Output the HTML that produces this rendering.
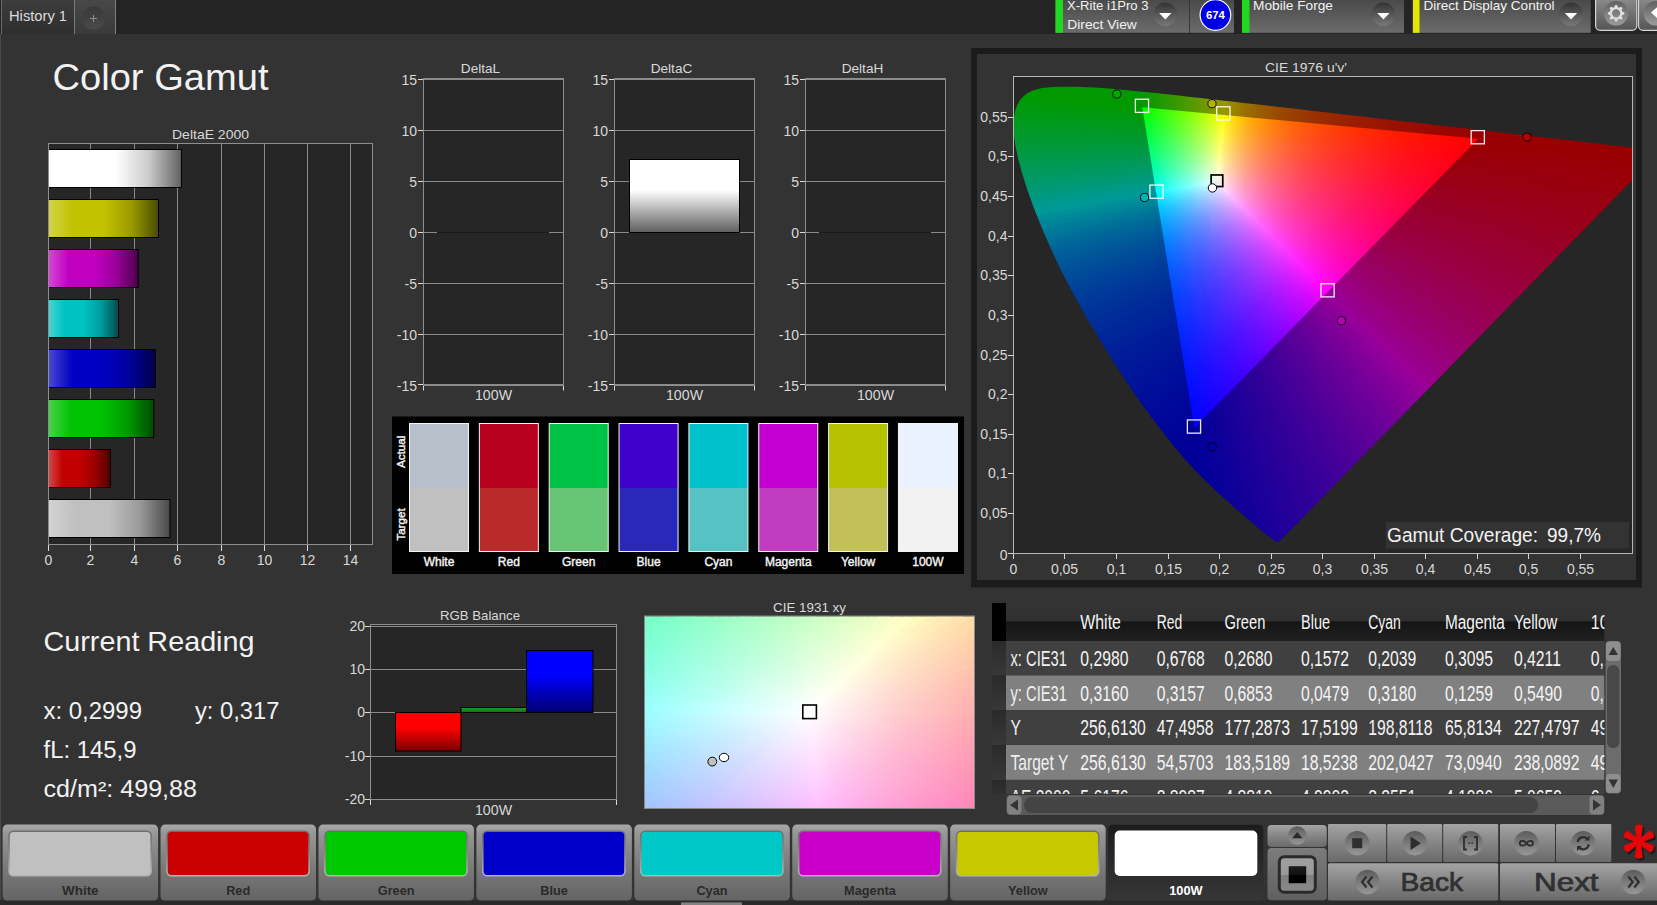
<!DOCTYPE html>
<html><head><meta charset="utf-8"><title>Color Gamut</title>
<style>html,body{margin:0;padding:0;background:#333;overflow:hidden}svg{display:block}text{font-family:"Liberation Sans",sans-serif}</style></head>
<body>
<svg width="1657" height="905" viewBox="0 0 1657 905">
<defs>
<linearGradient id="g1" x1="0" y1="0" x2="0" y2="1"><stop offset="0" stop-color="#3d3d3d"/><stop offset="1" stop-color="#2e2e2e"/></linearGradient>
<linearGradient id="g2" x1="0" y1="0" x2="0" y2="1"><stop offset="0" stop-color="#484848"/><stop offset="1" stop-color="#3a3a3a"/></linearGradient>
<linearGradient id="g3" x1="0" y1="0" x2="0" y2="1"><stop offset="0" stop-color="#383838"/><stop offset="1" stop-color="#4a4a4a"/></linearGradient>
<linearGradient id="g4" x1="0" y1="0" x2="1" y2="0"><stop offset="0" stop-color="#ffffff"/><stop offset="0.22" stop-color="#ffffff"/><stop offset="0.5" stop-color="#ffffff"/><stop offset="0.75" stop-color="#cccccc"/><stop offset="1" stop-color="#616161"/></linearGradient>
<linearGradient id="g5" x1="0" y1="0" x2="1" y2="0"><stop offset="0" stop-color="#d3d347"/><stop offset="0.22" stop-color="#c2c200"/><stop offset="0.5" stop-color="#c2c200"/><stop offset="0.75" stop-color="#9b9b00"/><stop offset="1" stop-color="#4a4a00"/></linearGradient>
<linearGradient id="g6" x1="0" y1="0" x2="1" y2="0"><stop offset="0" stop-color="#d347d3"/><stop offset="0.22" stop-color="#c200c2"/><stop offset="0.5" stop-color="#c200c2"/><stop offset="0.75" stop-color="#9b009b"/><stop offset="1" stop-color="#4a004a"/></linearGradient>
<linearGradient id="g7" x1="0" y1="0" x2="1" y2="0"><stop offset="0" stop-color="#47d3d3"/><stop offset="0.22" stop-color="#00c2c2"/><stop offset="0.5" stop-color="#00c2c2"/><stop offset="0.75" stop-color="#009b9b"/><stop offset="1" stop-color="#004a4a"/></linearGradient>
<linearGradient id="g8" x1="0" y1="0" x2="1" y2="0"><stop offset="0" stop-color="#4747d3"/><stop offset="0.22" stop-color="#0000c2"/><stop offset="0.5" stop-color="#0000c2"/><stop offset="0.75" stop-color="#00009b"/><stop offset="1" stop-color="#00004a"/></linearGradient>
<linearGradient id="g9" x1="0" y1="0" x2="1" y2="0"><stop offset="0" stop-color="#47d347"/><stop offset="0.22" stop-color="#00c200"/><stop offset="0.5" stop-color="#00c200"/><stop offset="0.75" stop-color="#009b00"/><stop offset="1" stop-color="#004a00"/></linearGradient>
<linearGradient id="g10" x1="0" y1="0" x2="1" y2="0"><stop offset="0" stop-color="#d34747"/><stop offset="0.22" stop-color="#c20000"/><stop offset="0.5" stop-color="#c20000"/><stop offset="0.75" stop-color="#9b0000"/><stop offset="1" stop-color="#4a0000"/></linearGradient>
<linearGradient id="g11" x1="0" y1="0" x2="1" y2="0"><stop offset="0" stop-color="#d2d2d2"/><stop offset="0.22" stop-color="#c0c0c0"/><stop offset="0.5" stop-color="#c0c0c0"/><stop offset="0.75" stop-color="#9a9a9a"/><stop offset="1" stop-color="#494949"/></linearGradient>
<linearGradient id="g12" x1="0" y1="0" x2="0" y2="1"><stop offset="0" stop-color="#ffffff"/><stop offset="0.42" stop-color="#ffffff"/><stop offset="1" stop-color="#5e5e5e"/></linearGradient>
<linearGradient id="w0" gradientUnits="userSpaceOnUse" x1="1217.36" y1="181.96" x2="1634.98" y2="187.43"><stop offset="0" stop-color="#ffffff"/><stop offset="0.032" stop-color="#ffc7d0"/><stop offset="0.065" stop-color="#ff9faf"/><stop offset="0.129" stop-color="#ff6a83"/><stop offset="0.194" stop-color="#ff4968"/><stop offset="0.258" stop-color="#ff3155"/><stop offset="0.387" stop-color="#ff133c"/><stop offset="0.516" stop-color="#ff002d"/><stop offset="0.758" stop-color="#ff001c"/><stop offset="1" stop-color="#ff0012"/></linearGradient>
<linearGradient id="w1" gradientUnits="userSpaceOnUse" x1="1217.36" y1="181.96" x2="1625.46" y2="198"><stop offset="0" stop-color="#ffffff"/><stop offset="0.032" stop-color="#ffc8d2"/><stop offset="0.064" stop-color="#ffa0b2"/><stop offset="0.129" stop-color="#ff6b88"/><stop offset="0.193" stop-color="#ff4a6d"/><stop offset="0.258" stop-color="#ff325b"/><stop offset="0.386" stop-color="#ff1443"/><stop offset="0.515" stop-color="#ff0034"/><stop offset="1" stop-color="#ff0019"/></linearGradient>
<linearGradient id="w2" gradientUnits="userSpaceOnUse" x1="1217.36" y1="181.96" x2="1615.26" y2="208.04"><stop offset="0" stop-color="#ffffff"/><stop offset="0.032" stop-color="#ffc8d4"/><stop offset="0.064" stop-color="#ffa1b6"/><stop offset="0.129" stop-color="#ff6d8d"/><stop offset="0.193" stop-color="#ff4b73"/><stop offset="0.258" stop-color="#ff3360"/><stop offset="0.387" stop-color="#ff1449"/><stop offset="0.515" stop-color="#ff003a"/><stop offset="1" stop-color="#ff001f"/></linearGradient>
<linearGradient id="w3" gradientUnits="userSpaceOnUse" x1="1217.36" y1="181.96" x2="1605.52" y2="217.63"><stop offset="0" stop-color="#ffffff"/><stop offset="0.032" stop-color="#ffc9d6"/><stop offset="0.064" stop-color="#ffa3b9"/><stop offset="0.129" stop-color="#ff6e91"/><stop offset="0.193" stop-color="#ff4c78"/><stop offset="0.258" stop-color="#ff3466"/><stop offset="0.387" stop-color="#ff154f"/><stop offset="0.516" stop-color="#ff0040"/><stop offset="1" stop-color="#ff0026"/></linearGradient>
<linearGradient id="w4" gradientUnits="userSpaceOnUse" x1="1217.36" y1="181.96" x2="1596.21" y2="226.8"><stop offset="0" stop-color="#ffffff"/><stop offset="0.032" stop-color="#ffcad8"/><stop offset="0.065" stop-color="#ffa4bc"/><stop offset="0.129" stop-color="#ff6f96"/><stop offset="0.194" stop-color="#ff4d7d"/><stop offset="0.258" stop-color="#ff356b"/><stop offset="0.387" stop-color="#ff1555"/><stop offset="0.516" stop-color="#ff0046"/><stop offset="1" stop-color="#ff002c"/></linearGradient>
<linearGradient id="w5" gradientUnits="userSpaceOnUse" x1="1217.36" y1="181.96" x2="1587.27" y2="235.6"><stop offset="0" stop-color="#ffffff"/><stop offset="0.032" stop-color="#ffcbda"/><stop offset="0.065" stop-color="#ffa5bf"/><stop offset="0.129" stop-color="#ff719a"/><stop offset="0.194" stop-color="#ff4e82"/><stop offset="0.258" stop-color="#ff3671"/><stop offset="0.387" stop-color="#ff155b"/><stop offset="0.517" stop-color="#ff004c"/><stop offset="1" stop-color="#ff0033"/></linearGradient>
<linearGradient id="w6" gradientUnits="userSpaceOnUse" x1="1217.36" y1="181.96" x2="1578.69" y2="244.05"><stop offset="0" stop-color="#ffffff"/><stop offset="0.032" stop-color="#ffccdc"/><stop offset="0.065" stop-color="#ffa6c2"/><stop offset="0.129" stop-color="#ff729f"/><stop offset="0.194" stop-color="#ff4f87"/><stop offset="0.258" stop-color="#ff3776"/><stop offset="0.388" stop-color="#ff1661"/><stop offset="0.517" stop-color="#ff0053"/><stop offset="1" stop-color="#ff003a"/></linearGradient>
<linearGradient id="w7" gradientUnits="userSpaceOnUse" x1="1217.36" y1="181.96" x2="1570.43" y2="252.19"><stop offset="0" stop-color="#ffffff"/><stop offset="0.032" stop-color="#ffcdde"/><stop offset="0.065" stop-color="#ffa7c5"/><stop offset="0.129" stop-color="#ff73a3"/><stop offset="0.194" stop-color="#ff508c"/><stop offset="0.259" stop-color="#ff387c"/><stop offset="0.388" stop-color="#ff1666"/><stop offset="0.517" stop-color="#ff0059"/><stop offset="1" stop-color="#ff0040"/></linearGradient>
<linearGradient id="w8" gradientUnits="userSpaceOnUse" x1="1217.36" y1="181.96" x2="1562.45" y2="260.05"><stop offset="0" stop-color="#ffffff"/><stop offset="0.032" stop-color="#ffcee0"/><stop offset="0.065" stop-color="#ffa8c8"/><stop offset="0.129" stop-color="#ff74a7"/><stop offset="0.194" stop-color="#ff5191"/><stop offset="0.259" stop-color="#ff3881"/><stop offset="0.388" stop-color="#ff166c"/><stop offset="0.518" stop-color="#ff005f"/><stop offset="1" stop-color="#ff0047"/></linearGradient>
<linearGradient id="w9" gradientUnits="userSpaceOnUse" x1="1217.36" y1="181.96" x2="1554.73" y2="267.64"><stop offset="0" stop-color="#ffffff"/><stop offset="0.032" stop-color="#ffcee1"/><stop offset="0.065" stop-color="#ffaacb"/><stop offset="0.129" stop-color="#ff76ab"/><stop offset="0.194" stop-color="#ff5396"/><stop offset="0.259" stop-color="#ff3987"/><stop offset="0.388" stop-color="#ff1772"/><stop offset="0.518" stop-color="#ff0065"/><stop offset="1" stop-color="#ff004e"/></linearGradient>
<linearGradient id="w10" gradientUnits="userSpaceOnUse" x1="1217.36" y1="181.96" x2="1547.26" y2="275"><stop offset="0" stop-color="#ffffff"/><stop offset="0.032" stop-color="#ffcfe3"/><stop offset="0.065" stop-color="#ffabce"/><stop offset="0.13" stop-color="#ff77af"/><stop offset="0.194" stop-color="#ff549b"/><stop offset="0.259" stop-color="#ff3a8c"/><stop offset="0.389" stop-color="#ff1778"/><stop offset="0.518" stop-color="#ff006c"/><stop offset="1" stop-color="#ff0054"/></linearGradient>
<linearGradient id="w11" gradientUnits="userSpaceOnUse" x1="1217.36" y1="181.96" x2="1540.01" y2="282.15"><stop offset="0" stop-color="#ffffff"/><stop offset="0.032" stop-color="#ffd0e5"/><stop offset="0.065" stop-color="#ffacd0"/><stop offset="0.13" stop-color="#ff78b3"/><stop offset="0.194" stop-color="#ff55a0"/><stop offset="0.259" stop-color="#ff3b92"/><stop offset="0.389" stop-color="#ff187e"/><stop offset="0.519" stop-color="#ff0072"/><stop offset="1" stop-color="#ff005b"/></linearGradient>
<linearGradient id="w12" gradientUnits="userSpaceOnUse" x1="1217.36" y1="181.96" x2="1532.95" y2="289.09"><stop offset="0" stop-color="#ffffff"/><stop offset="0.032" stop-color="#ffd1e6"/><stop offset="0.065" stop-color="#ffadd3"/><stop offset="0.13" stop-color="#ff79b7"/><stop offset="0.195" stop-color="#ff56a5"/><stop offset="0.259" stop-color="#ff3c97"/><stop offset="0.389" stop-color="#ff1884"/><stop offset="0.519" stop-color="#ff0078"/><stop offset="1" stop-color="#ff0062"/></linearGradient>
<linearGradient id="w13" gradientUnits="userSpaceOnUse" x1="1217.36" y1="181.96" x2="1526.08" y2="295.85"><stop offset="0" stop-color="#ffffff"/><stop offset="0.032" stop-color="#ffd1e8"/><stop offset="0.065" stop-color="#ffaed6"/><stop offset="0.13" stop-color="#ff7abb"/><stop offset="0.195" stop-color="#ff57a9"/><stop offset="0.26" stop-color="#ff3d9c"/><stop offset="0.389" stop-color="#ff188a"/><stop offset="0.519" stop-color="#ff007f"/><stop offset="1" stop-color="#ff0069"/></linearGradient>
<linearGradient id="w14" gradientUnits="userSpaceOnUse" x1="1217.36" y1="181.96" x2="1519.38" y2="302.45"><stop offset="0" stop-color="#ffffff"/><stop offset="0.032" stop-color="#ffd2e9"/><stop offset="0.065" stop-color="#ffafd8"/><stop offset="0.13" stop-color="#ff7cbf"/><stop offset="0.195" stop-color="#ff58ae"/><stop offset="0.26" stop-color="#ff3da2"/><stop offset="0.39" stop-color="#ff1991"/><stop offset="0.519" stop-color="#ff0085"/><stop offset="1" stop-color="#ff0071"/></linearGradient>
<linearGradient id="w15" gradientUnits="userSpaceOnUse" x1="1217.36" y1="181.96" x2="1512.82" y2="308.9"><stop offset="0" stop-color="#ffffff"/><stop offset="0.032" stop-color="#ffd3eb"/><stop offset="0.065" stop-color="#ffb0db"/><stop offset="0.13" stop-color="#ff7dc3"/><stop offset="0.195" stop-color="#ff59b3"/><stop offset="0.26" stop-color="#ff3ea7"/><stop offset="0.39" stop-color="#ff1997"/><stop offset="0.52" stop-color="#ff008c"/><stop offset="1" stop-color="#ff0078"/></linearGradient>
<linearGradient id="w16" gradientUnits="userSpaceOnUse" x1="1217.36" y1="181.96" x2="1506.41" y2="315.21"><stop offset="0" stop-color="#ffffff"/><stop offset="0.033" stop-color="#ffd3ec"/><stop offset="0.065" stop-color="#ffb1dd"/><stop offset="0.13" stop-color="#ff7ec7"/><stop offset="0.195" stop-color="#ff5ab8"/><stop offset="0.26" stop-color="#ff3fad"/><stop offset="0.39" stop-color="#ff1a9d"/><stop offset="0.52" stop-color="#ff0093"/><stop offset="1" stop-color="#ff0080"/></linearGradient>
<linearGradient id="w17" gradientUnits="userSpaceOnUse" x1="1217.36" y1="181.96" x2="1500.12" y2="321.4"><stop offset="0" stop-color="#ffffff"/><stop offset="0.033" stop-color="#ffd4ee"/><stop offset="0.065" stop-color="#ffb2e0"/><stop offset="0.13" stop-color="#ff7fcb"/><stop offset="0.195" stop-color="#ff5bbd"/><stop offset="0.26" stop-color="#ff40b2"/><stop offset="0.39" stop-color="#ff1aa4"/><stop offset="0.52" stop-color="#ff009a"/><stop offset="1" stop-color="#ff0087"/></linearGradient>
<linearGradient id="w18" gradientUnits="userSpaceOnUse" x1="1217.36" y1="181.96" x2="1493.94" y2="327.48"><stop offset="0" stop-color="#ffffff"/><stop offset="0.033" stop-color="#ffd5ef"/><stop offset="0.065" stop-color="#ffb3e2"/><stop offset="0.13" stop-color="#ff80cf"/><stop offset="0.195" stop-color="#ff5cc2"/><stop offset="0.26" stop-color="#ff41b8"/><stop offset="0.39" stop-color="#ff1baa"/><stop offset="0.521" stop-color="#ff00a1"/><stop offset="1" stop-color="#ff008f"/></linearGradient>
<linearGradient id="w19" gradientUnits="userSpaceOnUse" x1="1217.36" y1="181.96" x2="1487.87" y2="333.45"><stop offset="0" stop-color="#ffffff"/><stop offset="0.033" stop-color="#ffd5f1"/><stop offset="0.065" stop-color="#ffb4e5"/><stop offset="0.13" stop-color="#ff81d3"/><stop offset="0.195" stop-color="#ff5dc7"/><stop offset="0.26" stop-color="#ff42be"/><stop offset="0.391" stop-color="#ff1bb1"/><stop offset="0.521" stop-color="#ff00a8"/><stop offset="1" stop-color="#ff0097"/></linearGradient>
<linearGradient id="w20" gradientUnits="userSpaceOnUse" x1="1217.36" y1="181.96" x2="1481.88" y2="339.33"><stop offset="0" stop-color="#ffffff"/><stop offset="0.033" stop-color="#ffd6f2"/><stop offset="0.065" stop-color="#ffb5e7"/><stop offset="0.13" stop-color="#ff83d7"/><stop offset="0.195" stop-color="#ff5ecc"/><stop offset="0.261" stop-color="#ff43c3"/><stop offset="0.391" stop-color="#ff1bb7"/><stop offset="0.521" stop-color="#ff00af"/><stop offset="1" stop-color="#ff00a0"/></linearGradient>
<linearGradient id="w21" gradientUnits="userSpaceOnUse" x1="1217.36" y1="181.96" x2="1475.98" y2="345.14"><stop offset="0" stop-color="#ffffff"/><stop offset="0.033" stop-color="#ffd7f3"/><stop offset="0.065" stop-color="#ffb6ea"/><stop offset="0.13" stop-color="#ff84db"/><stop offset="0.196" stop-color="#ff5fd1"/><stop offset="0.261" stop-color="#ff44c9"/><stop offset="0.391" stop-color="#ff1cbe"/><stop offset="0.521" stop-color="#ff00b7"/><stop offset="1" stop-color="#ff00a8"/></linearGradient>
<linearGradient id="w22" gradientUnits="userSpaceOnUse" x1="1217.36" y1="181.96" x2="1470.14" y2="350.87"><stop offset="0" stop-color="#ffffff"/><stop offset="0.033" stop-color="#ffd7f5"/><stop offset="0.065" stop-color="#ffb7ec"/><stop offset="0.13" stop-color="#ff85e0"/><stop offset="0.196" stop-color="#ff61d6"/><stop offset="0.261" stop-color="#ff45cf"/><stop offset="0.391" stop-color="#ff1cc5"/><stop offset="0.522" stop-color="#ff00be"/><stop offset="1" stop-color="#ff00b1"/></linearGradient>
<linearGradient id="w23" gradientUnits="userSpaceOnUse" x1="1217.36" y1="181.96" x2="1464.37" y2="356.53"><stop offset="0" stop-color="#ffffff"/><stop offset="0.065" stop-color="#ffb8ef"/><stop offset="0.13" stop-color="#ff86e4"/><stop offset="0.196" stop-color="#ff62db"/><stop offset="0.261" stop-color="#ff46d5"/><stop offset="0.391" stop-color="#ff1dcc"/><stop offset="0.522" stop-color="#ff00c6"/><stop offset="1" stop-color="#ff00bb"/></linearGradient>
<linearGradient id="w24" gradientUnits="userSpaceOnUse" x1="1217.36" y1="181.96" x2="1458.66" y2="362.15"><stop offset="0" stop-color="#ffffff"/><stop offset="0.065" stop-color="#ffb9f1"/><stop offset="0.131" stop-color="#ff87e8"/><stop offset="0.196" stop-color="#ff63e1"/><stop offset="0.261" stop-color="#ff47db"/><stop offset="0.392" stop-color="#ff1dd4"/><stop offset="0.522" stop-color="#ff00ce"/><stop offset="1" stop-color="#ff00c4"/></linearGradient>
<linearGradient id="w25" gradientUnits="userSpaceOnUse" x1="1217.36" y1="181.96" x2="1452.99" y2="367.71"><stop offset="0" stop-color="#ffffff"/><stop offset="0.065" stop-color="#ffbaf4"/><stop offset="0.131" stop-color="#ff89ec"/><stop offset="0.196" stop-color="#ff64e6"/><stop offset="0.261" stop-color="#ff48e2"/><stop offset="0.392" stop-color="#ff1edb"/><stop offset="0.522" stop-color="#ff00d7"/><stop offset="1" stop-color="#ff00ce"/></linearGradient>
<linearGradient id="w26" gradientUnits="userSpaceOnUse" x1="1217.36" y1="181.96" x2="1447.35" y2="373.24"><stop offset="0" stop-color="#ffffff"/><stop offset="0.065" stop-color="#ffbbf6"/><stop offset="0.131" stop-color="#ff8af0"/><stop offset="0.196" stop-color="#ff65ec"/><stop offset="0.261" stop-color="#ff49e8"/><stop offset="0.392" stop-color="#ff1ee3"/><stop offset="0.523" stop-color="#ff00df"/><stop offset="1" stop-color="#ff00d8"/></linearGradient>
<linearGradient id="w27" gradientUnits="userSpaceOnUse" x1="1217.36" y1="181.96" x2="1441.75" y2="378.74"><stop offset="0" stop-color="#ffffff"/><stop offset="0.065" stop-color="#ffbcf9"/><stop offset="0.131" stop-color="#ff8bf5"/><stop offset="0.196" stop-color="#ff66f1"/><stop offset="0.261" stop-color="#ff4aef"/><stop offset="0.392" stop-color="#ff1feb"/><stop offset="0.523" stop-color="#ff00e8"/><stop offset="1" stop-color="#ff00e3"/></linearGradient>
<linearGradient id="w28" gradientUnits="userSpaceOnUse" x1="1217.36" y1="181.96" x2="1436.16" y2="384.22"><stop offset="0" stop-color="#ffffff"/><stop offset="0.065" stop-color="#ffbdfb"/><stop offset="0.131" stop-color="#ff8cf9"/><stop offset="0.196" stop-color="#ff68f7"/><stop offset="0.262" stop-color="#ff4bf5"/><stop offset="0.392" stop-color="#ff1ff3"/><stop offset="0.523" stop-color="#ff00f2"/><stop offset="1" stop-color="#ff00ee"/></linearGradient>
<linearGradient id="w29" gradientUnits="userSpaceOnUse" x1="1217.36" y1="181.96" x2="1430.59" y2="389.68"><stop offset="0" stop-color="#ffffff"/><stop offset="0.065" stop-color="#ffbefe"/><stop offset="0.131" stop-color="#ff8efd"/><stop offset="0.196" stop-color="#ff69fd"/><stop offset="0.262" stop-color="#ff4cfc"/><stop offset="0.393" stop-color="#ff20fc"/><stop offset="0.523" stop-color="#ff00fb"/><stop offset="1" stop-color="#ff00fa"/></linearGradient>
<linearGradient id="w30" gradientUnits="userSpaceOnUse" x1="1217.36" y1="181.96" x2="1425.25" y2="395.37"><stop offset="0" stop-color="#ffffff"/><stop offset="0.065" stop-color="#fdbeff"/><stop offset="0.131" stop-color="#fc8eff"/><stop offset="0.196" stop-color="#fb69ff"/><stop offset="0.262" stop-color="#fb4cff"/><stop offset="0.392" stop-color="#fa20ff"/><stop offset="0.523" stop-color="#f900ff"/><stop offset="1" stop-color="#f700ff"/></linearGradient>
<linearGradient id="w31" gradientUnits="userSpaceOnUse" x1="1217.36" y1="181.96" x2="1419.92" y2="401.08"><stop offset="0" stop-color="#ffffff"/><stop offset="0.065" stop-color="#fbbdff"/><stop offset="0.131" stop-color="#f88cff"/><stop offset="0.196" stop-color="#f568ff"/><stop offset="0.261" stop-color="#f44bff"/><stop offset="0.392" stop-color="#f11fff"/><stop offset="0.523" stop-color="#ef00ff"/><stop offset="1" stop-color="#ec00ff"/></linearGradient>
<linearGradient id="w32" gradientUnits="userSpaceOnUse" x1="1217.36" y1="181.96" x2="1414.55" y2="406.82"><stop offset="0" stop-color="#ffffff"/><stop offset="0.065" stop-color="#f8bcff"/><stop offset="0.131" stop-color="#f38bff"/><stop offset="0.196" stop-color="#f066ff"/><stop offset="0.261" stop-color="#ed4aff"/><stop offset="0.392" stop-color="#e91fff"/><stop offset="0.523" stop-color="#e600ff"/><stop offset="1" stop-color="#e000ff"/></linearGradient>
<linearGradient id="w33" gradientUnits="userSpaceOnUse" x1="1217.36" y1="181.96" x2="1409.17" y2="412.58"><stop offset="0" stop-color="#ffffff"/><stop offset="0.065" stop-color="#f6bbff"/><stop offset="0.131" stop-color="#ef8aff"/><stop offset="0.196" stop-color="#ea65ff"/><stop offset="0.261" stop-color="#e649ff"/><stop offset="0.392" stop-color="#e11eff"/><stop offset="0.522" stop-color="#dd00ff"/><stop offset="1" stop-color="#d500ff"/></linearGradient>
<linearGradient id="w34" gradientUnits="userSpaceOnUse" x1="1217.36" y1="181.96" x2="1403.74" y2="418.38"><stop offset="0" stop-color="#ffffff"/><stop offset="0.065" stop-color="#f3baff"/><stop offset="0.13" stop-color="#eb89ff"/><stop offset="0.196" stop-color="#e564ff"/><stop offset="0.261" stop-color="#e048ff"/><stop offset="0.391" stop-color="#d91eff"/><stop offset="0.522" stop-color="#d400ff"/><stop offset="1" stop-color="#cb00ff"/></linearGradient>
<linearGradient id="w35" gradientUnits="userSpaceOnUse" x1="1217.36" y1="181.96" x2="1398.27" y2="424.23"><stop offset="0" stop-color="#ffffff"/><stop offset="0.065" stop-color="#f1b9ff"/><stop offset="0.13" stop-color="#e688ff"/><stop offset="0.196" stop-color="#df63ff"/><stop offset="0.261" stop-color="#d947ff"/><stop offset="0.391" stop-color="#d11eff"/><stop offset="0.522" stop-color="#cc00ff"/><stop offset="1" stop-color="#c100ff"/></linearGradient>
<linearGradient id="w36" gradientUnits="userSpaceOnUse" x1="1217.36" y1="181.96" x2="1392.75" y2="430.13"><stop offset="0" stop-color="#ffffff"/><stop offset="0.065" stop-color="#eeb8ff"/><stop offset="0.13" stop-color="#e287ff"/><stop offset="0.195" stop-color="#da62ff"/><stop offset="0.261" stop-color="#d346ff"/><stop offset="0.391" stop-color="#ca1dff"/><stop offset="0.521" stop-color="#c300ff"/><stop offset="1" stop-color="#b700ff"/></linearGradient>
<linearGradient id="w37" gradientUnits="userSpaceOnUse" x1="1217.36" y1="181.96" x2="1387.16" y2="436.09"><stop offset="0" stop-color="#ffffff"/><stop offset="0.033" stop-color="#f4d8ff"/><stop offset="0.065" stop-color="#ebb7ff"/><stop offset="0.13" stop-color="#de86ff"/><stop offset="0.195" stop-color="#d461ff"/><stop offset="0.26" stop-color="#cd45ff"/><stop offset="0.391" stop-color="#c21dff"/><stop offset="0.521" stop-color="#bb00ff"/><stop offset="1" stop-color="#ad00ff"/></linearGradient>
<linearGradient id="w38" gradientUnits="userSpaceOnUse" x1="1217.36" y1="181.96" x2="1381.51" y2="442.12"><stop offset="0" stop-color="#ffffff"/><stop offset="0.033" stop-color="#f3d7ff"/><stop offset="0.065" stop-color="#e9b6ff"/><stop offset="0.13" stop-color="#da85ff"/><stop offset="0.195" stop-color="#cf60ff"/><stop offset="0.26" stop-color="#c744ff"/><stop offset="0.39" stop-color="#bb1cff"/><stop offset="0.521" stop-color="#b300ff"/><stop offset="1" stop-color="#a400ff"/></linearGradient>
<linearGradient id="w39" gradientUnits="userSpaceOnUse" x1="1217.36" y1="181.96" x2="1375.78" y2="448.24"><stop offset="0" stop-color="#ffffff"/><stop offset="0.033" stop-color="#f1d6ff"/><stop offset="0.065" stop-color="#e6b5ff"/><stop offset="0.13" stop-color="#d683ff"/><stop offset="0.195" stop-color="#ca5fff"/><stop offset="0.26" stop-color="#c143ff"/><stop offset="0.39" stop-color="#b41cff"/><stop offset="0.52" stop-color="#ac00ff"/><stop offset="1" stop-color="#9b00ff"/></linearGradient>
<linearGradient id="w40" gradientUnits="userSpaceOnUse" x1="1217.36" y1="181.96" x2="1369.96" y2="454.45"><stop offset="0" stop-color="#ffffff"/><stop offset="0.032" stop-color="#f0d6ff"/><stop offset="0.065" stop-color="#e4b5ff"/><stop offset="0.13" stop-color="#d282ff"/><stop offset="0.195" stop-color="#c55eff"/><stop offset="0.26" stop-color="#bb43ff"/><stop offset="0.39" stop-color="#ad1bff"/><stop offset="0.52" stop-color="#a400ff"/><stop offset="1" stop-color="#9200ff"/></linearGradient>
<linearGradient id="w41" gradientUnits="userSpaceOnUse" x1="1217.36" y1="181.96" x2="1364.05" y2="460.76"><stop offset="0" stop-color="#ffffff"/><stop offset="0.032" stop-color="#eed5ff"/><stop offset="0.065" stop-color="#e1b4ff"/><stop offset="0.13" stop-color="#ce81ff"/><stop offset="0.195" stop-color="#c05dff"/><stop offset="0.26" stop-color="#b542ff"/><stop offset="0.39" stop-color="#a61bff"/><stop offset="0.52" stop-color="#9d00ff"/><stop offset="1" stop-color="#8a00ff"/></linearGradient>
<linearGradient id="w42" gradientUnits="userSpaceOnUse" x1="1217.36" y1="181.96" x2="1358.02" y2="467.19"><stop offset="0" stop-color="#ffffff"/><stop offset="0.032" stop-color="#edd5ff"/><stop offset="0.065" stop-color="#dfb3ff"/><stop offset="0.13" stop-color="#c980ff"/><stop offset="0.195" stop-color="#ba5cff"/><stop offset="0.26" stop-color="#af41ff"/><stop offset="0.389" stop-color="#a01bff"/><stop offset="0.519" stop-color="#9500ff"/><stop offset="1" stop-color="#8100ff"/></linearGradient>
<linearGradient id="w43" gradientUnits="userSpaceOnUse" x1="1217.36" y1="181.96" x2="1351.88" y2="473.74"><stop offset="0" stop-color="#ffffff"/><stop offset="0.032" stop-color="#ebd4ff"/><stop offset="0.065" stop-color="#dcb2ff"/><stop offset="0.13" stop-color="#c57fff"/><stop offset="0.195" stop-color="#b55bff"/><stop offset="0.259" stop-color="#a940ff"/><stop offset="0.389" stop-color="#991aff"/><stop offset="0.519" stop-color="#8e00ff"/><stop offset="1" stop-color="#7900ff"/></linearGradient>
<linearGradient id="w44" gradientUnits="userSpaceOnUse" x1="1217.36" y1="181.96" x2="1345.6" y2="480.44"><stop offset="0" stop-color="#ffffff"/><stop offset="0.032" stop-color="#ead3ff"/><stop offset="0.065" stop-color="#d9b1ff"/><stop offset="0.13" stop-color="#c17eff"/><stop offset="0.194" stop-color="#b05aff"/><stop offset="0.259" stop-color="#a43fff"/><stop offset="0.389" stop-color="#921aff"/><stop offset="0.518" stop-color="#8700ff"/><stop offset="1" stop-color="#7100ff"/></linearGradient>
<linearGradient id="w45" gradientUnits="userSpaceOnUse" x1="1217.36" y1="181.96" x2="1339.17" y2="487.28"><stop offset="0" stop-color="#ffffff"/><stop offset="0.032" stop-color="#e8d3ff"/><stop offset="0.065" stop-color="#d7b0ff"/><stop offset="0.13" stop-color="#bd7dff"/><stop offset="0.194" stop-color="#ab59ff"/><stop offset="0.259" stop-color="#9e3fff"/><stop offset="0.389" stop-color="#8c19ff"/><stop offset="0.518" stop-color="#8000ff"/><stop offset="1" stop-color="#6900ff"/></linearGradient>
<linearGradient id="w46" gradientUnits="userSpaceOnUse" x1="1217.36" y1="181.96" x2="1332.59" y2="494.3"><stop offset="0" stop-color="#ffffff"/><stop offset="0.032" stop-color="#e7d2ff"/><stop offset="0.065" stop-color="#d4afff"/><stop offset="0.129" stop-color="#b97cff"/><stop offset="0.194" stop-color="#a658ff"/><stop offset="0.259" stop-color="#983eff"/><stop offset="0.388" stop-color="#8519ff"/><stop offset="0.518" stop-color="#7900ff"/><stop offset="1" stop-color="#6100ff"/></linearGradient>
<linearGradient id="w47" gradientUnits="userSpaceOnUse" x1="1217.36" y1="181.96" x2="1325.83" y2="501.5"><stop offset="0" stop-color="#ffffff"/><stop offset="0.032" stop-color="#e5d1ff"/><stop offset="0.065" stop-color="#d1aeff"/><stop offset="0.129" stop-color="#b57bff"/><stop offset="0.194" stop-color="#a157ff"/><stop offset="0.259" stop-color="#923dff"/><stop offset="0.388" stop-color="#7f19ff"/><stop offset="0.517" stop-color="#7200ff"/><stop offset="1" stop-color="#5a00ff"/></linearGradient>
<linearGradient id="w48" gradientUnits="userSpaceOnUse" x1="1217.36" y1="181.96" x2="1318.88" y2="508.91"><stop offset="0" stop-color="#ffffff"/><stop offset="0.032" stop-color="#e4d1ff"/><stop offset="0.065" stop-color="#cfadff"/><stop offset="0.129" stop-color="#b07aff"/><stop offset="0.194" stop-color="#9c56ff"/><stop offset="0.258" stop-color="#8d3cff"/><stop offset="0.388" stop-color="#7818ff"/><stop offset="0.517" stop-color="#6b00ff"/><stop offset="1" stop-color="#5200ff"/></linearGradient>
<linearGradient id="w49" gradientUnits="userSpaceOnUse" x1="1217.36" y1="181.96" x2="1311.72" y2="516.54"><stop offset="0" stop-color="#ffffff"/><stop offset="0.032" stop-color="#e2d0ff"/><stop offset="0.065" stop-color="#ccacff"/><stop offset="0.129" stop-color="#ac79ff"/><stop offset="0.194" stop-color="#9655ff"/><stop offset="0.258" stop-color="#873bff"/><stop offset="0.387" stop-color="#7218ff"/><stop offset="0.517" stop-color="#6400ff"/><stop offset="1" stop-color="#4a00ff"/></linearGradient>
<linearGradient id="w50" gradientUnits="userSpaceOnUse" x1="1217.36" y1="181.96" x2="1304.33" y2="524.41"><stop offset="0" stop-color="#ffffff"/><stop offset="0.032" stop-color="#e0cfff"/><stop offset="0.065" stop-color="#c9abff"/><stop offset="0.129" stop-color="#a877ff"/><stop offset="0.194" stop-color="#9154ff"/><stop offset="0.258" stop-color="#813bff"/><stop offset="0.387" stop-color="#6b17ff"/><stop offset="0.516" stop-color="#5d00ff"/><stop offset="1" stop-color="#4300ff"/></linearGradient>
<linearGradient id="w51" gradientUnits="userSpaceOnUse" x1="1217.36" y1="181.96" x2="1296.69" y2="532.55"><stop offset="0" stop-color="#ffffff"/><stop offset="0.032" stop-color="#decfff"/><stop offset="0.064" stop-color="#c6aaff"/><stop offset="0.129" stop-color="#a376ff"/><stop offset="0.193" stop-color="#8c53ff"/><stop offset="0.258" stop-color="#7b3aff"/><stop offset="0.387" stop-color="#6517ff"/><stop offset="0.516" stop-color="#5600ff"/><stop offset="1" stop-color="#3b00ff"/></linearGradient>
<linearGradient id="w52" gradientUnits="userSpaceOnUse" x1="1217.36" y1="181.96" x2="1288.77" y2="540.97"><stop offset="0" stop-color="#ffffff"/><stop offset="0.032" stop-color="#ddceff"/><stop offset="0.064" stop-color="#c3a9ff"/><stop offset="0.129" stop-color="#9f75ff"/><stop offset="0.193" stop-color="#8752ff"/><stop offset="0.258" stop-color="#7539ff"/><stop offset="0.387" stop-color="#5e17ff"/><stop offset="0.515" stop-color="#4f00ff"/><stop offset="1" stop-color="#3400ff"/></linearGradient>
<linearGradient id="w53" gradientUnits="userSpaceOnUse" x1="1217.36" y1="181.96" x2="1279.47" y2="543.41"><stop offset="0" stop-color="#ffffff"/><stop offset="0.033" stop-color="#dbcdff"/><stop offset="0.065" stop-color="#c0a8ff"/><stop offset="0.131" stop-color="#9a74ff"/><stop offset="0.196" stop-color="#8151ff"/><stop offset="0.262" stop-color="#7038ff"/><stop offset="0.393" stop-color="#5816ff"/><stop offset="0.524" stop-color="#4900ff"/><stop offset="1" stop-color="#2d00ff"/></linearGradient>
<linearGradient id="w54" gradientUnits="userSpaceOnUse" x1="1217.36" y1="181.96" x2="1270.01" y2="545.06"><stop offset="0" stop-color="#ffffff"/><stop offset="0.033" stop-color="#d9ccff"/><stop offset="0.067" stop-color="#bda7ff"/><stop offset="0.133" stop-color="#9673ff"/><stop offset="0.2" stop-color="#7c50ff"/><stop offset="0.267" stop-color="#6a37ff"/><stop offset="0.4" stop-color="#5116ff"/><stop offset="0.534" stop-color="#4200ff"/><stop offset="1" stop-color="#2700ff"/></linearGradient>
<linearGradient id="w55" gradientUnits="userSpaceOnUse" x1="1217.36" y1="181.96" x2="1259.54" y2="538.32"><stop offset="0" stop-color="#ffffff"/><stop offset="0.035" stop-color="#d7ccff"/><stop offset="0.07" stop-color="#baa6ff"/><stop offset="0.139" stop-color="#9172ff"/><stop offset="0.209" stop-color="#764fff"/><stop offset="0.279" stop-color="#6436ff"/><stop offset="0.418" stop-color="#4b16ff"/><stop offset="0.557" stop-color="#3b00ff"/><stop offset="1" stop-color="#2100ff"/></linearGradient>
<linearGradient id="w56" gradientUnits="userSpaceOnUse" x1="1217.36" y1="181.96" x2="1249.3" y2="529.5"><stop offset="0" stop-color="#ffffff"/><stop offset="0.037" stop-color="#d5cbff"/><stop offset="0.073" stop-color="#b6a5ff"/><stop offset="0.146" stop-color="#8c70ff"/><stop offset="0.22" stop-color="#714eff"/><stop offset="0.293" stop-color="#5d36ff"/><stop offset="0.439" stop-color="#4415ff"/><stop offset="0.585" stop-color="#3400ff"/><stop offset="1" stop-color="#1b00ff"/></linearGradient>
<linearGradient id="w57" gradientUnits="userSpaceOnUse" x1="1217.36" y1="181.96" x2="1239.57" y2="520.71"><stop offset="0" stop-color="#ffffff"/><stop offset="0.038" stop-color="#d3caff"/><stop offset="0.077" stop-color="#b3a3ff"/><stop offset="0.154" stop-color="#876fff"/><stop offset="0.231" stop-color="#6b4dff"/><stop offset="0.308" stop-color="#5735ff"/><stop offset="0.462" stop-color="#3d15ff"/><stop offset="0.616" stop-color="#2d00ff"/><stop offset="1" stop-color="#1600ff"/></linearGradient>
<linearGradient id="w58" gradientUnits="userSpaceOnUse" x1="1217.36" y1="181.96" x2="1230.35" y2="512.5"><stop offset="0" stop-color="#ffffff"/><stop offset="0.04" stop-color="#d1c9ff"/><stop offset="0.081" stop-color="#afa2ff"/><stop offset="0.162" stop-color="#826eff"/><stop offset="0.243" stop-color="#654cff"/><stop offset="0.324" stop-color="#5134ff"/><stop offset="0.485" stop-color="#3714ff"/><stop offset="0.647" stop-color="#2600ff"/><stop offset="1" stop-color="#1100ff"/></linearGradient>
<linearGradient id="w59" gradientUnits="userSpaceOnUse" x1="1217.36" y1="181.96" x2="1221.59" y2="504.51"><stop offset="0" stop-color="#ffffff"/><stop offset="0.043" stop-color="#cec8ff"/><stop offset="0.085" stop-color="#aca1ff"/><stop offset="0.17" stop-color="#7d6cff"/><stop offset="0.255" stop-color="#5f4bff"/><stop offset="0.34" stop-color="#4b33ff"/><stop offset="0.511" stop-color="#3014ff"/><stop offset="0.681" stop-color="#1f00ff"/><stop offset="1" stop-color="#0b00ff"/></linearGradient>
<linearGradient id="w60" gradientUnits="userSpaceOnUse" x1="1217.36" y1="181.96" x2="1213.24" y2="496.71"><stop offset="0" stop-color="#ffffff"/><stop offset="0.045" stop-color="#ccc7ff"/><stop offset="0.09" stop-color="#a8a0ff"/><stop offset="0.179" stop-color="#786bff"/><stop offset="0.269" stop-color="#5949ff"/><stop offset="0.358" stop-color="#4432ff"/><stop offset="0.537" stop-color="#2914ff"/><stop offset="0.717" stop-color="#1800ff"/><stop offset="1" stop-color="#0600ff"/></linearGradient>
<linearGradient id="w61" gradientUnits="userSpaceOnUse" x1="1217.36" y1="181.96" x2="1205.3" y2="488.97"><stop offset="0" stop-color="#ffffff"/><stop offset="0.047" stop-color="#c9c6ff"/><stop offset="0.094" stop-color="#a49eff"/><stop offset="0.189" stop-color="#726aff"/><stop offset="0.283" stop-color="#5348ff"/><stop offset="0.378" stop-color="#3e31ff"/><stop offset="0.566" stop-color="#2213ff"/><stop offset="0.755" stop-color="#1000ff"/><stop offset="1" stop-color="#0100ff"/></linearGradient>
<linearGradient id="w62" gradientUnits="userSpaceOnUse" x1="1217.36" y1="181.96" x2="1197.74" y2="481.38"><stop offset="0" stop-color="#ffffff"/><stop offset="0.05" stop-color="#c7c5ff"/><stop offset="0.1" stop-color="#a09dff"/><stop offset="0.199" stop-color="#6d68ff"/><stop offset="0.299" stop-color="#4d47ff"/><stop offset="0.398" stop-color="#3730ff"/><stop offset="0.597" stop-color="#1a13ff"/><stop offset="0.796" stop-color="#0900ff"/><stop offset="1" stop-color="#0000ff"/></linearGradient>
<linearGradient id="w63" gradientUnits="userSpaceOnUse" x1="1217.36" y1="181.96" x2="1190.54" y2="473.91"><stop offset="0" stop-color="#ffffff"/><stop offset="0.053" stop-color="#c4c4ff"/><stop offset="0.105" stop-color="#9c9bff"/><stop offset="0.21" stop-color="#6767ff"/><stop offset="0.315" stop-color="#4646ff"/><stop offset="0.421" stop-color="#302fff"/><stop offset="0.631" stop-color="#1312ff"/><stop offset="0.841" stop-color="#0100ff"/><stop offset="1" stop-color="#0000ff"/></linearGradient>
<linearGradient id="w64" gradientUnits="userSpaceOnUse" x1="1217.36" y1="181.96" x2="1183.7" y2="466.38"><stop offset="0" stop-color="#ffffff"/><stop offset="0.049" stop-color="#c7c8ff"/><stop offset="0.099" stop-color="#9fa2ff"/><stop offset="0.197" stop-color="#6b6fff"/><stop offset="0.296" stop-color="#494eff"/><stop offset="0.395" stop-color="#3237ff"/><stop offset="0.592" stop-color="#141aff"/><stop offset="0.789" stop-color="#0007ff"/><stop offset="0.895" stop-color="#0000ff"/><stop offset="1" stop-color="#0000ff"/></linearGradient>
<linearGradient id="w65" gradientUnits="userSpaceOnUse" x1="1217.36" y1="181.96" x2="1177.22" y2="458.86"><stop offset="0" stop-color="#ffffff"/><stop offset="0.046" stop-color="#cacdff"/><stop offset="0.093" stop-color="#a3a8ff"/><stop offset="0.185" stop-color="#6f77ff"/><stop offset="0.278" stop-color="#4d56ff"/><stop offset="0.37" stop-color="#3540ff"/><stop offset="0.555" stop-color="#1522ff"/><stop offset="0.741" stop-color="#000fff"/><stop offset="1" stop-color="#0000ff"/></linearGradient>
<linearGradient id="w66" gradientUnits="userSpaceOnUse" x1="1217.36" y1="181.96" x2="1171.08" y2="451.3"><stop offset="0" stop-color="#ffffff"/><stop offset="0.044" stop-color="#ccd0ff"/><stop offset="0.088" stop-color="#a7aeff"/><stop offset="0.175" stop-color="#737eff"/><stop offset="0.263" stop-color="#505eff"/><stop offset="0.35" stop-color="#3747ff"/><stop offset="0.525" stop-color="#1629ff"/><stop offset="0.7" stop-color="#0016ff"/><stop offset="1" stop-color="#0000ff"/></linearGradient>
<linearGradient id="w67" gradientUnits="userSpaceOnUse" x1="1217.36" y1="181.96" x2="1165.26" y2="443.91"><stop offset="0" stop-color="#ffffff"/><stop offset="0.042" stop-color="#cfd4ff"/><stop offset="0.083" stop-color="#aab3ff"/><stop offset="0.166" stop-color="#7684ff"/><stop offset="0.25" stop-color="#5365ff"/><stop offset="0.333" stop-color="#3a4eff"/><stop offset="0.499" stop-color="#1730ff"/><stop offset="0.666" stop-color="#001cff"/><stop offset="1" stop-color="#0004ff"/></linearGradient>
<linearGradient id="w68" gradientUnits="userSpaceOnUse" x1="1217.36" y1="181.96" x2="1159.73" y2="436.68"><stop offset="0" stop-color="#ffffff"/><stop offset="0.04" stop-color="#d1d6ff"/><stop offset="0.08" stop-color="#adb7ff"/><stop offset="0.159" stop-color="#798aff"/><stop offset="0.239" stop-color="#566cff"/><stop offset="0.318" stop-color="#3c55ff"/><stop offset="0.477" stop-color="#1837ff"/><stop offset="0.637" stop-color="#0022ff"/><stop offset="1" stop-color="#0007ff"/></linearGradient>
<linearGradient id="w69" gradientUnits="userSpaceOnUse" x1="1217.36" y1="181.96" x2="1154.46" y2="429.66"><stop offset="0" stop-color="#ffffff"/><stop offset="0.038" stop-color="#d2d9ff"/><stop offset="0.076" stop-color="#afbbff"/><stop offset="0.153" stop-color="#7c90ff"/><stop offset="0.229" stop-color="#5872ff"/><stop offset="0.306" stop-color="#3e5cff"/><stop offset="0.458" stop-color="#193dff"/><stop offset="0.611" stop-color="#0029ff"/><stop offset="1" stop-color="#000aff"/></linearGradient>
<linearGradient id="w70" gradientUnits="userSpaceOnUse" x1="1217.36" y1="181.96" x2="1149.42" y2="422.86"><stop offset="0" stop-color="#ffffff"/><stop offset="0.037" stop-color="#d4dbff"/><stop offset="0.074" stop-color="#b2bfff"/><stop offset="0.147" stop-color="#7f95ff"/><stop offset="0.221" stop-color="#5b78ff"/><stop offset="0.294" stop-color="#4062ff"/><stop offset="0.441" stop-color="#1a43ff"/><stop offset="0.589" stop-color="#002eff"/><stop offset="1" stop-color="#000eff"/></linearGradient>
<linearGradient id="w71" gradientUnits="userSpaceOnUse" x1="1217.36" y1="181.96" x2="1144.61" y2="416.27"><stop offset="0" stop-color="#ffffff"/><stop offset="0.036" stop-color="#d5ddff"/><stop offset="0.071" stop-color="#b4c3ff"/><stop offset="0.142" stop-color="#819aff"/><stop offset="0.213" stop-color="#5d7dff"/><stop offset="0.284" stop-color="#4267ff"/><stop offset="0.427" stop-color="#1b49ff"/><stop offset="0.569" stop-color="#0034ff"/><stop offset="1" stop-color="#0011ff"/></linearGradient>
<linearGradient id="w72" gradientUnits="userSpaceOnUse" x1="1217.36" y1="181.96" x2="1140.05" y2="409.73"><stop offset="0" stop-color="#ffffff"/><stop offset="0.034" stop-color="#d7dfff"/><stop offset="0.069" stop-color="#b6c6ff"/><stop offset="0.138" stop-color="#849fff"/><stop offset="0.207" stop-color="#5f82ff"/><stop offset="0.276" stop-color="#446dff"/><stop offset="0.413" stop-color="#1c4eff"/><stop offset="0.551" stop-color="#003aff"/><stop offset="0.776" stop-color="#0023ff"/><stop offset="1" stop-color="#0014ff"/></linearGradient>
<linearGradient id="w73" gradientUnits="userSpaceOnUse" x1="1217.36" y1="181.96" x2="1135.66" y2="403.43"><stop offset="0" stop-color="#ffffff"/><stop offset="0.033" stop-color="#d8e1ff"/><stop offset="0.067" stop-color="#b8c9ff"/><stop offset="0.134" stop-color="#86a3ff"/><stop offset="0.201" stop-color="#6287ff"/><stop offset="0.268" stop-color="#4572ff"/><stop offset="0.402" stop-color="#1d54ff"/><stop offset="0.536" stop-color="#003fff"/><stop offset="0.768" stop-color="#0027ff"/><stop offset="1" stop-color="#0018ff"/></linearGradient>
<linearGradient id="w74" gradientUnits="userSpaceOnUse" x1="1217.36" y1="181.96" x2="1131.47" y2="397.26"><stop offset="0" stop-color="#ffffff"/><stop offset="0.065" stop-color="#b9cbff"/><stop offset="0.13" stop-color="#88a7ff"/><stop offset="0.196" stop-color="#648cff"/><stop offset="0.261" stop-color="#4777ff"/><stop offset="0.391" stop-color="#1e59ff"/><stop offset="0.521" stop-color="#0044ff"/><stop offset="0.761" stop-color="#002bff"/><stop offset="1" stop-color="#001bff"/></linearGradient>
<linearGradient id="w75" gradientUnits="userSpaceOnUse" x1="1217.36" y1="181.96" x2="1127.48" y2="391.17"><stop offset="0" stop-color="#ffffff"/><stop offset="0.064" stop-color="#bbceff"/><stop offset="0.127" stop-color="#8aabff"/><stop offset="0.191" stop-color="#6590ff"/><stop offset="0.254" stop-color="#497cff"/><stop offset="0.382" stop-color="#1e5eff"/><stop offset="0.509" stop-color="#0049ff"/><stop offset="0.754" stop-color="#002fff"/><stop offset="1" stop-color="#001eff"/></linearGradient>
<linearGradient id="w76" gradientUnits="userSpaceOnUse" x1="1217.36" y1="181.96" x2="1123.62" y2="385.3"><stop offset="0" stop-color="#ffffff"/><stop offset="0.062" stop-color="#bcd0ff"/><stop offset="0.124" stop-color="#8caeff"/><stop offset="0.186" stop-color="#6795ff"/><stop offset="0.249" stop-color="#4a81ff"/><stop offset="0.373" stop-color="#1f63ff"/><stop offset="0.497" stop-color="#004eff"/><stop offset="0.749" stop-color="#0033ff"/><stop offset="1" stop-color="#0022ff"/></linearGradient>
<linearGradient id="w77" gradientUnits="userSpaceOnUse" x1="1217.36" y1="181.96" x2="1119.91" y2="379.58"><stop offset="0" stop-color="#ffffff"/><stop offset="0.061" stop-color="#bed2ff"/><stop offset="0.122" stop-color="#8eb2ff"/><stop offset="0.182" stop-color="#6999ff"/><stop offset="0.243" stop-color="#4c85ff"/><stop offset="0.365" stop-color="#2068ff"/><stop offset="0.486" stop-color="#0053ff"/><stop offset="0.743" stop-color="#0037ff"/><stop offset="1" stop-color="#0025ff"/></linearGradient>
<linearGradient id="w78" gradientUnits="userSpaceOnUse" x1="1217.36" y1="181.96" x2="1116.38" y2="373.89"><stop offset="0" stop-color="#ffffff"/><stop offset="0.06" stop-color="#bfd5ff"/><stop offset="0.119" stop-color="#90b5ff"/><stop offset="0.179" stop-color="#6b9dff"/><stop offset="0.238" stop-color="#4d89ff"/><stop offset="0.358" stop-color="#216dff"/><stop offset="0.477" stop-color="#0058ff"/><stop offset="0.738" stop-color="#003bff"/><stop offset="1" stop-color="#0029ff"/></linearGradient>
<linearGradient id="w79" gradientUnits="userSpaceOnUse" x1="1217.36" y1="181.96" x2="1112.97" y2="368.37"><stop offset="0" stop-color="#ffffff"/><stop offset="0.058" stop-color="#c0d6ff"/><stop offset="0.117" stop-color="#91b8ff"/><stop offset="0.175" stop-color="#6ca1ff"/><stop offset="0.234" stop-color="#4f8eff"/><stop offset="0.351" stop-color="#2271ff"/><stop offset="0.468" stop-color="#005dff"/><stop offset="0.734" stop-color="#003fff"/><stop offset="1" stop-color="#002cff"/></linearGradient>
<linearGradient id="w80" gradientUnits="userSpaceOnUse" x1="1217.36" y1="181.96" x2="1109.65" y2="363.01"><stop offset="0" stop-color="#ffffff"/><stop offset="0.057" stop-color="#c1d8ff"/><stop offset="0.115" stop-color="#93bbff"/><stop offset="0.23" stop-color="#5092ff"/><stop offset="0.345" stop-color="#2276ff"/><stop offset="0.46" stop-color="#0061ff"/><stop offset="0.73" stop-color="#0042ff"/><stop offset="1" stop-color="#0030ff"/></linearGradient>
<linearGradient id="w81" gradientUnits="userSpaceOnUse" x1="1217.36" y1="181.96" x2="1106.45" y2="357.75"><stop offset="0" stop-color="#ffffff"/><stop offset="0.056" stop-color="#c3daff"/><stop offset="0.113" stop-color="#94beff"/><stop offset="0.226" stop-color="#5196ff"/><stop offset="0.339" stop-color="#237aff"/><stop offset="0.452" stop-color="#0066ff"/><stop offset="0.726" stop-color="#0046ff"/><stop offset="1" stop-color="#0033ff"/></linearGradient>
<linearGradient id="w82" gradientUnits="userSpaceOnUse" x1="1217.36" y1="181.96" x2="1103.38" y2="352.56"><stop offset="0" stop-color="#ffffff"/><stop offset="0.056" stop-color="#c4dcff"/><stop offset="0.111" stop-color="#96c1ff"/><stop offset="0.222" stop-color="#5399ff"/><stop offset="0.333" stop-color="#247eff"/><stop offset="0.445" stop-color="#006aff"/><stop offset="0.722" stop-color="#004aff"/><stop offset="1" stop-color="#0037ff"/></linearGradient>
<linearGradient id="w83" gradientUnits="userSpaceOnUse" x1="1217.36" y1="181.96" x2="1100.38" y2="347.49"><stop offset="0" stop-color="#ffffff"/><stop offset="0.055" stop-color="#c5ddff"/><stop offset="0.109" stop-color="#97c3ff"/><stop offset="0.219" stop-color="#549dff"/><stop offset="0.328" stop-color="#2483ff"/><stop offset="0.438" stop-color="#006fff"/><stop offset="0.719" stop-color="#004eff"/><stop offset="1" stop-color="#003aff"/></linearGradient>
<linearGradient id="w84" gradientUnits="userSpaceOnUse" x1="1217.36" y1="181.96" x2="1097.46" y2="342.54"><stop offset="0" stop-color="#ffffff"/><stop offset="0.054" stop-color="#c6dfff"/><stop offset="0.108" stop-color="#98c6ff"/><stop offset="0.216" stop-color="#55a1ff"/><stop offset="0.324" stop-color="#2587ff"/><stop offset="0.432" stop-color="#0073ff"/><stop offset="0.716" stop-color="#0052ff"/><stop offset="1" stop-color="#003eff"/></linearGradient>
<linearGradient id="w85" gradientUnits="userSpaceOnUse" x1="1217.36" y1="181.96" x2="1094.6" y2="337.69"><stop offset="0" stop-color="#ffffff"/><stop offset="0.053" stop-color="#c7e1ff"/><stop offset="0.106" stop-color="#9ac8ff"/><stop offset="0.213" stop-color="#56a4ff"/><stop offset="0.319" stop-color="#268bff"/><stop offset="0.426" stop-color="#0078ff"/><stop offset="0.713" stop-color="#0056ff"/><stop offset="1" stop-color="#0042ff"/></linearGradient>
<linearGradient id="w86" gradientUnits="userSpaceOnUse" x1="1217.36" y1="181.96" x2="1091.85" y2="332.87"><stop offset="0" stop-color="#ffffff"/><stop offset="0.052" stop-color="#c8e2ff"/><stop offset="0.105" stop-color="#9bcbff"/><stop offset="0.21" stop-color="#57a8ff"/><stop offset="0.315" stop-color="#268fff"/><stop offset="0.42" stop-color="#007cff"/><stop offset="0.71" stop-color="#005aff"/><stop offset="1" stop-color="#0046ff"/></linearGradient>
<linearGradient id="w87" gradientUnits="userSpaceOnUse" x1="1217.36" y1="181.96" x2="1089.16" y2="328.15"><stop offset="0" stop-color="#ffffff"/><stop offset="0.052" stop-color="#c8e3ff"/><stop offset="0.104" stop-color="#9ccdff"/><stop offset="0.207" stop-color="#59abff"/><stop offset="0.311" stop-color="#2793ff"/><stop offset="0.415" stop-color="#0080ff"/><stop offset="0.707" stop-color="#005eff"/><stop offset="1" stop-color="#004aff"/></linearGradient>
<linearGradient id="w88" gradientUnits="userSpaceOnUse" x1="1217.36" y1="181.96" x2="1086.53" y2="323.5"><stop offset="0" stop-color="#ffffff"/><stop offset="0.051" stop-color="#c9e5ff"/><stop offset="0.102" stop-color="#9dcfff"/><stop offset="0.205" stop-color="#5aafff"/><stop offset="0.307" stop-color="#2897ff"/><stop offset="0.41" stop-color="#0085ff"/><stop offset="0.705" stop-color="#0062ff"/><stop offset="1" stop-color="#004eff"/></linearGradient>
<linearGradient id="w89" gradientUnits="userSpaceOnUse" x1="1217.36" y1="181.96" x2="1083.93" y2="318.93"><stop offset="0" stop-color="#ffffff"/><stop offset="0.051" stop-color="#cae6ff"/><stop offset="0.101" stop-color="#9ed2ff"/><stop offset="0.202" stop-color="#5bb2ff"/><stop offset="0.304" stop-color="#289bff"/><stop offset="0.405" stop-color="#0089ff"/><stop offset="0.702" stop-color="#0066ff"/><stop offset="1" stop-color="#0052ff"/></linearGradient>
<linearGradient id="w90" gradientUnits="userSpaceOnUse" x1="1217.36" y1="181.96" x2="1081.38" y2="314.43"><stop offset="0" stop-color="#ffffff"/><stop offset="0.05" stop-color="#cbe7ff"/><stop offset="0.1" stop-color="#a0d4ff"/><stop offset="0.2" stop-color="#5cb5ff"/><stop offset="0.3" stop-color="#299fff"/><stop offset="0.4" stop-color="#008dff"/><stop offset="0.7" stop-color="#006bff"/><stop offset="1" stop-color="#0056ff"/></linearGradient>
<linearGradient id="w91" gradientUnits="userSpaceOnUse" x1="1217.36" y1="181.96" x2="1078.95" y2="309.91"><stop offset="0" stop-color="#ffffff"/><stop offset="0.049" stop-color="#cce8ff"/><stop offset="0.099" stop-color="#a1d6ff"/><stop offset="0.198" stop-color="#5db8ff"/><stop offset="0.297" stop-color="#2aa2ff"/><stop offset="0.396" stop-color="#0091ff"/><stop offset="0.698" stop-color="#006fff"/><stop offset="1" stop-color="#005aff"/></linearGradient>
<linearGradient id="w92" gradientUnits="userSpaceOnUse" x1="1217.36" y1="181.96" x2="1076.56" y2="305.45"><stop offset="0" stop-color="#ffffff"/><stop offset="0.049" stop-color="#cceaff"/><stop offset="0.098" stop-color="#a2d8ff"/><stop offset="0.196" stop-color="#5ebcff"/><stop offset="0.294" stop-color="#2aa6ff"/><stop offset="0.392" stop-color="#0096ff"/><stop offset="0.696" stop-color="#0073ff"/><stop offset="1" stop-color="#005fff"/></linearGradient>
<linearGradient id="w93" gradientUnits="userSpaceOnUse" x1="1217.36" y1="181.96" x2="1074.19" y2="301.04"><stop offset="0" stop-color="#ffffff"/><stop offset="0.048" stop-color="#cdebff"/><stop offset="0.097" stop-color="#a3daff"/><stop offset="0.194" stop-color="#5fbfff"/><stop offset="0.291" stop-color="#2baaff"/><stop offset="0.388" stop-color="#009aff"/><stop offset="0.694" stop-color="#0078ff"/><stop offset="1" stop-color="#0063ff"/></linearGradient>
<linearGradient id="w94" gradientUnits="userSpaceOnUse" x1="1217.36" y1="181.96" x2="1071.86" y2="296.67"><stop offset="0" stop-color="#ffffff"/><stop offset="0.048" stop-color="#ceecff"/><stop offset="0.096" stop-color="#a4dcff"/><stop offset="0.192" stop-color="#60c2ff"/><stop offset="0.288" stop-color="#2baeff"/><stop offset="0.384" stop-color="#009eff"/><stop offset="0.692" stop-color="#007cff"/><stop offset="1" stop-color="#0068ff"/></linearGradient>
<linearGradient id="w95" gradientUnits="userSpaceOnUse" x1="1217.36" y1="181.96" x2="1069.54" y2="292.35"><stop offset="0" stop-color="#ffffff"/><stop offset="0.095" stop-color="#a5deff"/><stop offset="0.19" stop-color="#61c5ff"/><stop offset="0.285" stop-color="#2cb2ff"/><stop offset="0.38" stop-color="#00a3ff"/><stop offset="0.69" stop-color="#0081ff"/><stop offset="1" stop-color="#006dff"/></linearGradient>
<linearGradient id="w96" gradientUnits="userSpaceOnUse" x1="1217.36" y1="181.96" x2="1067.34" y2="287.99"><stop offset="0" stop-color="#ffffff"/><stop offset="0.094" stop-color="#a6e0ff"/><stop offset="0.188" stop-color="#62c8ff"/><stop offset="0.282" stop-color="#2db6ff"/><stop offset="0.377" stop-color="#00a7ff"/><stop offset="0.688" stop-color="#0086ff"/><stop offset="1" stop-color="#0072ff"/></linearGradient>
<linearGradient id="w97" gradientUnits="userSpaceOnUse" x1="1217.36" y1="181.96" x2="1065.2" y2="283.64"><stop offset="0" stop-color="#ffffff"/><stop offset="0.093" stop-color="#a7e2ff"/><stop offset="0.187" stop-color="#63cbff"/><stop offset="0.28" stop-color="#2dbaff"/><stop offset="0.373" stop-color="#00abff"/><stop offset="0.687" stop-color="#008bff"/><stop offset="1" stop-color="#0077ff"/></linearGradient>
<linearGradient id="w98" gradientUnits="userSpaceOnUse" x1="1217.36" y1="181.96" x2="1063.07" y2="279.31"><stop offset="0" stop-color="#ffffff"/><stop offset="0.093" stop-color="#a8e3ff"/><stop offset="0.185" stop-color="#64ceff"/><stop offset="0.278" stop-color="#2ebdff"/><stop offset="0.37" stop-color="#00b0ff"/><stop offset="0.685" stop-color="#0090ff"/><stop offset="1" stop-color="#007dff"/></linearGradient>
<linearGradient id="w99" gradientUnits="userSpaceOnUse" x1="1217.36" y1="181.96" x2="1060.95" y2="275.02"><stop offset="0" stop-color="#ffffff"/><stop offset="0.092" stop-color="#a9e5ff"/><stop offset="0.184" stop-color="#65d1ff"/><stop offset="0.275" stop-color="#2fc1ff"/><stop offset="0.367" stop-color="#00b4ff"/><stop offset="0.684" stop-color="#0095ff"/><stop offset="1" stop-color="#0082ff"/></linearGradient>
<linearGradient id="w100" gradientUnits="userSpaceOnUse" x1="1217.36" y1="181.96" x2="1058.85" y2="270.73"><stop offset="0" stop-color="#ffffff"/><stop offset="0.091" stop-color="#aae7ff"/><stop offset="0.182" stop-color="#66d4ff"/><stop offset="0.273" stop-color="#2fc5ff"/><stop offset="0.364" stop-color="#00b9ff"/><stop offset="0.682" stop-color="#009bff"/><stop offset="1" stop-color="#0088ff"/></linearGradient>
<linearGradient id="w101" gradientUnits="userSpaceOnUse" x1="1217.36" y1="181.96" x2="1056.8" y2="266.44"><stop offset="0" stop-color="#ffffff"/><stop offset="0.09" stop-color="#abe9ff"/><stop offset="0.181" stop-color="#67d7ff"/><stop offset="0.271" stop-color="#30c9ff"/><stop offset="0.361" stop-color="#00beff"/><stop offset="0.681" stop-color="#00a0ff"/><stop offset="1" stop-color="#008eff"/></linearGradient>
<linearGradient id="w102" gradientUnits="userSpaceOnUse" x1="1217.36" y1="181.96" x2="1054.86" y2="262.1"><stop offset="0" stop-color="#ffffff"/><stop offset="0.09" stop-color="#acebff"/><stop offset="0.179" stop-color="#68dbff"/><stop offset="0.269" stop-color="#31cdff"/><stop offset="0.359" stop-color="#00c2ff"/><stop offset="0.679" stop-color="#00a6ff"/><stop offset="1" stop-color="#0095ff"/></linearGradient>
<linearGradient id="w103" gradientUnits="userSpaceOnUse" x1="1217.36" y1="181.96" x2="1052.86" y2="257.8"><stop offset="0" stop-color="#ffffff"/><stop offset="0.089" stop-color="#adedff"/><stop offset="0.178" stop-color="#6adeff"/><stop offset="0.267" stop-color="#31d1ff"/><stop offset="0.356" stop-color="#00c7ff"/><stop offset="0.678" stop-color="#00acff"/><stop offset="1" stop-color="#009cff"/></linearGradient>
<linearGradient id="w104" gradientUnits="userSpaceOnUse" x1="1217.36" y1="181.96" x2="1050.74" y2="253.55"><stop offset="0" stop-color="#ffffff"/><stop offset="0.088" stop-color="#aeeeff"/><stop offset="0.177" stop-color="#6be1ff"/><stop offset="0.353" stop-color="#00ccff"/><stop offset="0.677" stop-color="#00b3ff"/><stop offset="1" stop-color="#00a3ff"/></linearGradient>
<linearGradient id="w105" gradientUnits="userSpaceOnUse" x1="1217.36" y1="181.96" x2="1048.72" y2="249.24"><stop offset="0" stop-color="#ffffff"/><stop offset="0.088" stop-color="#aff0ff"/><stop offset="0.175" stop-color="#6ce4ff"/><stop offset="0.351" stop-color="#00d1ff"/><stop offset="0.675" stop-color="#00b9ff"/><stop offset="1" stop-color="#00aaff"/></linearGradient>
<linearGradient id="w106" gradientUnits="userSpaceOnUse" x1="1217.36" y1="181.96" x2="1046.72" y2="244.92"><stop offset="0" stop-color="#ffffff"/><stop offset="0.087" stop-color="#b0f2ff"/><stop offset="0.174" stop-color="#6de7ff"/><stop offset="0.348" stop-color="#00d6ff"/><stop offset="0.674" stop-color="#00c0ff"/><stop offset="1" stop-color="#00b2ff"/></linearGradient>
<linearGradient id="w107" gradientUnits="userSpaceOnUse" x1="1217.36" y1="181.96" x2="1044.72" y2="240.57"><stop offset="0" stop-color="#ffffff"/><stop offset="0.086" stop-color="#b0f4ff"/><stop offset="0.173" stop-color="#6eeaff"/><stop offset="0.346" stop-color="#00dbff"/><stop offset="1" stop-color="#00bbff"/></linearGradient>
<linearGradient id="w108" gradientUnits="userSpaceOnUse" x1="1217.36" y1="181.96" x2="1042.7" y2="236.2"><stop offset="0" stop-color="#ffffff"/><stop offset="0.086" stop-color="#b1f5ff"/><stop offset="0.172" stop-color="#6fedff"/><stop offset="0.343" stop-color="#00e0ff"/><stop offset="1" stop-color="#00c4ff"/></linearGradient>
<linearGradient id="w109" gradientUnits="userSpaceOnUse" x1="1217.36" y1="181.96" x2="1040.67" y2="231.79"><stop offset="0" stop-color="#ffffff"/><stop offset="0.085" stop-color="#b2f7ff"/><stop offset="0.17" stop-color="#70f1ff"/><stop offset="0.341" stop-color="#00e6ff"/><stop offset="1" stop-color="#00cdff"/></linearGradient>
<linearGradient id="w110" gradientUnits="userSpaceOnUse" x1="1217.36" y1="181.96" x2="1038.79" y2="227.31"><stop offset="0" stop-color="#ffffff"/><stop offset="0.085" stop-color="#b3f9ff"/><stop offset="0.169" stop-color="#71f4ff"/><stop offset="0.339" stop-color="#00ecff"/><stop offset="1" stop-color="#00d8ff"/></linearGradient>
<linearGradient id="w111" gradientUnits="userSpaceOnUse" x1="1217.36" y1="181.96" x2="1036.9" y2="222.8"><stop offset="0" stop-color="#ffffff"/><stop offset="0.084" stop-color="#b4fbff"/><stop offset="0.168" stop-color="#72f7ff"/><stop offset="0.337" stop-color="#00f1ff"/><stop offset="1" stop-color="#00e3ff"/></linearGradient>
<linearGradient id="w112" gradientUnits="userSpaceOnUse" x1="1217.36" y1="181.96" x2="1034.99" y2="218.24"><stop offset="0" stop-color="#ffffff"/><stop offset="0.084" stop-color="#b5fdff"/><stop offset="0.167" stop-color="#73fbff"/><stop offset="0.335" stop-color="#00f7ff"/><stop offset="1" stop-color="#00efff"/></linearGradient>
<linearGradient id="w113" gradientUnits="userSpaceOnUse" x1="1217.36" y1="181.96" x2="1033.07" y2="213.63"><stop offset="0" stop-color="#ffffff"/><stop offset="0.083" stop-color="#b6ffff"/><stop offset="0.166" stop-color="#74feff"/><stop offset="0.332" stop-color="#00feff"/><stop offset="1" stop-color="#00fcff"/></linearGradient>
<linearGradient id="w114" gradientUnits="userSpaceOnUse" x1="1217.36" y1="181.96" x2="1031.22" y2="208.95"><stop offset="0" stop-color="#ffffff"/><stop offset="0.083" stop-color="#b6fffe"/><stop offset="0.165" stop-color="#74fffc"/><stop offset="0.331" stop-color="#00fffa"/><stop offset="1" stop-color="#00fff4"/></linearGradient>
<linearGradient id="w115" gradientUnits="userSpaceOnUse" x1="1217.36" y1="181.96" x2="1029.41" y2="204.21"><stop offset="0" stop-color="#ffffff"/><stop offset="0.082" stop-color="#b6fffc"/><stop offset="0.164" stop-color="#74fff9"/><stop offset="0.329" stop-color="#00fff4"/><stop offset="1" stop-color="#00ffe7"/></linearGradient>
<linearGradient id="w116" gradientUnits="userSpaceOnUse" x1="1217.36" y1="181.96" x2="1027.58" y2="199.4"><stop offset="0" stop-color="#ffffff"/><stop offset="0.082" stop-color="#b5fffa"/><stop offset="0.163" stop-color="#74fff5"/><stop offset="0.327" stop-color="#00ffee"/><stop offset="1" stop-color="#00ffda"/></linearGradient>
<linearGradient id="w117" gradientUnits="userSpaceOnUse" x1="1217.36" y1="181.96" x2="1025.72" y2="194.52"><stop offset="0" stop-color="#ffffff"/><stop offset="0.081" stop-color="#b5fff8"/><stop offset="0.163" stop-color="#73fff2"/><stop offset="0.325" stop-color="#00ffe7"/><stop offset="1" stop-color="#00ffcc"/></linearGradient>
<linearGradient id="w118" gradientUnits="userSpaceOnUse" x1="1217.36" y1="181.96" x2="1024.01" y2="189.56"><stop offset="0" stop-color="#ffffff"/><stop offset="0.081" stop-color="#b5fff6"/><stop offset="0.162" stop-color="#73ffee"/><stop offset="0.324" stop-color="#00ffe1"/><stop offset="1" stop-color="#00ffc0"/></linearGradient>
<linearGradient id="w119" gradientUnits="userSpaceOnUse" x1="1217.36" y1="181.96" x2="1022.3" y2="184.52"><stop offset="0" stop-color="#ffffff"/><stop offset="0.081" stop-color="#b4fff4"/><stop offset="0.161" stop-color="#72ffeb"/><stop offset="0.322" stop-color="#00ffdb"/><stop offset="0.661" stop-color="#00ffc3"/><stop offset="1" stop-color="#00ffb3"/></linearGradient>
<linearGradient id="w120" gradientUnits="userSpaceOnUse" x1="1217.36" y1="181.96" x2="1020.56" y2="179.39"><stop offset="0" stop-color="#ffffff"/><stop offset="0.08" stop-color="#b4fff2"/><stop offset="0.16" stop-color="#72ffe7"/><stop offset="0.321" stop-color="#00ffd5"/><stop offset="0.66" stop-color="#00ffb9"/><stop offset="1" stop-color="#00ffa7"/></linearGradient>
<linearGradient id="w121" gradientUnits="userSpaceOnUse" x1="1217.36" y1="181.96" x2="1018.95" y2="174.17"><stop offset="0" stop-color="#ffffff"/><stop offset="0.08" stop-color="#b4fff1"/><stop offset="0.16" stop-color="#71ffe4"/><stop offset="0.319" stop-color="#00ffcf"/><stop offset="0.66" stop-color="#00ffb0"/><stop offset="1" stop-color="#00ff9a"/></linearGradient>
<linearGradient id="w122" gradientUnits="userSpaceOnUse" x1="1217.36" y1="181.96" x2="1017.41" y2="168.86"><stop offset="0" stop-color="#ffffff"/><stop offset="0.08" stop-color="#b3ffef"/><stop offset="0.159" stop-color="#71ffe1"/><stop offset="0.318" stop-color="#00ffc9"/><stop offset="0.659" stop-color="#00ffa6"/><stop offset="1" stop-color="#00ff8e"/></linearGradient>
<linearGradient id="w123" gradientUnits="userSpaceOnUse" x1="1217.36" y1="181.96" x2="1015.83" y2="163.44"><stop offset="0" stop-color="#ffffff"/><stop offset="0.079" stop-color="#b3ffed"/><stop offset="0.159" stop-color="#71ffdd"/><stop offset="0.317" stop-color="#00ffc3"/><stop offset="0.659" stop-color="#00ff9c"/><stop offset="1" stop-color="#00ff82"/></linearGradient>
<linearGradient id="w124" gradientUnits="userSpaceOnUse" x1="1217.36" y1="181.96" x2="1014.54" y2="157.96"><stop offset="0" stop-color="#ffffff"/><stop offset="0.079" stop-color="#b3ffeb"/><stop offset="0.158" stop-color="#70ffda"/><stop offset="0.317" stop-color="#00ffbd"/><stop offset="0.658" stop-color="#00ff93"/><stop offset="1" stop-color="#00ff77"/></linearGradient>
<linearGradient id="w125" gradientUnits="userSpaceOnUse" x1="1217.36" y1="181.96" x2="1013.21" y2="152.36"><stop offset="0" stop-color="#ffffff"/><stop offset="0.079" stop-color="#b2ffe9"/><stop offset="0.158" stop-color="#70ffd6"/><stop offset="0.316" stop-color="#00ffb7"/><stop offset="0.658" stop-color="#00ff89"/><stop offset="1" stop-color="#00ff6b"/></linearGradient>
<linearGradient id="w126" gradientUnits="userSpaceOnUse" x1="1217.36" y1="181.96" x2="1012.17" y2="146.7"><stop offset="0" stop-color="#ffffff"/><stop offset="0.079" stop-color="#b2ffe7"/><stop offset="0.158" stop-color="#6fffd2"/><stop offset="0.316" stop-color="#00ffb1"/><stop offset="0.658" stop-color="#00ff80"/><stop offset="1" stop-color="#00ff5f"/></linearGradient>
<linearGradient id="w127" gradientUnits="userSpaceOnUse" x1="1217.36" y1="181.96" x2="1011.22" y2="140.96"><stop offset="0" stop-color="#ffffff"/><stop offset="0.079" stop-color="#b1ffe5"/><stop offset="0.158" stop-color="#6fffcf"/><stop offset="0.316" stop-color="#00ffab"/><stop offset="0.658" stop-color="#00ff76"/><stop offset="1" stop-color="#00ff54"/></linearGradient>
<linearGradient id="w128" gradientUnits="userSpaceOnUse" x1="1217.36" y1="181.96" x2="1010.66" y2="135.19"><stop offset="0" stop-color="#ffffff"/><stop offset="0.079" stop-color="#b1ffe3"/><stop offset="0.158" stop-color="#6effcb"/><stop offset="0.316" stop-color="#00ffa5"/><stop offset="0.658" stop-color="#00ff6d"/><stop offset="1" stop-color="#00ff49"/></linearGradient>
<linearGradient id="w129" gradientUnits="userSpaceOnUse" x1="1217.36" y1="181.96" x2="1010.32" y2="129.38"><stop offset="0" stop-color="#ffffff"/><stop offset="0.079" stop-color="#b1ffe1"/><stop offset="0.159" stop-color="#6effc7"/><stop offset="0.317" stop-color="#00ff9f"/><stop offset="0.488" stop-color="#00ff7e"/><stop offset="0.659" stop-color="#00ff64"/><stop offset="1" stop-color="#00ff3e"/></linearGradient>
<linearGradient id="w130" gradientUnits="userSpaceOnUse" x1="1217.36" y1="181.96" x2="1010.43" y2="123.6"><stop offset="0" stop-color="#ffffff"/><stop offset="0.08" stop-color="#b0ffdf"/><stop offset="0.159" stop-color="#6effc4"/><stop offset="0.319" stop-color="#00ff99"/><stop offset="0.489" stop-color="#00ff76"/><stop offset="0.659" stop-color="#00ff5b"/><stop offset="1" stop-color="#00ff33"/></linearGradient>
<linearGradient id="w131" gradientUnits="userSpaceOnUse" x1="1217.36" y1="181.96" x2="1011.14" y2="117.93"><stop offset="0" stop-color="#ffffff"/><stop offset="0.08" stop-color="#b0ffdd"/><stop offset="0.161" stop-color="#6dffc0"/><stop offset="0.322" stop-color="#00ff92"/><stop offset="0.491" stop-color="#00ff6e"/><stop offset="0.661" stop-color="#00ff52"/><stop offset="1" stop-color="#00ff29"/></linearGradient>
<linearGradient id="w132" gradientUnits="userSpaceOnUse" x1="1217.36" y1="181.96" x2="1012.46" y2="112.41"><stop offset="0" stop-color="#ffffff"/><stop offset="0.081" stop-color="#b0ffda"/><stop offset="0.163" stop-color="#6dffbc"/><stop offset="0.325" stop-color="#00ff8c"/><stop offset="0.494" stop-color="#00ff66"/><stop offset="0.663" stop-color="#00ff49"/><stop offset="1" stop-color="#00ff1f"/></linearGradient>
<linearGradient id="w133" gradientUnits="userSpaceOnUse" x1="1217.36" y1="181.96" x2="1014.33" y2="107.06"><stop offset="0" stop-color="#ffffff"/><stop offset="0.082" stop-color="#afffd8"/><stop offset="0.165" stop-color="#6cffb8"/><stop offset="0.33" stop-color="#00ff85"/><stop offset="0.497" stop-color="#00ff5f"/><stop offset="0.665" stop-color="#00ff41"/><stop offset="1" stop-color="#00ff15"/></linearGradient>
<linearGradient id="w134" gradientUnits="userSpaceOnUse" x1="1217.36" y1="181.96" x2="1016.33" y2="101.76"><stop offset="0" stop-color="#ffffff"/><stop offset="0.084" stop-color="#afffd6"/><stop offset="0.167" stop-color="#6cffb4"/><stop offset="0.335" stop-color="#00ff7f"/><stop offset="0.501" stop-color="#00ff57"/><stop offset="0.667" stop-color="#00ff39"/><stop offset="1" stop-color="#00ff0b"/></linearGradient>
<linearGradient id="w135" gradientUnits="userSpaceOnUse" x1="1217.36" y1="181.96" x2="1018.97" y2="96.73"><stop offset="0" stop-color="#ffffff"/><stop offset="0.085" stop-color="#aeffd4"/><stop offset="0.171" stop-color="#6bffb0"/><stop offset="0.341" stop-color="#00ff78"/><stop offset="0.506" stop-color="#00ff50"/><stop offset="0.671" stop-color="#00ff31"/><stop offset="1" stop-color="#00ff02"/></linearGradient>
<linearGradient id="w136" gradientUnits="userSpaceOnUse" x1="1217.36" y1="181.96" x2="1022.58" y2="92.17"><stop offset="0" stop-color="#ffffff"/><stop offset="0.087" stop-color="#aeffd1"/><stop offset="0.175" stop-color="#6bffac"/><stop offset="0.349" stop-color="#00ff71"/><stop offset="0.512" stop-color="#00ff49"/><stop offset="0.675" stop-color="#00ff29"/><stop offset="0.837" stop-color="#00ff0f"/><stop offset="0.919" stop-color="#00ff04"/><stop offset="1" stop-color="#00ff00"/></linearGradient>
<linearGradient id="w137" gradientUnits="userSpaceOnUse" x1="1217.36" y1="181.96" x2="1027.38" y2="88.27"><stop offset="0" stop-color="#ffffff"/><stop offset="0.09" stop-color="#adffcf"/><stop offset="0.18" stop-color="#6affa7"/><stop offset="0.36" stop-color="#00ff6a"/><stop offset="0.52" stop-color="#00ff42"/><stop offset="0.68" stop-color="#00ff22"/><stop offset="0.84" stop-color="#00ff08"/><stop offset="0.92" stop-color="#00ff00"/><stop offset="1" stop-color="#00ff00"/></linearGradient>
<linearGradient id="w138" gradientUnits="userSpaceOnUse" x1="1217.36" y1="181.96" x2="1033.73" y2="85.35"><stop offset="0" stop-color="#ffffff"/><stop offset="0.094" stop-color="#adffcc"/><stop offset="0.187" stop-color="#6affa3"/><stop offset="0.281" stop-color="#31ff80"/><stop offset="0.375" stop-color="#00ff63"/><stop offset="0.531" stop-color="#00ff3c"/><stop offset="0.687" stop-color="#00ff1c"/><stop offset="0.844" stop-color="#00ff01"/><stop offset="1" stop-color="#00ff00"/></linearGradient>
<linearGradient id="w139" gradientUnits="userSpaceOnUse" x1="1217.36" y1="181.96" x2="1041.41" y2="83.43"><stop offset="0" stop-color="#ffffff"/><stop offset="0.098" stop-color="#acffc9"/><stop offset="0.197" stop-color="#69ff9e"/><stop offset="0.295" stop-color="#31ff7a"/><stop offset="0.394" stop-color="#00ff5c"/><stop offset="0.545" stop-color="#00ff36"/><stop offset="0.697" stop-color="#00ff17"/><stop offset="0.848" stop-color="#00ff00"/><stop offset="1" stop-color="#00ff00"/></linearGradient>
<linearGradient id="w140" gradientUnits="userSpaceOnUse" x1="1217.36" y1="181.96" x2="1050.21" y2="82.52"><stop offset="0" stop-color="#ffffff"/><stop offset="0.104" stop-color="#acffc7"/><stop offset="0.209" stop-color="#69ff99"/><stop offset="0.313" stop-color="#31ff74"/><stop offset="0.417" stop-color="#00ff55"/><stop offset="0.709" stop-color="#00ff12"/><stop offset="0.781" stop-color="#00ff05"/><stop offset="0.854" stop-color="#00ff00"/><stop offset="1" stop-color="#00ff00"/></linearGradient>
<linearGradient id="w141" gradientUnits="userSpaceOnUse" x1="1217.36" y1="181.96" x2="1059.26" y2="82.21"><stop offset="0" stop-color="#ffffff"/><stop offset="0.111" stop-color="#abffc4"/><stop offset="0.222" stop-color="#68ff94"/><stop offset="0.333" stop-color="#30ff6d"/><stop offset="0.444" stop-color="#00ff4d"/><stop offset="0.722" stop-color="#00ff0e"/><stop offset="0.791" stop-color="#00ff01"/><stop offset="0.861" stop-color="#00ff00"/><stop offset="1" stop-color="#00ff00"/></linearGradient>
<linearGradient id="w142" gradientUnits="userSpaceOnUse" x1="1217.36" y1="181.96" x2="1068.16" y2="82.27"><stop offset="0" stop-color="#ffffff"/><stop offset="0.118" stop-color="#abffc1"/><stop offset="0.237" stop-color="#67ff8f"/><stop offset="0.355" stop-color="#30ff67"/><stop offset="0.473" stop-color="#00ff45"/><stop offset="0.737" stop-color="#00ff0a"/><stop offset="0.803" stop-color="#00ff00"/><stop offset="0.868" stop-color="#00ff00"/><stop offset="1" stop-color="#00ff00"/></linearGradient>
<linearGradient id="w143" gradientUnits="userSpaceOnUse" x1="1217.36" y1="181.96" x2="1076.62" y2="82.5"><stop offset="0" stop-color="#ffffff"/><stop offset="0.126" stop-color="#aaffbe"/><stop offset="0.253" stop-color="#67ff8a"/><stop offset="0.379" stop-color="#2fff60"/><stop offset="0.505" stop-color="#00ff3d"/><stop offset="0.753" stop-color="#00ff06"/><stop offset="0.815" stop-color="#00ff00"/><stop offset="0.876" stop-color="#00ff00"/><stop offset="1" stop-color="#00ff00"/></linearGradient>
<linearGradient id="w144" gradientUnits="userSpaceOnUse" x1="1217.36" y1="181.96" x2="1084.68" y2="82.89"><stop offset="0" stop-color="#ffffff"/><stop offset="0.135" stop-color="#a9ffba"/><stop offset="0.27" stop-color="#66ff84"/><stop offset="0.405" stop-color="#2fff59"/><stop offset="0.54" stop-color="#00ff34"/><stop offset="0.77" stop-color="#00ff02"/><stop offset="1" stop-color="#00ff00"/></linearGradient>
<linearGradient id="w145" gradientUnits="userSpaceOnUse" x1="1217.36" y1="181.96" x2="1092.31" y2="83.38"><stop offset="0" stop-color="#ffffff"/><stop offset="0.144" stop-color="#a9ffb7"/><stop offset="0.289" stop-color="#65ff7f"/><stop offset="0.433" stop-color="#2fff51"/><stop offset="0.577" stop-color="#00ff2c"/><stop offset="0.789" stop-color="#00ff00"/><stop offset="1" stop-color="#00ff00"/></linearGradient>
<linearGradient id="w146" gradientUnits="userSpaceOnUse" x1="1217.36" y1="181.96" x2="1099.5" y2="83.93"><stop offset="0" stop-color="#ffffff"/><stop offset="0.154" stop-color="#a8ffb3"/><stop offset="0.309" stop-color="#65ff79"/><stop offset="0.463" stop-color="#2eff4a"/><stop offset="0.618" stop-color="#00ff23"/><stop offset="0.713" stop-color="#00ff0e"/><stop offset="0.809" stop-color="#00ff00"/><stop offset="1" stop-color="#00ff00"/></linearGradient>
<linearGradient id="w147" gradientUnits="userSpaceOnUse" x1="1217.36" y1="181.96" x2="1106.25" y2="84.52"><stop offset="0" stop-color="#ffffff"/><stop offset="0.165" stop-color="#a7ffb0"/><stop offset="0.33" stop-color="#64ff72"/><stop offset="0.496" stop-color="#2eff41"/><stop offset="0.661" stop-color="#00ff19"/><stop offset="0.746" stop-color="#00ff07"/><stop offset="0.83" stop-color="#00ff00"/><stop offset="1" stop-color="#00ff00"/></linearGradient>
<linearGradient id="w148" gradientUnits="userSpaceOnUse" x1="1217.36" y1="181.96" x2="1112.6" y2="85.12"><stop offset="0" stop-color="#ffffff"/><stop offset="0.177" stop-color="#a7ffac"/><stop offset="0.354" stop-color="#63ff6c"/><stop offset="0.53" stop-color="#2dff39"/><stop offset="0.707" stop-color="#00ff0f"/><stop offset="0.78" stop-color="#00ff00"/><stop offset="0.854" stop-color="#00ff00"/><stop offset="1" stop-color="#00ff00"/></linearGradient>
<linearGradient id="w149" gradientUnits="userSpaceOnUse" x1="1217.36" y1="181.96" x2="1118.57" y2="85.73"><stop offset="0" stop-color="#ffffff"/><stop offset="0.189" stop-color="#a6ffa7"/><stop offset="0.379" stop-color="#62ff65"/><stop offset="0.568" stop-color="#2dff30"/><stop offset="0.757" stop-color="#00ff04"/><stop offset="1" stop-color="#00ff00"/></linearGradient>
<linearGradient id="w150" gradientUnits="userSpaceOnUse" x1="1217.36" y1="181.96" x2="1124.19" y2="86.32"><stop offset="0" stop-color="#ffffff"/><stop offset="0.194" stop-color="#a8ffa6"/><stop offset="0.389" stop-color="#66ff62"/><stop offset="0.583" stop-color="#32ff2d"/><stop offset="0.778" stop-color="#07ff00"/><stop offset="0.833" stop-color="#00ff00"/><stop offset="0.889" stop-color="#00ff00"/><stop offset="1" stop-color="#00ff00"/></linearGradient>
<linearGradient id="w151" gradientUnits="userSpaceOnUse" x1="1217.36" y1="181.96" x2="1129.48" y2="86.89"><stop offset="0" stop-color="#ffffff"/><stop offset="0.195" stop-color="#acffa7"/><stop offset="0.389" stop-color="#6dff63"/><stop offset="0.584" stop-color="#3bff2d"/><stop offset="0.779" stop-color="#11ff00"/><stop offset="0.889" stop-color="#00ff00"/><stop offset="1" stop-color="#00ff00"/></linearGradient>
<linearGradient id="w152" gradientUnits="userSpaceOnUse" x1="1217.36" y1="181.96" x2="1134.48" y2="87.45"><stop offset="0" stop-color="#ffffff"/><stop offset="0.195" stop-color="#b0ffa7"/><stop offset="0.39" stop-color="#74ff64"/><stop offset="0.585" stop-color="#43ff2e"/><stop offset="0.78" stop-color="#1bff00"/><stop offset="0.89" stop-color="#08ff00"/><stop offset="0.945" stop-color="#00ff00"/><stop offset="1" stop-color="#00ff00"/></linearGradient>
<linearGradient id="w153" gradientUnits="userSpaceOnUse" x1="1217.36" y1="181.96" x2="1139.21" y2="87.99"><stop offset="0" stop-color="#ffffff"/><stop offset="0.195" stop-color="#b4ffa8"/><stop offset="0.39" stop-color="#7aff65"/><stop offset="0.585" stop-color="#4bff2e"/><stop offset="0.78" stop-color="#25ff00"/><stop offset="1" stop-color="#00ff00"/></linearGradient>
<linearGradient id="w154" gradientUnits="userSpaceOnUse" x1="1217.36" y1="181.96" x2="1143.69" y2="88.51"><stop offset="0" stop-color="#ffffff"/><stop offset="0.195" stop-color="#b8ffa9"/><stop offset="0.391" stop-color="#80ff65"/><stop offset="0.586" stop-color="#53ff2e"/><stop offset="0.781" stop-color="#2eff00"/><stop offset="1" stop-color="#0bff00"/></linearGradient>
<linearGradient id="w155" gradientUnits="userSpaceOnUse" x1="1217.36" y1="181.96" x2="1147.95" y2="89.01"><stop offset="0" stop-color="#ffffff"/><stop offset="0.196" stop-color="#bbffa9"/><stop offset="0.391" stop-color="#86ff66"/><stop offset="0.587" stop-color="#5bff2f"/><stop offset="0.782" stop-color="#37ff00"/><stop offset="1" stop-color="#16ff00"/></linearGradient>
<linearGradient id="w156" gradientUnits="userSpaceOnUse" x1="1217.36" y1="181.96" x2="1152.01" y2="89.49"><stop offset="0" stop-color="#ffffff"/><stop offset="0.196" stop-color="#beffaa"/><stop offset="0.392" stop-color="#8bff66"/><stop offset="0.587" stop-color="#62ff2f"/><stop offset="0.783" stop-color="#40ff00"/><stop offset="1" stop-color="#20ff00"/></linearGradient>
<linearGradient id="w157" gradientUnits="userSpaceOnUse" x1="1217.36" y1="181.96" x2="1155.88" y2="89.95"><stop offset="0" stop-color="#ffffff"/><stop offset="0.196" stop-color="#c1ffaa"/><stop offset="0.392" stop-color="#91ff67"/><stop offset="0.588" stop-color="#69ff30"/><stop offset="0.784" stop-color="#48ff00"/><stop offset="1" stop-color="#29ff00"/></linearGradient>
<linearGradient id="w158" gradientUnits="userSpaceOnUse" x1="1217.36" y1="181.96" x2="1159.59" y2="90.4"><stop offset="0" stop-color="#ffffff"/><stop offset="0.196" stop-color="#c5ffab"/><stop offset="0.392" stop-color="#96ff68"/><stop offset="0.589" stop-color="#70ff30"/><stop offset="0.785" stop-color="#50ff00"/><stop offset="1" stop-color="#33ff00"/></linearGradient>
<linearGradient id="w159" gradientUnits="userSpaceOnUse" x1="1217.36" y1="181.96" x2="1163.14" y2="90.82"><stop offset="0" stop-color="#ffffff"/><stop offset="0.196" stop-color="#c7ffab"/><stop offset="0.393" stop-color="#9bff68"/><stop offset="0.589" stop-color="#77ff30"/><stop offset="0.786" stop-color="#58ff00"/><stop offset="1" stop-color="#3cff00"/></linearGradient>
<linearGradient id="w160" gradientUnits="userSpaceOnUse" x1="1217.36" y1="181.96" x2="1166.56" y2="91.24"><stop offset="0" stop-color="#ffffff"/><stop offset="0.197" stop-color="#caffac"/><stop offset="0.393" stop-color="#a0ff69"/><stop offset="0.59" stop-color="#7dff31"/><stop offset="0.787" stop-color="#60ff00"/><stop offset="1" stop-color="#45ff00"/></linearGradient>
<linearGradient id="w161" gradientUnits="userSpaceOnUse" x1="1217.36" y1="181.96" x2="1169.84" y2="91.64"><stop offset="0" stop-color="#ffffff"/><stop offset="0.197" stop-color="#cdffac"/><stop offset="0.394" stop-color="#a5ff69"/><stop offset="0.591" stop-color="#83ff31"/><stop offset="0.788" stop-color="#67ff00"/><stop offset="1" stop-color="#4eff00"/></linearGradient>
<linearGradient id="w162" gradientUnits="userSpaceOnUse" x1="1217.36" y1="181.96" x2="1173.01" y2="92.03"><stop offset="0" stop-color="#ffffff"/><stop offset="0.197" stop-color="#d0ffad"/><stop offset="0.394" stop-color="#a9ff6a"/><stop offset="0.591" stop-color="#8aff31"/><stop offset="0.788" stop-color="#6fff00"/><stop offset="1" stop-color="#56ff00"/></linearGradient>
<linearGradient id="w163" gradientUnits="userSpaceOnUse" x1="1217.36" y1="181.96" x2="1176.08" y2="92.41"><stop offset="0" stop-color="#ffffff"/><stop offset="0.197" stop-color="#d2ffad"/><stop offset="0.395" stop-color="#aeff6a"/><stop offset="0.789" stop-color="#76ff00"/><stop offset="1" stop-color="#5fff00"/></linearGradient>
<linearGradient id="w164" gradientUnits="userSpaceOnUse" x1="1217.36" y1="181.96" x2="1179.04" y2="92.77"><stop offset="0" stop-color="#ffffff"/><stop offset="0.198" stop-color="#d5ffae"/><stop offset="0.395" stop-color="#b2ff6b"/><stop offset="0.79" stop-color="#7dff00"/><stop offset="1" stop-color="#67ff00"/></linearGradient>
<linearGradient id="w165" gradientUnits="userSpaceOnUse" x1="1217.36" y1="181.96" x2="1181.92" y2="93.13"><stop offset="0" stop-color="#ffffff"/><stop offset="0.198" stop-color="#d7ffae"/><stop offset="0.395" stop-color="#b7ff6b"/><stop offset="0.791" stop-color="#84ff00"/><stop offset="1" stop-color="#6fff00"/></linearGradient>
<linearGradient id="w166" gradientUnits="userSpaceOnUse" x1="1217.36" y1="181.96" x2="1184.72" y2="93.48"><stop offset="0" stop-color="#ffffff"/><stop offset="0.198" stop-color="#daffaf"/><stop offset="0.396" stop-color="#bbff6c"/><stop offset="0.792" stop-color="#8bff00"/><stop offset="1" stop-color="#78ff00"/></linearGradient>
<linearGradient id="w167" gradientUnits="userSpaceOnUse" x1="1217.36" y1="181.96" x2="1187.44" y2="93.82"><stop offset="0" stop-color="#ffffff"/><stop offset="0.198" stop-color="#dcffaf"/><stop offset="0.396" stop-color="#bfff6c"/><stop offset="0.792" stop-color="#92ff00"/><stop offset="1" stop-color="#80ff00"/></linearGradient>
<linearGradient id="w168" gradientUnits="userSpaceOnUse" x1="1217.36" y1="181.96" x2="1190.1" y2="94.15"><stop offset="0" stop-color="#ffffff"/><stop offset="0.198" stop-color="#dfffaf"/><stop offset="0.397" stop-color="#c4ff6c"/><stop offset="0.793" stop-color="#99ff00"/><stop offset="1" stop-color="#88ff00"/></linearGradient>
<linearGradient id="w169" gradientUnits="userSpaceOnUse" x1="1217.36" y1="181.96" x2="1192.69" y2="94.48"><stop offset="0" stop-color="#ffffff"/><stop offset="0.199" stop-color="#e1ffb0"/><stop offset="0.397" stop-color="#c8ff6d"/><stop offset="0.794" stop-color="#a0ff00"/><stop offset="1" stop-color="#90ff00"/></linearGradient>
<linearGradient id="w170" gradientUnits="userSpaceOnUse" x1="1217.36" y1="181.96" x2="1195.23" y2="94.8"><stop offset="0" stop-color="#ffffff"/><stop offset="0.199" stop-color="#e3ffb0"/><stop offset="0.397" stop-color="#ccff6d"/><stop offset="0.795" stop-color="#a7ff00"/><stop offset="1" stop-color="#97ff00"/></linearGradient>
<linearGradient id="w171" gradientUnits="userSpaceOnUse" x1="1217.36" y1="181.96" x2="1197.71" y2="95.12"><stop offset="0" stop-color="#ffffff"/><stop offset="0.199" stop-color="#e5ffb1"/><stop offset="0.398" stop-color="#d0ff6e"/><stop offset="0.796" stop-color="#adff00"/><stop offset="1" stop-color="#9fff00"/></linearGradient>
<linearGradient id="w172" gradientUnits="userSpaceOnUse" x1="1217.36" y1="181.96" x2="1200.15" y2="95.43"><stop offset="0" stop-color="#ffffff"/><stop offset="0.199" stop-color="#e8ffb1"/><stop offset="0.398" stop-color="#d4ff6e"/><stop offset="0.796" stop-color="#b4ff00"/><stop offset="1" stop-color="#a7ff00"/></linearGradient>
<linearGradient id="w173" gradientUnits="userSpaceOnUse" x1="1217.36" y1="181.96" x2="1202.55" y2="95.73"><stop offset="0" stop-color="#ffffff"/><stop offset="0.199" stop-color="#eaffb1"/><stop offset="0.399" stop-color="#d8ff6f"/><stop offset="0.797" stop-color="#bbff00"/><stop offset="1" stop-color="#afff00"/></linearGradient>
<linearGradient id="w174" gradientUnits="userSpaceOnUse" x1="1217.36" y1="181.96" x2="1204.9" y2="96.04"><stop offset="0" stop-color="#ffffff"/><stop offset="0.199" stop-color="#ecffb2"/><stop offset="0.399" stop-color="#dcff6f"/><stop offset="0.798" stop-color="#c1ff00"/><stop offset="1" stop-color="#b7ff00"/></linearGradient>
<linearGradient id="w175" gradientUnits="userSpaceOnUse" x1="1217.36" y1="181.96" x2="1207.23" y2="96.34"><stop offset="0" stop-color="#ffffff"/><stop offset="0.2" stop-color="#eeffb2"/><stop offset="0.399" stop-color="#e0ff70"/><stop offset="0.799" stop-color="#c8ff00"/><stop offset="1" stop-color="#beff00"/></linearGradient>
<linearGradient id="w176" gradientUnits="userSpaceOnUse" x1="1217.36" y1="181.96" x2="1209.52" y2="96.64"><stop offset="0" stop-color="#ffffff"/><stop offset="0.2" stop-color="#f0ffb2"/><stop offset="0.4" stop-color="#e3ff70"/><stop offset="0.8" stop-color="#cfff00"/><stop offset="1" stop-color="#c6ff00"/></linearGradient>
<linearGradient id="w177" gradientUnits="userSpaceOnUse" x1="1217.36" y1="181.96" x2="1211.79" y2="96.94"><stop offset="0" stop-color="#ffffff"/><stop offset="0.2" stop-color="#f2ffb3"/><stop offset="0.4" stop-color="#e7ff70"/><stop offset="0.8" stop-color="#d5ff00"/><stop offset="1" stop-color="#ceff00"/></linearGradient>
<linearGradient id="w178" gradientUnits="userSpaceOnUse" x1="1217.36" y1="181.96" x2="1214.03" y2="97.23"><stop offset="0" stop-color="#ffffff"/><stop offset="0.2" stop-color="#f4ffb3"/><stop offset="0.401" stop-color="#ebff71"/><stop offset="0.801" stop-color="#dcff00"/><stop offset="1" stop-color="#d6ff00"/></linearGradient>
<linearGradient id="w179" gradientUnits="userSpaceOnUse" x1="1217.36" y1="181.96" x2="1216.26" y2="97.53"><stop offset="0" stop-color="#ffffff"/><stop offset="0.2" stop-color="#f6ffb3"/><stop offset="0.401" stop-color="#efff71"/><stop offset="0.802" stop-color="#e3ff00"/><stop offset="1" stop-color="#deff00"/></linearGradient>
<linearGradient id="w180" gradientUnits="userSpaceOnUse" x1="1217.36" y1="181.96" x2="1218.46" y2="97.82"><stop offset="0" stop-color="#ffffff"/><stop offset="0.201" stop-color="#f9ffb4"/><stop offset="0.401" stop-color="#f3ff72"/><stop offset="0.803" stop-color="#eaff00"/><stop offset="1" stop-color="#e6ff00"/></linearGradient>
<linearGradient id="w181" gradientUnits="userSpaceOnUse" x1="1217.36" y1="181.96" x2="1220.66" y2="98.11"><stop offset="0" stop-color="#ffffff"/><stop offset="0.201" stop-color="#fbffb4"/><stop offset="0.402" stop-color="#f7ff72"/><stop offset="0.804" stop-color="#f1ff00"/><stop offset="1" stop-color="#eeff00"/></linearGradient>
<linearGradient id="w182" gradientUnits="userSpaceOnUse" x1="1217.36" y1="181.96" x2="1222.84" y2="98.41"><stop offset="0" stop-color="#ffffff"/><stop offset="0.201" stop-color="#fdffb5"/><stop offset="0.402" stop-color="#fbff72"/><stop offset="0.805" stop-color="#f7ff00"/><stop offset="1" stop-color="#f6ff00"/></linearGradient>
<linearGradient id="w183" gradientUnits="userSpaceOnUse" x1="1217.36" y1="181.96" x2="1225.01" y2="98.7"><stop offset="0" stop-color="#ffffff"/><stop offset="0.201" stop-color="#ffffb5"/><stop offset="0.403" stop-color="#ffff73"/><stop offset="0.805" stop-color="#feff00"/><stop offset="1" stop-color="#feff00"/></linearGradient>
<linearGradient id="w184" gradientUnits="userSpaceOnUse" x1="1217.36" y1="181.96" x2="1227.18" y2="98.98"><stop offset="0" stop-color="#ffffff"/><stop offset="0.202" stop-color="#fffdb4"/><stop offset="0.403" stop-color="#fffb72"/><stop offset="0.806" stop-color="#fff900"/><stop offset="1" stop-color="#fff800"/></linearGradient>
<linearGradient id="w185" gradientUnits="userSpaceOnUse" x1="1217.36" y1="181.96" x2="1229.37" y2="99.18"><stop offset="0" stop-color="#ffffff"/><stop offset="0.202" stop-color="#fffbb3"/><stop offset="0.403" stop-color="#fff870"/><stop offset="0.806" stop-color="#fff200"/><stop offset="1" stop-color="#fff000"/></linearGradient>
<linearGradient id="w186" gradientUnits="userSpaceOnUse" x1="1217.36" y1="181.96" x2="1231.55" y2="99.39"><stop offset="0" stop-color="#ffffff"/><stop offset="0.202" stop-color="#fff9b2"/><stop offset="0.403" stop-color="#fff46f"/><stop offset="0.806" stop-color="#ffec00"/><stop offset="1" stop-color="#ffe800"/></linearGradient>
<linearGradient id="w187" gradientUnits="userSpaceOnUse" x1="1217.36" y1="181.96" x2="1233.75" y2="99.59"><stop offset="0" stop-color="#ffffff"/><stop offset="0.202" stop-color="#fff7b1"/><stop offset="0.403" stop-color="#fff06e"/><stop offset="0.806" stop-color="#ffe500"/><stop offset="1" stop-color="#ffe100"/></linearGradient>
<linearGradient id="w188" gradientUnits="userSpaceOnUse" x1="1217.36" y1="181.96" x2="1235.95" y2="99.8"><stop offset="0" stop-color="#ffffff"/><stop offset="0.202" stop-color="#fff5b0"/><stop offset="0.403" stop-color="#ffed6d"/><stop offset="0.806" stop-color="#ffdf00"/><stop offset="1" stop-color="#ffda00"/></linearGradient>
<linearGradient id="w189" gradientUnits="userSpaceOnUse" x1="1217.36" y1="181.96" x2="1238.17" y2="100.01"><stop offset="0" stop-color="#ffffff"/><stop offset="0.202" stop-color="#fff3ae"/><stop offset="0.403" stop-color="#ffe96b"/><stop offset="0.806" stop-color="#ffda00"/><stop offset="1" stop-color="#ffd400"/></linearGradient>
<linearGradient id="w190" gradientUnits="userSpaceOnUse" x1="1217.36" y1="181.96" x2="1240.41" y2="100.23"><stop offset="0" stop-color="#ffffff"/><stop offset="0.202" stop-color="#fff1ad"/><stop offset="0.403" stop-color="#ffe66a"/><stop offset="0.806" stop-color="#ffd400"/><stop offset="1" stop-color="#ffcd00"/></linearGradient>
<linearGradient id="w191" gradientUnits="userSpaceOnUse" x1="1217.36" y1="181.96" x2="1242.67" y2="100.45"><stop offset="0" stop-color="#ffffff"/><stop offset="0.202" stop-color="#ffefac"/><stop offset="0.403" stop-color="#ffe269"/><stop offset="0.605" stop-color="#ffd731"/><stop offset="0.806" stop-color="#ffcf00"/><stop offset="1" stop-color="#ffc700"/></linearGradient>
<linearGradient id="w192" gradientUnits="userSpaceOnUse" x1="1217.36" y1="181.96" x2="1244.96" y2="100.67"><stop offset="0" stop-color="#ffffff"/><stop offset="0.202" stop-color="#ffedab"/><stop offset="0.403" stop-color="#ffdf68"/><stop offset="0.605" stop-color="#ffd330"/><stop offset="0.806" stop-color="#ffc900"/><stop offset="1" stop-color="#ffc100"/></linearGradient>
<linearGradient id="w193" gradientUnits="userSpaceOnUse" x1="1217.36" y1="181.96" x2="1247.27" y2="100.9"><stop offset="0" stop-color="#ffffff"/><stop offset="0.202" stop-color="#ffebaa"/><stop offset="0.403" stop-color="#ffdb67"/><stop offset="0.605" stop-color="#ffcf2f"/><stop offset="0.807" stop-color="#ffc400"/><stop offset="1" stop-color="#ffbc00"/></linearGradient>
<linearGradient id="w194" gradientUnits="userSpaceOnUse" x1="1217.36" y1="181.96" x2="1249.61" y2="101.13"><stop offset="0" stop-color="#ffffff"/><stop offset="0.202" stop-color="#ffe9a9"/><stop offset="0.403" stop-color="#ffd866"/><stop offset="0.605" stop-color="#ffca2f"/><stop offset="0.807" stop-color="#ffbf00"/><stop offset="1" stop-color="#ffb600"/></linearGradient>
<linearGradient id="w195" gradientUnits="userSpaceOnUse" x1="1217.36" y1="181.96" x2="1251.99" y2="101.36"><stop offset="0" stop-color="#ffffff"/><stop offset="0.202" stop-color="#ffe7a8"/><stop offset="0.403" stop-color="#ffd564"/><stop offset="0.605" stop-color="#ffc62e"/><stop offset="0.807" stop-color="#ffba00"/><stop offset="1" stop-color="#ffb100"/></linearGradient>
<linearGradient id="w196" gradientUnits="userSpaceOnUse" x1="1217.36" y1="181.96" x2="1254.41" y2="101.6"><stop offset="0" stop-color="#ffffff"/><stop offset="0.202" stop-color="#ffe5a7"/><stop offset="0.403" stop-color="#ffd163"/><stop offset="0.605" stop-color="#ffc22d"/><stop offset="0.807" stop-color="#ffb500"/><stop offset="1" stop-color="#ffab00"/></linearGradient>
<linearGradient id="w197" gradientUnits="userSpaceOnUse" x1="1217.36" y1="181.96" x2="1256.87" y2="101.85"><stop offset="0" stop-color="#ffffff"/><stop offset="0.202" stop-color="#ffe3a6"/><stop offset="0.404" stop-color="#ffce62"/><stop offset="0.605" stop-color="#ffbe2d"/><stop offset="0.807" stop-color="#ffb000"/><stop offset="1" stop-color="#ffa600"/></linearGradient>
<linearGradient id="w198" gradientUnits="userSpaceOnUse" x1="1217.36" y1="181.96" x2="1259.38" y2="102.1"><stop offset="0" stop-color="#ffffff"/><stop offset="0.202" stop-color="#ffe1a5"/><stop offset="0.404" stop-color="#ffcb61"/><stop offset="0.605" stop-color="#ffb92c"/><stop offset="0.807" stop-color="#ffac00"/><stop offset="1" stop-color="#ffa100"/></linearGradient>
<linearGradient id="w199" gradientUnits="userSpaceOnUse" x1="1217.36" y1="181.96" x2="1261.94" y2="102.36"><stop offset="0" stop-color="#ffffff"/><stop offset="0.101" stop-color="#ffeece"/><stop offset="0.202" stop-color="#ffdfa4"/><stop offset="0.404" stop-color="#ffc760"/><stop offset="0.606" stop-color="#ffb52b"/><stop offset="0.807" stop-color="#ffa700"/><stop offset="1" stop-color="#ff9c00"/></linearGradient>
<linearGradient id="w200" gradientUnits="userSpaceOnUse" x1="1217.36" y1="181.96" x2="1264.56" y2="102.62"><stop offset="0" stop-color="#ffffff"/><stop offset="0.101" stop-color="#ffeccd"/><stop offset="0.202" stop-color="#ffdda3"/><stop offset="0.404" stop-color="#ffc45f"/><stop offset="0.606" stop-color="#ffb12b"/><stop offset="0.808" stop-color="#ffa300"/><stop offset="1" stop-color="#ff9700"/></linearGradient>
<linearGradient id="w201" gradientUnits="userSpaceOnUse" x1="1217.36" y1="181.96" x2="1267.25" y2="102.9"><stop offset="0" stop-color="#ffffff"/><stop offset="0.101" stop-color="#ffebcc"/><stop offset="0.202" stop-color="#ffdba1"/><stop offset="0.404" stop-color="#ffc15e"/><stop offset="0.606" stop-color="#ffad2a"/><stop offset="0.808" stop-color="#ff9e00"/><stop offset="1" stop-color="#ff9200"/></linearGradient>
<linearGradient id="w202" gradientUnits="userSpaceOnUse" x1="1217.36" y1="181.96" x2="1270.01" y2="103.18"><stop offset="0" stop-color="#ffffff"/><stop offset="0.101" stop-color="#ffeacb"/><stop offset="0.202" stop-color="#ffd9a0"/><stop offset="0.404" stop-color="#ffbe5d"/><stop offset="0.606" stop-color="#ffa929"/><stop offset="0.808" stop-color="#ff9a00"/><stop offset="1" stop-color="#ff8e00"/></linearGradient>
<linearGradient id="w203" gradientUnits="userSpaceOnUse" x1="1217.36" y1="181.96" x2="1272.84" y2="103.46"><stop offset="0" stop-color="#ffffff"/><stop offset="0.101" stop-color="#ffe9cb"/><stop offset="0.202" stop-color="#ffd79f"/><stop offset="0.404" stop-color="#ffba5b"/><stop offset="0.606" stop-color="#ffa529"/><stop offset="0.808" stop-color="#ff9500"/><stop offset="1" stop-color="#ff8900"/></linearGradient>
<linearGradient id="w204" gradientUnits="userSpaceOnUse" x1="1217.36" y1="181.96" x2="1275.76" y2="103.76"><stop offset="0" stop-color="#ffffff"/><stop offset="0.101" stop-color="#ffe8ca"/><stop offset="0.202" stop-color="#ffd49e"/><stop offset="0.404" stop-color="#ffb75a"/><stop offset="0.606" stop-color="#ffa128"/><stop offset="0.808" stop-color="#ff9100"/><stop offset="1" stop-color="#ff8400"/></linearGradient>
<linearGradient id="w205" gradientUnits="userSpaceOnUse" x1="1217.36" y1="181.96" x2="1278.77" y2="104.07"><stop offset="0" stop-color="#ffffff"/><stop offset="0.101" stop-color="#ffe6c9"/><stop offset="0.202" stop-color="#ffd29d"/><stop offset="0.404" stop-color="#ffb459"/><stop offset="0.607" stop-color="#ff9d27"/><stop offset="0.809" stop-color="#ff8d00"/><stop offset="1" stop-color="#ff8000"/></linearGradient>
<linearGradient id="w206" gradientUnits="userSpaceOnUse" x1="1217.36" y1="181.96" x2="1281.88" y2="104.39"><stop offset="0" stop-color="#ffffff"/><stop offset="0.101" stop-color="#ffe5c8"/><stop offset="0.202" stop-color="#ffd09c"/><stop offset="0.404" stop-color="#ffb058"/><stop offset="0.607" stop-color="#ff9927"/><stop offset="0.809" stop-color="#ff8800"/><stop offset="1" stop-color="#ff7b00"/></linearGradient>
<linearGradient id="w207" gradientUnits="userSpaceOnUse" x1="1217.36" y1="181.96" x2="1285.11" y2="104.71"><stop offset="0" stop-color="#ffffff"/><stop offset="0.101" stop-color="#ffe4c7"/><stop offset="0.202" stop-color="#ffce9a"/><stop offset="0.405" stop-color="#ffad57"/><stop offset="0.607" stop-color="#ff9526"/><stop offset="0.809" stop-color="#ff8400"/><stop offset="1" stop-color="#ff7700"/></linearGradient>
<linearGradient id="w208" gradientUnits="userSpaceOnUse" x1="1217.36" y1="181.96" x2="1288.46" y2="105.06"><stop offset="0" stop-color="#ffffff"/><stop offset="0.101" stop-color="#ffe2c6"/><stop offset="0.202" stop-color="#ffcb99"/><stop offset="0.405" stop-color="#ffa956"/><stop offset="0.607" stop-color="#ff9125"/><stop offset="0.809" stop-color="#ff8000"/><stop offset="1" stop-color="#ff7300"/></linearGradient>
<linearGradient id="w209" gradientUnits="userSpaceOnUse" x1="1217.36" y1="181.96" x2="1291.94" y2="105.41"><stop offset="0" stop-color="#ffffff"/><stop offset="0.101" stop-color="#ffe1c5"/><stop offset="0.202" stop-color="#ffc998"/><stop offset="0.405" stop-color="#ffa655"/><stop offset="0.607" stop-color="#ff8d25"/><stop offset="0.81" stop-color="#ff7b00"/><stop offset="1" stop-color="#ff6e00"/></linearGradient>
<linearGradient id="w210" gradientUnits="userSpaceOnUse" x1="1217.36" y1="181.96" x2="1295.57" y2="105.78"><stop offset="0" stop-color="#ffffff"/><stop offset="0.101" stop-color="#ffdfc4"/><stop offset="0.203" stop-color="#ffc697"/><stop offset="0.405" stop-color="#ffa253"/><stop offset="0.608" stop-color="#ff8924"/><stop offset="0.81" stop-color="#ff7700"/><stop offset="1" stop-color="#ff6a00"/></linearGradient>
<linearGradient id="w211" gradientUnits="userSpaceOnUse" x1="1217.36" y1="181.96" x2="1299.36" y2="106.16"><stop offset="0" stop-color="#ffffff"/><stop offset="0.101" stop-color="#ffdec3"/><stop offset="0.203" stop-color="#ffc495"/><stop offset="0.405" stop-color="#ff9f52"/><stop offset="0.608" stop-color="#ff8523"/><stop offset="0.81" stop-color="#ff7300"/><stop offset="1" stop-color="#ff6500"/></linearGradient>
<linearGradient id="w212" gradientUnits="userSpaceOnUse" x1="1217.36" y1="181.96" x2="1303.34" y2="106.57"><stop offset="0" stop-color="#ffffff"/><stop offset="0.101" stop-color="#ffdcc2"/><stop offset="0.203" stop-color="#ffc194"/><stop offset="0.405" stop-color="#ff9b51"/><stop offset="0.608" stop-color="#ff8123"/><stop offset="0.811" stop-color="#ff6e00"/><stop offset="1" stop-color="#ff6100"/></linearGradient>
<linearGradient id="w213" gradientUnits="userSpaceOnUse" x1="1217.36" y1="181.96" x2="1307.51" y2="106.99"><stop offset="0" stop-color="#ffffff"/><stop offset="0.101" stop-color="#ffdac1"/><stop offset="0.203" stop-color="#ffbf92"/><stop offset="0.304" stop-color="#ffa96d"/><stop offset="0.405" stop-color="#ff9750"/><stop offset="0.608" stop-color="#ff7d22"/><stop offset="0.811" stop-color="#ff6a00"/><stop offset="1" stop-color="#ff5d00"/></linearGradient>
<linearGradient id="w214" gradientUnits="userSpaceOnUse" x1="1217.36" y1="181.96" x2="1311.9" y2="107.43"><stop offset="0" stop-color="#ffffff"/><stop offset="0.101" stop-color="#ffd9c0"/><stop offset="0.203" stop-color="#ffbc91"/><stop offset="0.304" stop-color="#ffa56c"/><stop offset="0.406" stop-color="#ff944e"/><stop offset="0.608" stop-color="#ff7921"/><stop offset="0.811" stop-color="#ff6600"/><stop offset="1" stop-color="#ff5800"/></linearGradient>
<linearGradient id="w215" gradientUnits="userSpaceOnUse" x1="1217.36" y1="181.96" x2="1316.55" y2="107.9"><stop offset="0" stop-color="#ffffff"/><stop offset="0.101" stop-color="#ffd7bf"/><stop offset="0.203" stop-color="#ffb98f"/><stop offset="0.304" stop-color="#ffa26a"/><stop offset="0.406" stop-color="#ff904d"/><stop offset="0.609" stop-color="#ff7521"/><stop offset="0.812" stop-color="#ff6100"/><stop offset="1" stop-color="#ff5400"/></linearGradient>
<linearGradient id="w216" gradientUnits="userSpaceOnUse" x1="1217.36" y1="181.96" x2="1321.46" y2="108.39"><stop offset="0" stop-color="#ffffff"/><stop offset="0.101" stop-color="#ffd5be"/><stop offset="0.203" stop-color="#ffb68e"/><stop offset="0.304" stop-color="#ff9e69"/><stop offset="0.406" stop-color="#ff8c4c"/><stop offset="0.609" stop-color="#ff7020"/><stop offset="0.812" stop-color="#ff5d00"/><stop offset="1" stop-color="#ff4f00"/></linearGradient>
<linearGradient id="w217" gradientUnits="userSpaceOnUse" x1="1217.36" y1="181.96" x2="1326.69" y2="108.91"><stop offset="0" stop-color="#ffffff"/><stop offset="0.102" stop-color="#ffd3bc"/><stop offset="0.203" stop-color="#ffb38c"/><stop offset="0.305" stop-color="#ff9b67"/><stop offset="0.406" stop-color="#ff884a"/><stop offset="0.609" stop-color="#ff6c1f"/><stop offset="0.812" stop-color="#ff5800"/><stop offset="1" stop-color="#ff4b00"/></linearGradient>
<linearGradient id="w218" gradientUnits="userSpaceOnUse" x1="1217.36" y1="181.96" x2="1332.26" y2="109.47"><stop offset="0" stop-color="#ffffff"/><stop offset="0.102" stop-color="#ffd1bb"/><stop offset="0.203" stop-color="#ffb08a"/><stop offset="0.305" stop-color="#ff9766"/><stop offset="0.406" stop-color="#ff8449"/><stop offset="0.609" stop-color="#ff671f"/><stop offset="0.813" stop-color="#ff5400"/><stop offset="1" stop-color="#ff4600"/></linearGradient>
<linearGradient id="w219" gradientUnits="userSpaceOnUse" x1="1217.36" y1="181.96" x2="1338.22" y2="110.06"><stop offset="0" stop-color="#ffffff"/><stop offset="0.102" stop-color="#ffcfba"/><stop offset="0.203" stop-color="#ffac89"/><stop offset="0.305" stop-color="#ff9364"/><stop offset="0.406" stop-color="#ff7f47"/><stop offset="0.61" stop-color="#ff631e"/><stop offset="0.813" stop-color="#ff4f00"/><stop offset="1" stop-color="#ff4200"/></linearGradient>
<linearGradient id="w220" gradientUnits="userSpaceOnUse" x1="1217.36" y1="181.96" x2="1344.63" y2="110.69"><stop offset="0" stop-color="#ffffff"/><stop offset="0.102" stop-color="#ffccb8"/><stop offset="0.203" stop-color="#ffa987"/><stop offset="0.305" stop-color="#ff8f62"/><stop offset="0.407" stop-color="#ff7b46"/><stop offset="0.61" stop-color="#ff5e1d"/><stop offset="0.813" stop-color="#ff4b00"/><stop offset="1" stop-color="#ff3d00"/></linearGradient>
<linearGradient id="w221" gradientUnits="userSpaceOnUse" x1="1217.36" y1="181.96" x2="1351.53" y2="111.37"><stop offset="0" stop-color="#ffffff"/><stop offset="0.051" stop-color="#ffe2d7"/><stop offset="0.102" stop-color="#ffcab7"/><stop offset="0.203" stop-color="#ffa585"/><stop offset="0.305" stop-color="#ff8a60"/><stop offset="0.407" stop-color="#ff7644"/><stop offset="0.61" stop-color="#ff591c"/><stop offset="0.814" stop-color="#ff4600"/><stop offset="1" stop-color="#ff3900"/></linearGradient>
<linearGradient id="w222" gradientUnits="userSpaceOnUse" x1="1217.36" y1="181.96" x2="1359.01" y2="112.11"><stop offset="0" stop-color="#ffffff"/><stop offset="0.051" stop-color="#ffe0d6"/><stop offset="0.102" stop-color="#ffc7b5"/><stop offset="0.203" stop-color="#ffa183"/><stop offset="0.305" stop-color="#ff865e"/><stop offset="0.407" stop-color="#ff7243"/><stop offset="0.61" stop-color="#ff541b"/><stop offset="0.814" stop-color="#ff4100"/><stop offset="1" stop-color="#ff3400"/></linearGradient>
<linearGradient id="w223" gradientUnits="userSpaceOnUse" x1="1217.36" y1="181.96" x2="1367.15" y2="112.91"><stop offset="0" stop-color="#ffffff"/><stop offset="0.051" stop-color="#ffded5"/><stop offset="0.102" stop-color="#ffc4b3"/><stop offset="0.204" stop-color="#ff9d80"/><stop offset="0.305" stop-color="#ff815c"/><stop offset="0.407" stop-color="#ff6d41"/><stop offset="0.611" stop-color="#ff4f1b"/><stop offset="0.814" stop-color="#ff3c00"/><stop offset="1" stop-color="#ff2f00"/></linearGradient>
<linearGradient id="w224" gradientUnits="userSpaceOnUse" x1="1217.36" y1="181.96" x2="1376.06" y2="113.78"><stop offset="0" stop-color="#ffffff"/><stop offset="0.051" stop-color="#ffdcd3"/><stop offset="0.102" stop-color="#ffc1b1"/><stop offset="0.204" stop-color="#ff997e"/><stop offset="0.305" stop-color="#ff7d5a"/><stop offset="0.407" stop-color="#ff683f"/><stop offset="0.611" stop-color="#ff4a1a"/><stop offset="0.815" stop-color="#ff3700"/><stop offset="1" stop-color="#ff2a00"/></linearGradient>
<linearGradient id="w225" gradientUnits="userSpaceOnUse" x1="1217.36" y1="181.96" x2="1385.86" y2="114.74"><stop offset="0" stop-color="#ffffff"/><stop offset="0.051" stop-color="#ffdad2"/><stop offset="0.102" stop-color="#ffbeaf"/><stop offset="0.204" stop-color="#ff947c"/><stop offset="0.306" stop-color="#ff7758"/><stop offset="0.408" stop-color="#ff623e"/><stop offset="0.611" stop-color="#ff4519"/><stop offset="0.815" stop-color="#ff3200"/><stop offset="1" stop-color="#ff2500"/></linearGradient>
<linearGradient id="w226" gradientUnits="userSpaceOnUse" x1="1217.36" y1="181.96" x2="1396.73" y2="115.79"><stop offset="0" stop-color="#ffffff"/><stop offset="0.051" stop-color="#ffd8d1"/><stop offset="0.102" stop-color="#ffbaad"/><stop offset="0.204" stop-color="#ff8f79"/><stop offset="0.306" stop-color="#ff7256"/><stop offset="0.408" stop-color="#ff5d3c"/><stop offset="0.612" stop-color="#ff3f18"/><stop offset="0.815" stop-color="#ff2c00"/><stop offset="1" stop-color="#ff2000"/></linearGradient>
<linearGradient id="w227" gradientUnits="userSpaceOnUse" x1="1217.36" y1="181.96" x2="1408.85" y2="116.96"><stop offset="0" stop-color="#ffffff"/><stop offset="0.051" stop-color="#ffd6cf"/><stop offset="0.102" stop-color="#ffb7aa"/><stop offset="0.204" stop-color="#ff8a76"/><stop offset="0.306" stop-color="#ff6c53"/><stop offset="0.408" stop-color="#ff573a"/><stop offset="0.612" stop-color="#ff3a17"/><stop offset="0.816" stop-color="#ff2700"/><stop offset="1" stop-color="#ff1b00"/></linearGradient>
<linearGradient id="w228" gradientUnits="userSpaceOnUse" x1="1217.36" y1="181.96" x2="1422.49" y2="118.27"><stop offset="0" stop-color="#ffffff"/><stop offset="0.051" stop-color="#ffd3cd"/><stop offset="0.102" stop-color="#ffb2a8"/><stop offset="0.204" stop-color="#ff8573"/><stop offset="0.306" stop-color="#ff6651"/><stop offset="0.408" stop-color="#ff5138"/><stop offset="0.612" stop-color="#ff3416"/><stop offset="0.816" stop-color="#ff2100"/><stop offset="1" stop-color="#ff1600"/></linearGradient>
<linearGradient id="w229" gradientUnits="userSpaceOnUse" x1="1217.36" y1="181.96" x2="1437.96" y2="119.75"><stop offset="0" stop-color="#ffffff"/><stop offset="0.051" stop-color="#ffd0cb"/><stop offset="0.102" stop-color="#ffaea5"/><stop offset="0.204" stop-color="#ff7f70"/><stop offset="0.306" stop-color="#ff604e"/><stop offset="0.408" stop-color="#ff4a36"/><stop offset="0.612" stop-color="#ff2e15"/><stop offset="0.816" stop-color="#ff1c00"/><stop offset="1" stop-color="#ff1000"/></linearGradient>
<linearGradient id="w230" gradientUnits="userSpaceOnUse" x1="1217.36" y1="181.96" x2="1455.7" y2="121.43"><stop offset="0" stop-color="#ffffff"/><stop offset="0.051" stop-color="#ffcdc9"/><stop offset="0.102" stop-color="#ffa9a1"/><stop offset="0.204" stop-color="#ff786d"/><stop offset="0.306" stop-color="#ff594b"/><stop offset="0.408" stop-color="#ff4433"/><stop offset="0.613" stop-color="#ff2714"/><stop offset="0.817" stop-color="#ff1600"/><stop offset="1" stop-color="#ff0a00"/></linearGradient>
<linearGradient id="w231" gradientUnits="userSpaceOnUse" x1="1217.36" y1="181.96" x2="1476.27" y2="123.38"><stop offset="0" stop-color="#ffffff"/><stop offset="0.051" stop-color="#ffc9c6"/><stop offset="0.102" stop-color="#ffa39e"/><stop offset="0.204" stop-color="#ff7169"/><stop offset="0.306" stop-color="#ff5248"/><stop offset="0.408" stop-color="#ff3d31"/><stop offset="0.613" stop-color="#ff2113"/><stop offset="0.817" stop-color="#ff0f00"/><stop offset="1" stop-color="#ff0400"/></linearGradient>
<linearGradient id="w232" gradientUnits="userSpaceOnUse" x1="1217.36" y1="181.96" x2="1500.47" y2="125.65"><stop offset="0" stop-color="#ffffff"/><stop offset="0.051" stop-color="#ffc5c3"/><stop offset="0.102" stop-color="#ff9d9a"/><stop offset="0.153" stop-color="#ff807c"/><stop offset="0.204" stop-color="#ff6a65"/><stop offset="0.306" stop-color="#ff4a44"/><stop offset="0.408" stop-color="#ff352e"/><stop offset="0.613" stop-color="#ff1a12"/><stop offset="0.817" stop-color="#ff0900"/><stop offset="1" stop-color="#ff0000"/></linearGradient>
<linearGradient id="w233" gradientUnits="userSpaceOnUse" x1="1217.36" y1="181.96" x2="1529.29" y2="128.36"><stop offset="0" stop-color="#ffffff"/><stop offset="0.026" stop-color="#ffdcdc"/><stop offset="0.051" stop-color="#ffc0bf"/><stop offset="0.102" stop-color="#ff9695"/><stop offset="0.153" stop-color="#ff7877"/><stop offset="0.204" stop-color="#ff6161"/><stop offset="0.306" stop-color="#ff4241"/><stop offset="0.409" stop-color="#ff2d2c"/><stop offset="0.613" stop-color="#ff1211"/><stop offset="0.817" stop-color="#ff0200"/><stop offset="1" stop-color="#ff0000"/></linearGradient>
<linearGradient id="w234" gradientUnits="userSpaceOnUse" x1="1217.36" y1="181.96" x2="1564.33" y2="131.66"><stop offset="0" stop-color="#ffffff"/><stop offset="0.023" stop-color="#ffdcdd"/><stop offset="0.046" stop-color="#ffc0c1"/><stop offset="0.092" stop-color="#ff9598"/><stop offset="0.138" stop-color="#ff777a"/><stop offset="0.183" stop-color="#ff6164"/><stop offset="0.275" stop-color="#ff4145"/><stop offset="0.367" stop-color="#ff2c30"/><stop offset="0.55" stop-color="#ff1116"/><stop offset="0.733" stop-color="#ff0006"/><stop offset="1" stop-color="#ff0000"/></linearGradient>
<linearGradient id="w235" gradientUnits="userSpaceOnUse" x1="1217.36" y1="181.96" x2="1607.94" y2="135.73"><stop offset="0" stop-color="#ffffff"/><stop offset="0.04" stop-color="#ffc1c4"/><stop offset="0.079" stop-color="#ff979c"/><stop offset="0.119" stop-color="#ff797f"/><stop offset="0.158" stop-color="#ff626a"/><stop offset="0.237" stop-color="#ff424b"/><stop offset="0.316" stop-color="#ff2d37"/><stop offset="0.474" stop-color="#ff111d"/><stop offset="0.632" stop-color="#ff000d"/><stop offset="0.816" stop-color="#ff0000"/><stop offset="1" stop-color="#ff0000"/></linearGradient>
<linearGradient id="w236" gradientUnits="userSpaceOnUse" x1="1217.36" y1="181.96" x2="1634.53" y2="143.63"><stop offset="0" stop-color="#ffffff"/><stop offset="0.036" stop-color="#ffc2c7"/><stop offset="0.072" stop-color="#ff99a0"/><stop offset="0.108" stop-color="#ff7b84"/><stop offset="0.144" stop-color="#ff646f"/><stop offset="0.216" stop-color="#ff4451"/><stop offset="0.288" stop-color="#ff2e3d"/><stop offset="0.431" stop-color="#ff1223"/><stop offset="0.575" stop-color="#ff0013"/><stop offset="0.788" stop-color="#ff0005"/><stop offset="1" stop-color="#ff0000"/></linearGradient>
<linearGradient id="w237" gradientUnits="userSpaceOnUse" x1="1217.36" y1="181.96" x2="1635.39" y2="154.56"><stop offset="0" stop-color="#ffffff"/><stop offset="0.035" stop-color="#ffc3c9"/><stop offset="0.07" stop-color="#ff9aa4"/><stop offset="0.105" stop-color="#ff7c89"/><stop offset="0.14" stop-color="#ff6674"/><stop offset="0.209" stop-color="#ff4557"/><stop offset="0.279" stop-color="#ff2f43"/><stop offset="0.419" stop-color="#ff122a"/><stop offset="0.558" stop-color="#ff001a"/><stop offset="1" stop-color="#ff0001"/></linearGradient>
<linearGradient id="w238" gradientUnits="userSpaceOnUse" x1="1217.36" y1="181.96" x2="1635.47" y2="165.54"><stop offset="0" stop-color="#ffffff"/><stop offset="0.034" stop-color="#ffc4cc"/><stop offset="0.068" stop-color="#ff9ca8"/><stop offset="0.136" stop-color="#ff677a"/><stop offset="0.204" stop-color="#ff465d"/><stop offset="0.272" stop-color="#ff3049"/><stop offset="0.407" stop-color="#ff1330"/><stop offset="0.543" stop-color="#ff0020"/><stop offset="1" stop-color="#ff0007"/></linearGradient>
<linearGradient id="w239" gradientUnits="userSpaceOnUse" x1="1217.36" y1="181.96" x2="1635.22" y2="176.49"><stop offset="0" stop-color="#ffffff"/><stop offset="0.033" stop-color="#ffc6ce"/><stop offset="0.066" stop-color="#ff9dab"/><stop offset="0.132" stop-color="#ff697f"/><stop offset="0.198" stop-color="#ff4762"/><stop offset="0.265" stop-color="#ff314f"/><stop offset="0.397" stop-color="#ff1336"/><stop offset="0.529" stop-color="#ff0027"/><stop offset="1" stop-color="#ff000c"/></linearGradient>
<clipPath id="cpr"><rect x="1014" y="77" width="618" height="476"/></clipPath>
<linearGradient id="g13" x1="0" y1="0" x2="0" y2="1"><stop offset="0" stop-color="#ff0000"/><stop offset="0.4" stop-color="#ff0000"/><stop offset="1" stop-color="#7a0000"/></linearGradient>
<linearGradient id="g14" x1="0" y1="0" x2="0" y2="1"><stop offset="0" stop-color="#20a020"/><stop offset="1" stop-color="#107010"/></linearGradient>
<linearGradient id="g15" x1="0" y1="0" x2="0" y2="1"><stop offset="0" stop-color="#0000ff"/><stop offset="0.4" stop-color="#0000ff"/><stop offset="1" stop-color="#000070"/></linearGradient>
<linearGradient id="s0" gradientUnits="userSpaceOnUse" x1="809.5" y1="711.5" x2="987.7" y2="716.17"><stop offset="0" stop-color="#ffffff"/><stop offset="0.5" stop-color="#ffccce"/><stop offset="1" stop-color="#ffa7aa"/></linearGradient>
<linearGradient id="s1" gradientUnits="userSpaceOnUse" x1="809.5" y1="711.5" x2="987.7" y2="725.52"><stop offset="0" stop-color="#ffffff"/><stop offset="0.5" stop-color="#ffcace"/><stop offset="1" stop-color="#ffa3ab"/></linearGradient>
<linearGradient id="s2" gradientUnits="userSpaceOnUse" x1="809.5" y1="711.5" x2="987.7" y2="734.96"><stop offset="0" stop-color="#ffffff"/><stop offset="0.5" stop-color="#ffc7cf"/><stop offset="1" stop-color="#ff9fac"/></linearGradient>
<linearGradient id="s3" gradientUnits="userSpaceOnUse" x1="809.5" y1="711.5" x2="987.7" y2="744.53"><stop offset="0" stop-color="#ffffff"/><stop offset="0.5" stop-color="#ffc5cf"/><stop offset="1" stop-color="#ff9bad"/></linearGradient>
<linearGradient id="s4" gradientUnits="userSpaceOnUse" x1="809.5" y1="711.5" x2="987.7" y2="754.28"><stop offset="0" stop-color="#ffffff"/><stop offset="0.5" stop-color="#ffc2d0"/><stop offset="1" stop-color="#ff97ae"/></linearGradient>
<linearGradient id="s5" gradientUnits="userSpaceOnUse" x1="809.5" y1="711.5" x2="987.7" y2="764.29"><stop offset="0" stop-color="#ffffff"/><stop offset="0.5" stop-color="#ffc0d0"/><stop offset="1" stop-color="#ff93af"/></linearGradient>
<linearGradient id="s6" gradientUnits="userSpaceOnUse" x1="809.5" y1="711.5" x2="987.7" y2="774.6"><stop offset="0" stop-color="#ffffff"/><stop offset="0.25" stop-color="#ffdbe5"/><stop offset="0.5" stop-color="#ffbdd0"/><stop offset="1" stop-color="#ff8fb0"/></linearGradient>
<linearGradient id="s7" gradientUnits="userSpaceOnUse" x1="809.5" y1="711.5" x2="987.7" y2="785.31"><stop offset="0" stop-color="#ffffff"/><stop offset="0.25" stop-color="#ffd9e6"/><stop offset="0.5" stop-color="#ffbad1"/><stop offset="1" stop-color="#ff8ab1"/></linearGradient>
<linearGradient id="s8" gradientUnits="userSpaceOnUse" x1="809.5" y1="711.5" x2="987.7" y2="796.5"><stop offset="0" stop-color="#ffffff"/><stop offset="0.25" stop-color="#ffd8e6"/><stop offset="0.5" stop-color="#ffb7d1"/><stop offset="1" stop-color="#ff86b2"/></linearGradient>
<linearGradient id="s9" gradientUnits="userSpaceOnUse" x1="809.5" y1="711.5" x2="987.7" y2="808.25"><stop offset="0" stop-color="#ffffff"/><stop offset="0.25" stop-color="#ffd6e6"/><stop offset="0.5" stop-color="#ffb4d2"/><stop offset="1" stop-color="#ff81b3"/></linearGradient>
<linearGradient id="s10" gradientUnits="userSpaceOnUse" x1="809.5" y1="711.5" x2="980.45" y2="816.26"><stop offset="0" stop-color="#ffffff"/><stop offset="0.25" stop-color="#ffd6e7"/><stop offset="0.5" stop-color="#ffb4d4"/><stop offset="1" stop-color="#ff80b6"/></linearGradient>
<linearGradient id="s11" gradientUnits="userSpaceOnUse" x1="809.5" y1="711.5" x2="961.93" y2="816.26"><stop offset="0" stop-color="#ffffff"/><stop offset="0.25" stop-color="#ffd8ea"/><stop offset="0.5" stop-color="#ffb8d8"/><stop offset="1" stop-color="#ff85bd"/></linearGradient>
<linearGradient id="s12" gradientUnits="userSpaceOnUse" x1="809.5" y1="711.5" x2="946.03" y2="816.26"><stop offset="0" stop-color="#ffffff"/><stop offset="0.5" stop-color="#ffbbdc"/><stop offset="1" stop-color="#ff8ac3"/></linearGradient>
<linearGradient id="s13" gradientUnits="userSpaceOnUse" x1="809.5" y1="711.5" x2="932.16" y2="816.26"><stop offset="0" stop-color="#ffffff"/><stop offset="0.5" stop-color="#ffbedf"/><stop offset="1" stop-color="#ff8ec8"/></linearGradient>
<linearGradient id="s14" gradientUnits="userSpaceOnUse" x1="809.5" y1="711.5" x2="919.89" y2="816.26"><stop offset="0" stop-color="#ffffff"/><stop offset="0.5" stop-color="#ffc1e2"/><stop offset="1" stop-color="#ff92cd"/></linearGradient>
<linearGradient id="s15" gradientUnits="userSpaceOnUse" x1="809.5" y1="711.5" x2="908.91" y2="816.26"><stop offset="0" stop-color="#ffffff"/><stop offset="0.5" stop-color="#ffc3e5"/><stop offset="1" stop-color="#ff96d2"/></linearGradient>
<linearGradient id="s16" gradientUnits="userSpaceOnUse" x1="809.5" y1="711.5" x2="898.97" y2="816.26"><stop offset="0" stop-color="#ffffff"/><stop offset="0.5" stop-color="#ffc6e8"/><stop offset="1" stop-color="#ff99d6"/></linearGradient>
<linearGradient id="s17" gradientUnits="userSpaceOnUse" x1="809.5" y1="711.5" x2="889.89" y2="816.26"><stop offset="0" stop-color="#ffffff"/><stop offset="0.5" stop-color="#ffc8ea"/><stop offset="1" stop-color="#ff9cda"/></linearGradient>
<linearGradient id="s18" gradientUnits="userSpaceOnUse" x1="809.5" y1="711.5" x2="881.5" y2="816.26"><stop offset="0" stop-color="#ffffff"/><stop offset="0.5" stop-color="#ffcaed"/><stop offset="1" stop-color="#ff9fde"/></linearGradient>
<linearGradient id="s19" gradientUnits="userSpaceOnUse" x1="809.5" y1="711.5" x2="873.7" y2="816.26"><stop offset="0" stop-color="#ffffff"/><stop offset="0.5" stop-color="#ffccef"/><stop offset="1" stop-color="#ffa2e2"/></linearGradient>
<linearGradient id="s20" gradientUnits="userSpaceOnUse" x1="809.5" y1="711.5" x2="866.38" y2="816.26"><stop offset="0" stop-color="#ffffff"/><stop offset="0.5" stop-color="#ffcef1"/><stop offset="1" stop-color="#ffa5e5"/></linearGradient>
<linearGradient id="s21" gradientUnits="userSpaceOnUse" x1="809.5" y1="711.5" x2="859.47" y2="816.26"><stop offset="0" stop-color="#ffffff"/><stop offset="0.5" stop-color="#ffd0f3"/><stop offset="1" stop-color="#ffa8e9"/></linearGradient>
<linearGradient id="s22" gradientUnits="userSpaceOnUse" x1="809.5" y1="711.5" x2="852.89" y2="816.26"><stop offset="0" stop-color="#ffffff"/><stop offset="0.5" stop-color="#ffd1f5"/><stop offset="1" stop-color="#ffaaec"/></linearGradient>
<linearGradient id="s23" gradientUnits="userSpaceOnUse" x1="809.5" y1="711.5" x2="846.6" y2="816.26"><stop offset="0" stop-color="#ffffff"/><stop offset="0.5" stop-color="#ffd3f6"/><stop offset="1" stop-color="#ffadef"/></linearGradient>
<linearGradient id="s24" gradientUnits="userSpaceOnUse" x1="809.5" y1="711.5" x2="840.53" y2="816.26"><stop offset="0" stop-color="#ffffff"/><stop offset="1" stop-color="#ffb0f2"/></linearGradient>
<linearGradient id="s25" gradientUnits="userSpaceOnUse" x1="809.5" y1="711.5" x2="834.65" y2="816.26"><stop offset="0" stop-color="#ffffff"/><stop offset="1" stop-color="#ffb2f6"/></linearGradient>
<linearGradient id="s26" gradientUnits="userSpaceOnUse" x1="809.5" y1="711.5" x2="828.92" y2="816.26"><stop offset="0" stop-color="#ffffff"/><stop offset="1" stop-color="#ffb5f9"/></linearGradient>
<linearGradient id="s27" gradientUnits="userSpaceOnUse" x1="809.5" y1="711.5" x2="823.29" y2="816.26"><stop offset="0" stop-color="#ffffff"/><stop offset="1" stop-color="#ffb7fc"/></linearGradient>
<linearGradient id="s28" gradientUnits="userSpaceOnUse" x1="809.5" y1="711.5" x2="817.74" y2="816.26"><stop offset="0" stop-color="#ffffff"/><stop offset="1" stop-color="#ffbaff"/></linearGradient>
<linearGradient id="s29" gradientUnits="userSpaceOnUse" x1="809.5" y1="711.5" x2="812.24" y2="816.26"><stop offset="0" stop-color="#ffffff"/><stop offset="1" stop-color="#fcbaff"/></linearGradient>
<linearGradient id="s30" gradientUnits="userSpaceOnUse" x1="809.5" y1="711.5" x2="806.76" y2="816.26"><stop offset="0" stop-color="#ffffff"/><stop offset="1" stop-color="#f8baff"/></linearGradient>
<linearGradient id="s31" gradientUnits="userSpaceOnUse" x1="809.5" y1="711.5" x2="801.26" y2="816.26"><stop offset="0" stop-color="#ffffff"/><stop offset="1" stop-color="#f5baff"/></linearGradient>
<linearGradient id="s32" gradientUnits="userSpaceOnUse" x1="809.5" y1="711.5" x2="795.71" y2="816.26"><stop offset="0" stop-color="#ffffff"/><stop offset="1" stop-color="#f2baff"/></linearGradient>
<linearGradient id="s33" gradientUnits="userSpaceOnUse" x1="809.5" y1="711.5" x2="790.08" y2="816.26"><stop offset="0" stop-color="#ffffff"/><stop offset="1" stop-color="#efbbff"/></linearGradient>
<linearGradient id="s34" gradientUnits="userSpaceOnUse" x1="809.5" y1="711.5" x2="784.35" y2="816.26"><stop offset="0" stop-color="#ffffff"/><stop offset="1" stop-color="#ecbbff"/></linearGradient>
<linearGradient id="s35" gradientUnits="userSpaceOnUse" x1="809.5" y1="711.5" x2="778.47" y2="816.26"><stop offset="0" stop-color="#ffffff"/><stop offset="1" stop-color="#e8bbff"/></linearGradient>
<linearGradient id="s36" gradientUnits="userSpaceOnUse" x1="809.5" y1="711.5" x2="772.4" y2="816.26"><stop offset="0" stop-color="#ffffff"/><stop offset="1" stop-color="#e5bbff"/></linearGradient>
<linearGradient id="s37" gradientUnits="userSpaceOnUse" x1="809.5" y1="711.5" x2="766.11" y2="816.26"><stop offset="0" stop-color="#ffffff"/><stop offset="1" stop-color="#e1bcff"/></linearGradient>
<linearGradient id="s38" gradientUnits="userSpaceOnUse" x1="809.5" y1="711.5" x2="759.53" y2="816.26"><stop offset="0" stop-color="#ffffff"/><stop offset="1" stop-color="#debcff"/></linearGradient>
<linearGradient id="s39" gradientUnits="userSpaceOnUse" x1="809.5" y1="711.5" x2="752.62" y2="816.26"><stop offset="0" stop-color="#ffffff"/><stop offset="1" stop-color="#dabcff"/></linearGradient>
<linearGradient id="s40" gradientUnits="userSpaceOnUse" x1="809.5" y1="711.5" x2="745.3" y2="816.26"><stop offset="0" stop-color="#ffffff"/><stop offset="1" stop-color="#d6bcff"/></linearGradient>
<linearGradient id="s41" gradientUnits="userSpaceOnUse" x1="809.5" y1="711.5" x2="737.5" y2="816.26"><stop offset="0" stop-color="#ffffff"/><stop offset="1" stop-color="#d2bdff"/></linearGradient>
<linearGradient id="s42" gradientUnits="userSpaceOnUse" x1="809.5" y1="711.5" x2="729.11" y2="816.26"><stop offset="0" stop-color="#ffffff"/><stop offset="1" stop-color="#cdbdff"/></linearGradient>
<linearGradient id="s43" gradientUnits="userSpaceOnUse" x1="809.5" y1="711.5" x2="720.03" y2="816.26"><stop offset="0" stop-color="#ffffff"/><stop offset="1" stop-color="#c8bdff"/></linearGradient>
<linearGradient id="s44" gradientUnits="userSpaceOnUse" x1="809.5" y1="711.5" x2="710.09" y2="816.26"><stop offset="0" stop-color="#ffffff"/><stop offset="1" stop-color="#c3beff"/></linearGradient>
<linearGradient id="s45" gradientUnits="userSpaceOnUse" x1="809.5" y1="711.5" x2="699.11" y2="816.26"><stop offset="0" stop-color="#ffffff"/><stop offset="1" stop-color="#bdbeff"/></linearGradient>
<linearGradient id="s46" gradientUnits="userSpaceOnUse" x1="809.5" y1="711.5" x2="686.84" y2="816.26"><stop offset="0" stop-color="#ffffff"/><stop offset="0.5" stop-color="#d8dcff"/><stop offset="1" stop-color="#b6beff"/></linearGradient>
<linearGradient id="s47" gradientUnits="userSpaceOnUse" x1="809.5" y1="711.5" x2="672.97" y2="816.26"><stop offset="0" stop-color="#ffffff"/><stop offset="0.5" stop-color="#d4dcff"/><stop offset="1" stop-color="#afbfff"/></linearGradient>
<linearGradient id="s48" gradientUnits="userSpaceOnUse" x1="809.5" y1="711.5" x2="657.07" y2="816.26"><stop offset="0" stop-color="#ffffff"/><stop offset="0.5" stop-color="#cfdcff"/><stop offset="1" stop-color="#a7bfff"/></linearGradient>
<linearGradient id="s49" gradientUnits="userSpaceOnUse" x1="809.5" y1="711.5" x2="638.55" y2="816.26"><stop offset="0" stop-color="#ffffff"/><stop offset="0.5" stop-color="#cadcff"/><stop offset="1" stop-color="#9dc0ff"/></linearGradient>
<linearGradient id="s50" gradientUnits="userSpaceOnUse" x1="809.5" y1="711.5" x2="631.84" y2="807.96"><stop offset="0" stop-color="#ffffff"/><stop offset="0.5" stop-color="#c8dfff"/><stop offset="1" stop-color="#9ac5ff"/></linearGradient>
<linearGradient id="s51" gradientUnits="userSpaceOnUse" x1="809.5" y1="711.5" x2="631.84" y2="796.24"><stop offset="0" stop-color="#ffffff"/><stop offset="0.5" stop-color="#c8e3ff"/><stop offset="1" stop-color="#99cbff"/></linearGradient>
<linearGradient id="s52" gradientUnits="userSpaceOnUse" x1="809.5" y1="711.5" x2="631.84" y2="785.09"><stop offset="0" stop-color="#ffffff"/><stop offset="0.5" stop-color="#c7e6ff"/><stop offset="1" stop-color="#98d2ff"/></linearGradient>
<linearGradient id="s53" gradientUnits="userSpaceOnUse" x1="809.5" y1="711.5" x2="631.84" y2="774.41"><stop offset="0" stop-color="#ffffff"/><stop offset="0.5" stop-color="#c7eaff"/><stop offset="1" stop-color="#97d8ff"/></linearGradient>
<linearGradient id="s54" gradientUnits="userSpaceOnUse" x1="809.5" y1="711.5" x2="631.84" y2="764.13"><stop offset="0" stop-color="#ffffff"/><stop offset="0.5" stop-color="#c7edff"/><stop offset="1" stop-color="#97deff"/></linearGradient>
<linearGradient id="s55" gradientUnits="userSpaceOnUse" x1="809.5" y1="711.5" x2="631.84" y2="754.15"><stop offset="0" stop-color="#ffffff"/><stop offset="0.5" stop-color="#c7f0ff"/><stop offset="1" stop-color="#96e4ff"/></linearGradient>
<linearGradient id="s56" gradientUnits="userSpaceOnUse" x1="809.5" y1="711.5" x2="631.84" y2="744.43"><stop offset="0" stop-color="#ffffff"/><stop offset="1" stop-color="#95eaff"/></linearGradient>
<linearGradient id="s57" gradientUnits="userSpaceOnUse" x1="809.5" y1="711.5" x2="631.84" y2="734.89"><stop offset="0" stop-color="#ffffff"/><stop offset="1" stop-color="#94f0ff"/></linearGradient>
<linearGradient id="s58" gradientUnits="userSpaceOnUse" x1="809.5" y1="711.5" x2="631.84" y2="725.48"><stop offset="0" stop-color="#ffffff"/><stop offset="1" stop-color="#94f6ff"/></linearGradient>
<linearGradient id="s59" gradientUnits="userSpaceOnUse" x1="809.5" y1="711.5" x2="631.84" y2="716.15"><stop offset="0" stop-color="#ffffff"/><stop offset="1" stop-color="#93fcff"/></linearGradient>
<linearGradient id="s60" gradientUnits="userSpaceOnUse" x1="809.5" y1="711.5" x2="631.84" y2="706.85"><stop offset="0" stop-color="#ffffff"/><stop offset="1" stop-color="#90fffc"/></linearGradient>
<linearGradient id="s61" gradientUnits="userSpaceOnUse" x1="809.5" y1="711.5" x2="631.84" y2="697.52"><stop offset="0" stop-color="#ffffff"/><stop offset="1" stop-color="#8cfff6"/></linearGradient>
<linearGradient id="s62" gradientUnits="userSpaceOnUse" x1="809.5" y1="711.5" x2="631.84" y2="688.11"><stop offset="0" stop-color="#ffffff"/><stop offset="0.5" stop-color="#c0fff7"/><stop offset="1" stop-color="#88fff0"/></linearGradient>
<linearGradient id="s63" gradientUnits="userSpaceOnUse" x1="809.5" y1="711.5" x2="631.84" y2="678.57"><stop offset="0" stop-color="#ffffff"/><stop offset="0.5" stop-color="#befff4"/><stop offset="1" stop-color="#84ffea"/></linearGradient>
<linearGradient id="s64" gradientUnits="userSpaceOnUse" x1="809.5" y1="711.5" x2="631.84" y2="668.85"><stop offset="0" stop-color="#ffffff"/><stop offset="0.5" stop-color="#bbfff1"/><stop offset="1" stop-color="#80ffe4"/></linearGradient>
<linearGradient id="s65" gradientUnits="userSpaceOnUse" x1="809.5" y1="711.5" x2="631.84" y2="658.87"><stop offset="0" stop-color="#ffffff"/><stop offset="0.5" stop-color="#b8ffed"/><stop offset="1" stop-color="#7cffde"/></linearGradient>
<linearGradient id="s66" gradientUnits="userSpaceOnUse" x1="809.5" y1="711.5" x2="631.84" y2="648.59"><stop offset="0" stop-color="#ffffff"/><stop offset="0.5" stop-color="#b6ffea"/><stop offset="1" stop-color="#78ffd9"/></linearGradient>
<linearGradient id="s67" gradientUnits="userSpaceOnUse" x1="809.5" y1="711.5" x2="631.84" y2="637.91"><stop offset="0" stop-color="#ffffff"/><stop offset="0.5" stop-color="#b3ffe7"/><stop offset="1" stop-color="#74ffd3"/></linearGradient>
<linearGradient id="s68" gradientUnits="userSpaceOnUse" x1="809.5" y1="711.5" x2="631.84" y2="626.76"><stop offset="0" stop-color="#ffffff"/><stop offset="0.5" stop-color="#b0ffe3"/><stop offset="1" stop-color="#70ffcd"/></linearGradient>
<linearGradient id="s69" gradientUnits="userSpaceOnUse" x1="809.5" y1="711.5" x2="631.84" y2="615.04"><stop offset="0" stop-color="#ffffff"/><stop offset="0.5" stop-color="#aeffe0"/><stop offset="1" stop-color="#6cffc7"/></linearGradient>
<linearGradient id="s70" gradientUnits="userSpaceOnUse" x1="809.5" y1="711.5" x2="642.07" y2="608.9"><stop offset="0" stop-color="#ffffff"/><stop offset="0.5" stop-color="#afffde"/><stop offset="1" stop-color="#6effc4"/></linearGradient>
<linearGradient id="s71" gradientUnits="userSpaceOnUse" x1="809.5" y1="711.5" x2="660.22" y2="608.9"><stop offset="0" stop-color="#ffffff"/><stop offset="0.5" stop-color="#b4ffde"/><stop offset="1" stop-color="#77ffc3"/></linearGradient>
<linearGradient id="s72" gradientUnits="userSpaceOnUse" x1="809.5" y1="711.5" x2="675.79" y2="608.9"><stop offset="0" stop-color="#ffffff"/><stop offset="0.5" stop-color="#b8ffdd"/><stop offset="1" stop-color="#7fffc3"/></linearGradient>
<linearGradient id="s73" gradientUnits="userSpaceOnUse" x1="809.5" y1="711.5" x2="689.37" y2="608.9"><stop offset="0" stop-color="#ffffff"/><stop offset="0.5" stop-color="#bcffdd"/><stop offset="1" stop-color="#86ffc2"/></linearGradient>
<linearGradient id="s74" gradientUnits="userSpaceOnUse" x1="809.5" y1="711.5" x2="701.38" y2="608.9"><stop offset="0" stop-color="#ffffff"/><stop offset="0.5" stop-color="#bfffdd"/><stop offset="1" stop-color="#8bffc2"/></linearGradient>
<linearGradient id="s75" gradientUnits="userSpaceOnUse" x1="809.5" y1="711.5" x2="712.14" y2="608.9"><stop offset="0" stop-color="#ffffff"/><stop offset="0.5" stop-color="#c3ffdd"/><stop offset="1" stop-color="#91ffc2"/></linearGradient>
<linearGradient id="s76" gradientUnits="userSpaceOnUse" x1="809.5" y1="711.5" x2="721.87" y2="608.9"><stop offset="0" stop-color="#ffffff"/><stop offset="0.5" stop-color="#c5ffdd"/><stop offset="1" stop-color="#96ffc1"/></linearGradient>
<linearGradient id="s77" gradientUnits="userSpaceOnUse" x1="809.5" y1="711.5" x2="730.77" y2="608.9"><stop offset="0" stop-color="#ffffff"/><stop offset="0.5" stop-color="#c8ffdd"/><stop offset="1" stop-color="#9affc1"/></linearGradient>
<linearGradient id="s78" gradientUnits="userSpaceOnUse" x1="809.5" y1="711.5" x2="738.98" y2="608.9"><stop offset="0" stop-color="#ffffff"/><stop offset="0.5" stop-color="#caffdd"/><stop offset="1" stop-color="#9effc1"/></linearGradient>
<linearGradient id="s79" gradientUnits="userSpaceOnUse" x1="809.5" y1="711.5" x2="746.63" y2="608.9"><stop offset="0" stop-color="#ffffff"/><stop offset="0.5" stop-color="#ccffdd"/><stop offset="1" stop-color="#a2ffc1"/></linearGradient>
<linearGradient id="s80" gradientUnits="userSpaceOnUse" x1="809.5" y1="711.5" x2="753.79" y2="608.9"><stop offset="0" stop-color="#ffffff"/><stop offset="0.5" stop-color="#ceffdd"/><stop offset="1" stop-color="#a6ffc1"/></linearGradient>
<linearGradient id="s81" gradientUnits="userSpaceOnUse" x1="809.5" y1="711.5" x2="760.56" y2="608.9"><stop offset="0" stop-color="#ffffff"/><stop offset="0.5" stop-color="#d0ffdd"/><stop offset="1" stop-color="#aaffc0"/></linearGradient>
<linearGradient id="s82" gradientUnits="userSpaceOnUse" x1="809.5" y1="711.5" x2="767" y2="608.9"><stop offset="0" stop-color="#ffffff"/><stop offset="0.5" stop-color="#d2ffdd"/><stop offset="1" stop-color="#adffc0"/></linearGradient>
<linearGradient id="s83" gradientUnits="userSpaceOnUse" x1="809.5" y1="711.5" x2="773.17" y2="608.9"><stop offset="0" stop-color="#ffffff"/><stop offset="0.5" stop-color="#d4ffdd"/><stop offset="1" stop-color="#b0ffc0"/></linearGradient>
<linearGradient id="s84" gradientUnits="userSpaceOnUse" x1="809.5" y1="711.5" x2="779.11" y2="608.9"><stop offset="0" stop-color="#ffffff"/><stop offset="0.5" stop-color="#d6ffdd"/><stop offset="1" stop-color="#b3ffc0"/></linearGradient>
<linearGradient id="s85" gradientUnits="userSpaceOnUse" x1="809.5" y1="711.5" x2="784.87" y2="608.9"><stop offset="0" stop-color="#ffffff"/><stop offset="0.5" stop-color="#d7ffdd"/><stop offset="1" stop-color="#b6ffc0"/></linearGradient>
<linearGradient id="s86" gradientUnits="userSpaceOnUse" x1="809.5" y1="711.5" x2="790.48" y2="608.9"><stop offset="0" stop-color="#ffffff"/><stop offset="1" stop-color="#b9ffbf"/></linearGradient>
<linearGradient id="s87" gradientUnits="userSpaceOnUse" x1="809.5" y1="711.5" x2="795.99" y2="608.9"><stop offset="0" stop-color="#ffffff"/><stop offset="1" stop-color="#bcffbf"/></linearGradient>
<linearGradient id="s88" gradientUnits="userSpaceOnUse" x1="809.5" y1="711.5" x2="801.43" y2="608.9"><stop offset="0" stop-color="#ffffff"/><stop offset="1" stop-color="#bfffbf"/></linearGradient>
<linearGradient id="s89" gradientUnits="userSpaceOnUse" x1="809.5" y1="711.5" x2="806.81" y2="608.9"><stop offset="0" stop-color="#ffffff"/><stop offset="1" stop-color="#c2ffbf"/></linearGradient>
<linearGradient id="s90" gradientUnits="userSpaceOnUse" x1="809.5" y1="711.5" x2="812.19" y2="608.9"><stop offset="0" stop-color="#ffffff"/><stop offset="1" stop-color="#c5ffbf"/></linearGradient>
<linearGradient id="s91" gradientUnits="userSpaceOnUse" x1="809.5" y1="711.5" x2="817.57" y2="608.9"><stop offset="0" stop-color="#ffffff"/><stop offset="1" stop-color="#c8ffbf"/></linearGradient>
<linearGradient id="s92" gradientUnits="userSpaceOnUse" x1="809.5" y1="711.5" x2="823.01" y2="608.9"><stop offset="0" stop-color="#ffffff"/><stop offset="1" stop-color="#cbffbe"/></linearGradient>
<linearGradient id="s93" gradientUnits="userSpaceOnUse" x1="809.5" y1="711.5" x2="828.52" y2="608.9"><stop offset="0" stop-color="#ffffff"/><stop offset="1" stop-color="#ceffbe"/></linearGradient>
<linearGradient id="s94" gradientUnits="userSpaceOnUse" x1="809.5" y1="711.5" x2="834.13" y2="608.9"><stop offset="0" stop-color="#ffffff"/><stop offset="1" stop-color="#d1ffbe"/></linearGradient>
<linearGradient id="s95" gradientUnits="userSpaceOnUse" x1="809.5" y1="711.5" x2="839.89" y2="608.9"><stop offset="0" stop-color="#ffffff"/><stop offset="1" stop-color="#d4ffbe"/></linearGradient>
<linearGradient id="s96" gradientUnits="userSpaceOnUse" x1="809.5" y1="711.5" x2="845.83" y2="608.9"><stop offset="0" stop-color="#ffffff"/><stop offset="1" stop-color="#d7ffbe"/></linearGradient>
<linearGradient id="s97" gradientUnits="userSpaceOnUse" x1="809.5" y1="711.5" x2="852" y2="608.9"><stop offset="0" stop-color="#ffffff"/><stop offset="1" stop-color="#dbffbd"/></linearGradient>
<linearGradient id="s98" gradientUnits="userSpaceOnUse" x1="809.5" y1="711.5" x2="858.44" y2="608.9"><stop offset="0" stop-color="#ffffff"/><stop offset="1" stop-color="#deffbd"/></linearGradient>
<linearGradient id="s99" gradientUnits="userSpaceOnUse" x1="809.5" y1="711.5" x2="865.21" y2="608.9"><stop offset="0" stop-color="#ffffff"/><stop offset="1" stop-color="#e2ffbd"/></linearGradient>
<linearGradient id="s100" gradientUnits="userSpaceOnUse" x1="809.5" y1="711.5" x2="872.37" y2="608.9"><stop offset="0" stop-color="#ffffff"/><stop offset="1" stop-color="#e6ffbd"/></linearGradient>
<linearGradient id="s101" gradientUnits="userSpaceOnUse" x1="809.5" y1="711.5" x2="880.02" y2="608.9"><stop offset="0" stop-color="#ffffff"/><stop offset="1" stop-color="#eaffbc"/></linearGradient>
<linearGradient id="s102" gradientUnits="userSpaceOnUse" x1="809.5" y1="711.5" x2="888.23" y2="608.9"><stop offset="0" stop-color="#ffffff"/><stop offset="1" stop-color="#efffbc"/></linearGradient>
<linearGradient id="s103" gradientUnits="userSpaceOnUse" x1="809.5" y1="711.5" x2="897.13" y2="608.9"><stop offset="0" stop-color="#ffffff"/><stop offset="1" stop-color="#f4ffbc"/></linearGradient>
<linearGradient id="s104" gradientUnits="userSpaceOnUse" x1="809.5" y1="711.5" x2="906.86" y2="608.9"><stop offset="0" stop-color="#ffffff"/><stop offset="1" stop-color="#faffbb"/></linearGradient>
<linearGradient id="s105" gradientUnits="userSpaceOnUse" x1="809.5" y1="711.5" x2="917.62" y2="608.9"><stop offset="0" stop-color="#ffffff"/><stop offset="1" stop-color="#fffeba"/></linearGradient>
<linearGradient id="s106" gradientUnits="userSpaceOnUse" x1="809.5" y1="711.5" x2="929.63" y2="608.9"><stop offset="0" stop-color="#ffffff"/><stop offset="1" stop-color="#fff7b5"/></linearGradient>
<linearGradient id="s107" gradientUnits="userSpaceOnUse" x1="809.5" y1="711.5" x2="943.21" y2="608.9"><stop offset="0" stop-color="#ffffff"/><stop offset="0.5" stop-color="#fff7d4"/><stop offset="1" stop-color="#fff0af"/></linearGradient>
<linearGradient id="s108" gradientUnits="userSpaceOnUse" x1="809.5" y1="711.5" x2="958.78" y2="608.9"><stop offset="0" stop-color="#ffffff"/><stop offset="0.5" stop-color="#fff2d0"/><stop offset="1" stop-color="#ffe8a9"/></linearGradient>
<linearGradient id="s109" gradientUnits="userSpaceOnUse" x1="809.5" y1="711.5" x2="976.93" y2="608.9"><stop offset="0" stop-color="#ffffff"/><stop offset="0.5" stop-color="#ffedcb"/><stop offset="1" stop-color="#ffdfa2"/></linearGradient>
<linearGradient id="s110" gradientUnits="userSpaceOnUse" x1="809.5" y1="711.5" x2="987.7" y2="614.75"><stop offset="0" stop-color="#ffffff"/><stop offset="0.5" stop-color="#ffe9c9"/><stop offset="1" stop-color="#ffd79f"/></linearGradient>
<linearGradient id="s111" gradientUnits="userSpaceOnUse" x1="809.5" y1="711.5" x2="987.7" y2="626.5"><stop offset="0" stop-color="#ffffff"/><stop offset="0.5" stop-color="#ffe5ca"/><stop offset="1" stop-color="#ffd1a0"/></linearGradient>
<linearGradient id="s112" gradientUnits="userSpaceOnUse" x1="809.5" y1="711.5" x2="987.7" y2="637.69"><stop offset="0" stop-color="#ffffff"/><stop offset="0.5" stop-color="#ffe2ca"/><stop offset="1" stop-color="#ffcca1"/></linearGradient>
<linearGradient id="s113" gradientUnits="userSpaceOnUse" x1="809.5" y1="711.5" x2="987.7" y2="648.4"><stop offset="0" stop-color="#ffffff"/><stop offset="0.5" stop-color="#ffdfcb"/><stop offset="1" stop-color="#ffc7a3"/></linearGradient>
<linearGradient id="s114" gradientUnits="userSpaceOnUse" x1="809.5" y1="711.5" x2="987.7" y2="658.71"><stop offset="0" stop-color="#ffffff"/><stop offset="0.5" stop-color="#ffdccb"/><stop offset="1" stop-color="#ffc2a4"/></linearGradient>
<linearGradient id="s115" gradientUnits="userSpaceOnUse" x1="809.5" y1="711.5" x2="987.7" y2="668.72"><stop offset="0" stop-color="#ffffff"/><stop offset="0.5" stop-color="#ffd9cc"/><stop offset="1" stop-color="#ffbda5"/></linearGradient>
<linearGradient id="s116" gradientUnits="userSpaceOnUse" x1="809.5" y1="711.5" x2="987.7" y2="678.47"><stop offset="0" stop-color="#ffffff"/><stop offset="0.5" stop-color="#ffd7cc"/><stop offset="1" stop-color="#ffb8a6"/></linearGradient>
<linearGradient id="s117" gradientUnits="userSpaceOnUse" x1="809.5" y1="711.5" x2="987.7" y2="688.04"><stop offset="0" stop-color="#ffffff"/><stop offset="0.5" stop-color="#ffd4cd"/><stop offset="1" stop-color="#ffb4a7"/></linearGradient>
<linearGradient id="s118" gradientUnits="userSpaceOnUse" x1="809.5" y1="711.5" x2="987.7" y2="697.48"><stop offset="0" stop-color="#ffffff"/><stop offset="0.5" stop-color="#ffd1cd"/><stop offset="1" stop-color="#ffb0a8"/></linearGradient>
<linearGradient id="s119" gradientUnits="userSpaceOnUse" x1="809.5" y1="711.5" x2="987.7" y2="706.83"><stop offset="0" stop-color="#ffffff"/><stop offset="0.5" stop-color="#ffcfcd"/><stop offset="1" stop-color="#ffaca9"/></linearGradient>
<clipPath id="cps"><rect x="645" y="616.5" width="329.5" height="192"/></clipPath>
<linearGradient id="g16" x1="0" y1="0" x2="0" y2="1"><stop offset="0" stop-color="#2a2a2a"/><stop offset="1" stop-color="#383838"/></linearGradient>
<clipPath id="cpt"><rect x="992" y="603" width="612.5" height="191"/></clipPath>
<linearGradient id="g17" x1="0" y1="0" x2="0" y2="1"><stop offset="0" stop-color="#343434"/><stop offset="0.46" stop-color="#303030"/><stop offset="0.5" stop-color="#151515"/><stop offset="1" stop-color="#202020"/></linearGradient>
<linearGradient id="g18" x1="0" y1="0" x2="0" y2="1"><stop offset="0" stop-color="#4a4a4a"/><stop offset="1" stop-color="#6c6c6c"/></linearGradient>
<linearGradient id="g19" x1="0" y1="0" x2="0" y2="1"><stop offset="0" stop-color="#343434"/><stop offset="1" stop-color="#787878"/></linearGradient>
<linearGradient id="g20" x1="0" y1="0" x2="0" y2="1"><stop offset="0" stop-color="#959595"/><stop offset="1" stop-color="#555555"/></linearGradient>
<linearGradient id="g21" x1="0" y1="0" x2="0" y2="1"><stop offset="0" stop-color="#606060"/><stop offset="1" stop-color="#9c9c9c"/></linearGradient>
<linearGradient id="g22" x1="0" y1="0" x2="0" y2="1"><stop offset="0" stop-color="#a8a8a8"/><stop offset="0.12" stop-color="#969696"/><stop offset="0.6" stop-color="#787878"/><stop offset="1" stop-color="#646464"/></linearGradient>
<linearGradient id="g23" x1="0" y1="0" x2="0" y2="1"><stop offset="0" stop-color="#6e6e6e"/><stop offset="0.5" stop-color="#8a8a8a"/><stop offset="1" stop-color="#b4b4b4"/></linearGradient>
<linearGradient id="g24" x1="0" y1="0" x2="0" y2="1"><stop offset="0" stop-color="#1c1c1c"/><stop offset="1" stop-color="#363636"/></linearGradient>
<linearGradient id="g25" x1="0" y1="0" x2="0" y2="1"><stop offset="0" stop-color="#a4a4a4"/><stop offset="0.5" stop-color="#858585"/><stop offset="1" stop-color="#6a6a6a"/></linearGradient>
<linearGradient id="g26" x1="0" y1="0" x2="0" y2="1"><stop offset="0" stop-color="#5c5c5c"/><stop offset="1" stop-color="#989898"/></linearGradient>
<linearGradient id="g27" x1="0" y1="0" x2="0" y2="1"><stop offset="0" stop-color="#7c7c7c"/><stop offset="1" stop-color="#606060"/></linearGradient>
<linearGradient id="g28" x1="0" y1="0" x2="0" y2="1"><stop offset="0" stop-color="#a0a0a0"/><stop offset="0.5" stop-color="#9a9a9a"/><stop offset="0.52" stop-color="#808080"/><stop offset="1" stop-color="#8a8a8a"/></linearGradient>
<linearGradient id="g29" x1="0" y1="0" x2="0" y2="1"><stop offset="0" stop-color="#1c1c1c"/><stop offset="0.5" stop-color="#101010"/><stop offset="0.52" stop-color="#000"/><stop offset="1" stop-color="#000"/></linearGradient>
</defs>
<rect x="0" y="0" width="1657" height="905" fill="#333333"/>
<rect x="0" y="0" width="1657" height="34" fill="#242424"/>
<rect x="0" y="34" width="1" height="866" fill="#4a4a4a"/>
<rect x="2" y="0" width="72" height="34" fill="url(#g1)"/>
<rect x="1" y="0" width="1" height="34" fill="#6a6a6a"/>
<rect x="74" y="0" width="1" height="34" fill="#7a7a7a"/>
<rect x="75" y="0" width="40" height="34" fill="url(#g2)"/>
<rect x="115" y="0" width="1" height="34" fill="#808080"/>
<circle cx="93.5" cy="18" r="11.5" fill="url(#g3)"/>
<rect x="90" y="18" width="7" height="1" fill="#8c8c8c"/>
<rect x="93" y="15" width="1" height="7" fill="#8c8c8c"/>
<text x="9" y="21" font-size="14.2" fill="#dcdcdc" textLength="58" lengthAdjust="spacingAndGlyphs">History 1</text>
<text x="52.5" y="90" font-size="37.5" fill="#f2f2f2" textLength="216" lengthAdjust="spacingAndGlyphs">Color Gamut</text>
<text x="210.5" y="139" font-size="13.6" fill="#d8d8d8" text-anchor="middle" textLength="77" lengthAdjust="spacingAndGlyphs">DeltaE 2000</text>
<rect x="48" y="143" width="325" height="402" fill="#262626"/>
<rect x="90" y="143" width="1" height="401" fill="#8a8a8a"/>
<rect x="134" y="143" width="1" height="401" fill="#8a8a8a"/>
<rect x="177" y="143" width="1" height="401" fill="#8a8a8a"/>
<rect x="221" y="143" width="1" height="401" fill="#8a8a8a"/>
<rect x="264" y="143" width="1" height="401" fill="#8a8a8a"/>
<rect x="307" y="143" width="1" height="401" fill="#8a8a8a"/>
<rect x="350" y="143" width="1" height="401" fill="#8a8a8a"/>
<rect x="48" y="143" width="325" height="1" fill="#8e8e8e"/>
<rect x="372" y="143" width="1" height="402" fill="#8e8e8e"/>
<rect x="48" y="143" width="1" height="401" fill="#8e8e8e"/>
<rect x="48" y="544" width="325" height="1" fill="#8e8e8e"/>
<rect x="48" y="545" width="1" height="6" fill="#dadada"/>
<text x="48.5" y="565" font-size="14" fill="#d8d8d8" text-anchor="middle">0</text>
<rect x="90" y="545" width="1" height="6" fill="#dadada"/>
<text x="90.5" y="565" font-size="14" fill="#d8d8d8" text-anchor="middle">2</text>
<rect x="134" y="545" width="1" height="6" fill="#dadada"/>
<text x="134.5" y="565" font-size="14" fill="#d8d8d8" text-anchor="middle">4</text>
<rect x="177" y="545" width="1" height="6" fill="#dadada"/>
<text x="177.5" y="565" font-size="14" fill="#d8d8d8" text-anchor="middle">6</text>
<rect x="221" y="545" width="1" height="6" fill="#dadada"/>
<text x="221.5" y="565" font-size="14" fill="#d8d8d8" text-anchor="middle">8</text>
<rect x="264" y="545" width="1" height="6" fill="#dadada"/>
<text x="264.5" y="565" font-size="14" fill="#d8d8d8" text-anchor="middle">10</text>
<rect x="307" y="545" width="1" height="6" fill="#dadada"/>
<text x="307.5" y="565" font-size="14" fill="#d8d8d8" text-anchor="middle">12</text>
<rect x="350" y="545" width="1" height="6" fill="#dadada"/>
<text x="350.5" y="565" font-size="14" fill="#d8d8d8" text-anchor="middle">14</text>
<rect x="49" y="149.5" width="132.41" height="38" fill="url(#g4)"/>
<path d="M49 149.5H181.41V187.5H49" fill="none" stroke="#000" stroke-width="1"/>
<rect x="49" y="199.5" width="109.51" height="38" fill="url(#g5)"/>
<path d="M49 199.5H158.51V237.5H49" fill="none" stroke="#000" stroke-width="1"/>
<rect x="49" y="249.5" width="89.21" height="38" fill="url(#g6)"/>
<path d="M49 249.5H138.21V287.5H49" fill="none" stroke="#000" stroke-width="1"/>
<rect x="49" y="299.5" width="69.55" height="38" fill="url(#g7)"/>
<path d="M49 299.5H118.55V337.5H49" fill="none" stroke="#000" stroke-width="1"/>
<rect x="49" y="349.5" width="106.49" height="38" fill="url(#g8)"/>
<path d="M49 349.5H155.49V387.5H49" fill="none" stroke="#000" stroke-width="1"/>
<rect x="49" y="399.5" width="104.76" height="38" fill="url(#g9)"/>
<path d="M49 399.5H153.76V437.5H49" fill="none" stroke="#000" stroke-width="1"/>
<rect x="49" y="449.5" width="61.56" height="38" fill="url(#g10)"/>
<path d="M49 449.5H110.56V487.5H49" fill="none" stroke="#000" stroke-width="1"/>
<rect x="49" y="499.5" width="120.96" height="38" fill="url(#g11)"/>
<path d="M49 499.5H169.96V537.5H49" fill="none" stroke="#000" stroke-width="1"/>
<text x="480.5" y="73.2" font-size="13.6" fill="#d8d8d8" text-anchor="middle">DeltaL</text>
<rect x="423" y="78" width="141" height="308" fill="#262626"/>
<rect x="423" y="79" width="140" height="1" fill="#8a8a8a"/>
<rect x="418" y="79" width="5" height="1" fill="#dadada"/>
<text x="417" y="84.6" font-size="14" fill="#d8d8d8" text-anchor="end">15</text>
<rect x="423" y="130" width="140" height="1" fill="#8a8a8a"/>
<rect x="418" y="130" width="5" height="1" fill="#dadada"/>
<text x="417" y="135.6" font-size="14" fill="#d8d8d8" text-anchor="end">10</text>
<rect x="423" y="181" width="140" height="1" fill="#8a8a8a"/>
<rect x="418" y="181" width="5" height="1" fill="#dadada"/>
<text x="417" y="186.6" font-size="14" fill="#d8d8d8" text-anchor="end">5</text>
<rect x="423" y="232" width="140" height="1" fill="#8a8a8a"/>
<rect x="418" y="232" width="5" height="1" fill="#dadada"/>
<text x="417" y="237.6" font-size="14" fill="#d8d8d8" text-anchor="end">0</text>
<rect x="423" y="283" width="140" height="1" fill="#8a8a8a"/>
<rect x="418" y="283" width="5" height="1" fill="#dadada"/>
<text x="417" y="288.6" font-size="14" fill="#d8d8d8" text-anchor="end">-5</text>
<rect x="423" y="334" width="140" height="1" fill="#8a8a8a"/>
<rect x="418" y="334" width="5" height="1" fill="#dadada"/>
<text x="417" y="339.6" font-size="14" fill="#d8d8d8" text-anchor="end">-10</text>
<rect x="423" y="384" width="140" height="1" fill="#8a8a8a"/>
<rect x="418" y="384" width="5" height="1" fill="#dadada"/>
<text x="417" y="391" font-size="14" fill="#d8d8d8" text-anchor="end">-15</text>
<rect x="423" y="78" width="141" height="1" fill="#8e8e8e"/>
<rect x="423" y="78" width="1" height="307" fill="#8e8e8e"/>
<rect x="563" y="78" width="1" height="307" fill="#8e8e8e"/>
<rect x="423" y="385" width="141" height="1" fill="#8e8e8e"/>
<rect x="423" y="386" width="1" height="4.5" fill="#dadada"/>
<rect x="563" y="386" width="1" height="4.5" fill="#dadada"/>
<text x="493.5" y="400" font-size="14.2" fill="#d8d8d8" text-anchor="middle">100W</text>
<rect x="437" y="232" width="112" height="1" fill="#1a1a1a"/>
<text x="671.5" y="73.2" font-size="13.6" fill="#d8d8d8" text-anchor="middle">DeltaC</text>
<rect x="614" y="78" width="141" height="308" fill="#262626"/>
<rect x="614" y="79" width="140" height="1" fill="#8a8a8a"/>
<rect x="609" y="79" width="5" height="1" fill="#dadada"/>
<text x="608" y="84.6" font-size="14" fill="#d8d8d8" text-anchor="end">15</text>
<rect x="614" y="130" width="140" height="1" fill="#8a8a8a"/>
<rect x="609" y="130" width="5" height="1" fill="#dadada"/>
<text x="608" y="135.6" font-size="14" fill="#d8d8d8" text-anchor="end">10</text>
<rect x="614" y="181" width="140" height="1" fill="#8a8a8a"/>
<rect x="609" y="181" width="5" height="1" fill="#dadada"/>
<text x="608" y="186.6" font-size="14" fill="#d8d8d8" text-anchor="end">5</text>
<rect x="614" y="232" width="140" height="1" fill="#8a8a8a"/>
<rect x="609" y="232" width="5" height="1" fill="#dadada"/>
<text x="608" y="237.6" font-size="14" fill="#d8d8d8" text-anchor="end">0</text>
<rect x="614" y="283" width="140" height="1" fill="#8a8a8a"/>
<rect x="609" y="283" width="5" height="1" fill="#dadada"/>
<text x="608" y="288.6" font-size="14" fill="#d8d8d8" text-anchor="end">-5</text>
<rect x="614" y="334" width="140" height="1" fill="#8a8a8a"/>
<rect x="609" y="334" width="5" height="1" fill="#dadada"/>
<text x="608" y="339.6" font-size="14" fill="#d8d8d8" text-anchor="end">-10</text>
<rect x="614" y="384" width="140" height="1" fill="#8a8a8a"/>
<rect x="609" y="384" width="5" height="1" fill="#dadada"/>
<text x="608" y="391" font-size="14" fill="#d8d8d8" text-anchor="end">-15</text>
<rect x="614" y="78" width="141" height="1" fill="#8e8e8e"/>
<rect x="614" y="78" width="1" height="307" fill="#8e8e8e"/>
<rect x="754" y="78" width="1" height="307" fill="#8e8e8e"/>
<rect x="614" y="385" width="141" height="1" fill="#8e8e8e"/>
<rect x="614" y="386" width="1" height="4.5" fill="#dadada"/>
<rect x="754" y="386" width="1" height="4.5" fill="#dadada"/>
<text x="684.5" y="400" font-size="14.2" fill="#d8d8d8" text-anchor="middle">100W</text>
<rect x="629.5" y="159.5" width="110" height="73" fill="url(#g12)" stroke="#000" stroke-width="1"/>
<text x="862.5" y="73.2" font-size="13.6" fill="#d8d8d8" text-anchor="middle">DeltaH</text>
<rect x="805" y="78" width="141" height="308" fill="#262626"/>
<rect x="805" y="79" width="140" height="1" fill="#8a8a8a"/>
<rect x="800" y="79" width="5" height="1" fill="#dadada"/>
<text x="799" y="84.6" font-size="14" fill="#d8d8d8" text-anchor="end">15</text>
<rect x="805" y="130" width="140" height="1" fill="#8a8a8a"/>
<rect x="800" y="130" width="5" height="1" fill="#dadada"/>
<text x="799" y="135.6" font-size="14" fill="#d8d8d8" text-anchor="end">10</text>
<rect x="805" y="181" width="140" height="1" fill="#8a8a8a"/>
<rect x="800" y="181" width="5" height="1" fill="#dadada"/>
<text x="799" y="186.6" font-size="14" fill="#d8d8d8" text-anchor="end">5</text>
<rect x="805" y="232" width="140" height="1" fill="#8a8a8a"/>
<rect x="800" y="232" width="5" height="1" fill="#dadada"/>
<text x="799" y="237.6" font-size="14" fill="#d8d8d8" text-anchor="end">0</text>
<rect x="805" y="283" width="140" height="1" fill="#8a8a8a"/>
<rect x="800" y="283" width="5" height="1" fill="#dadada"/>
<text x="799" y="288.6" font-size="14" fill="#d8d8d8" text-anchor="end">-5</text>
<rect x="805" y="334" width="140" height="1" fill="#8a8a8a"/>
<rect x="800" y="334" width="5" height="1" fill="#dadada"/>
<text x="799" y="339.6" font-size="14" fill="#d8d8d8" text-anchor="end">-10</text>
<rect x="805" y="384" width="140" height="1" fill="#8a8a8a"/>
<rect x="800" y="384" width="5" height="1" fill="#dadada"/>
<text x="799" y="391" font-size="14" fill="#d8d8d8" text-anchor="end">-15</text>
<rect x="805" y="78" width="141" height="1" fill="#8e8e8e"/>
<rect x="805" y="78" width="1" height="307" fill="#8e8e8e"/>
<rect x="945" y="78" width="1" height="307" fill="#8e8e8e"/>
<rect x="805" y="385" width="141" height="1" fill="#8e8e8e"/>
<rect x="805" y="386" width="1" height="4.5" fill="#dadada"/>
<rect x="945" y="386" width="1" height="4.5" fill="#dadada"/>
<text x="875.5" y="400" font-size="14.2" fill="#d8d8d8" text-anchor="middle">100W</text>
<rect x="819" y="232" width="112" height="1" fill="#1a1a1a"/>
<rect x="392" y="416.5" width="572" height="157.5" fill="#000"/>
<rect x="409.5" y="423.5" width="59" height="64.5" fill="#b8c0cc"/>
<rect x="409.5" y="488" width="59" height="63.5" fill="#c0c0c0"/>
<rect x="409.5" y="423.5" width="59" height="128" fill="none" stroke="#f4f4f4" stroke-width="1"/>
<text x="439" y="566" font-size="12" fill="#f4f4f4" text-anchor="middle" stroke="#f4f4f4" stroke-width="0.4">White</text>
<rect x="479.35" y="423.5" width="59" height="64.5" fill="#b8001f"/>
<rect x="479.35" y="488" width="59" height="63.5" fill="#bb2a2a"/>
<rect x="479.35" y="423.5" width="59" height="128" fill="none" stroke="#f4f4f4" stroke-width="1"/>
<text x="508.85" y="566" font-size="12" fill="#f4f4f4" text-anchor="middle" stroke="#f4f4f4" stroke-width="0.4">Red</text>
<rect x="549.2" y="423.5" width="59" height="64.5" fill="#00c245"/>
<rect x="549.2" y="488" width="59" height="63.5" fill="#66c475"/>
<rect x="549.2" y="423.5" width="59" height="128" fill="none" stroke="#f4f4f4" stroke-width="1"/>
<text x="578.7" y="566" font-size="12" fill="#f4f4f4" text-anchor="middle" stroke="#f4f4f4" stroke-width="0.4">Green</text>
<rect x="619.05" y="423.5" width="59" height="64.5" fill="#3f00cc"/>
<rect x="619.05" y="488" width="59" height="63.5" fill="#2828bb"/>
<rect x="619.05" y="423.5" width="59" height="128" fill="none" stroke="#f4f4f4" stroke-width="1"/>
<text x="648.55" y="566" font-size="12" fill="#f4f4f4" text-anchor="middle" stroke="#f4f4f4" stroke-width="0.4">Blue</text>
<rect x="688.9" y="423.5" width="59" height="64.5" fill="#00c2cc"/>
<rect x="688.9" y="488" width="59" height="63.5" fill="#56c2c4"/>
<rect x="688.9" y="423.5" width="59" height="128" fill="none" stroke="#f4f4f4" stroke-width="1"/>
<text x="718.4" y="566" font-size="12" fill="#f4f4f4" text-anchor="middle" stroke="#f4f4f4" stroke-width="0.4">Cyan</text>
<rect x="758.75" y="423.5" width="59" height="64.5" fill="#c400d0"/>
<rect x="758.75" y="488" width="59" height="63.5" fill="#c03cc0"/>
<rect x="758.75" y="423.5" width="59" height="128" fill="none" stroke="#f4f4f4" stroke-width="1"/>
<text x="788.25" y="566" font-size="12" fill="#f4f4f4" text-anchor="middle" stroke="#f4f4f4" stroke-width="0.4">Magenta</text>
<rect x="828.6" y="423.5" width="59" height="64.5" fill="#b4c200"/>
<rect x="828.6" y="488" width="59" height="63.5" fill="#c2c058"/>
<rect x="828.6" y="423.5" width="59" height="128" fill="none" stroke="#f4f4f4" stroke-width="1"/>
<text x="858.1" y="566" font-size="12" fill="#f4f4f4" text-anchor="middle" stroke="#f4f4f4" stroke-width="0.4">Yellow</text>
<rect x="898.45" y="423.5" width="59" height="64.5" fill="#eaf2ff"/>
<rect x="898.45" y="488" width="59" height="63.5" fill="#f2f2f2"/>
<rect x="898.45" y="423.5" width="59" height="128" fill="none" stroke="#f4f4f4" stroke-width="1"/>
<text x="927.95" y="566" font-size="12" fill="#f4f4f4" text-anchor="middle" stroke="#f4f4f4" stroke-width="0.4">100W</text>
<text transform="translate(404.5,468) rotate(-90)" font-size="11.6" stroke="#f4f4f4" stroke-width="0.4" fill="#f4f4f4">Actual</text>
<text transform="translate(404.5,540.5) rotate(-90)" font-size="11.6" stroke="#f4f4f4" stroke-width="0.4" fill="#f4f4f4">Target</text>
<rect x="971" y="48" width="671" height="539.5" fill="#1b1b1b"/>
<rect x="977" y="54" width="659" height="526" fill="#333333"/>
<text x="1306" y="71.5" font-size="13.6" fill="#d8d8d8" text-anchor="middle" textLength="82" lengthAdjust="spacingAndGlyphs">CIE 1976 u'v'</text>
<rect x="1013" y="76" width="620" height="478" fill="#262626"/>
<g clip-path="url(#cpr)">
<path d="M1217.36 181.96L1678.13 177.74L1676.22 224.13L1669.53 270.68z" fill="url(#w3)"/>
<path d="M1217.36 181.96L1624.72 242.66L1616.54 283.34L1604.13 323.5z" fill="url(#w9)"/>
<path d="M1217.36 181.96L1580.54 296.3L1567.19 332.26L1550.05 367.14z" fill="url(#w15)"/>
<path d="M1217.36 181.96L1541.61 343.45L1523.71 375.25L1502.41 405.47z" fill="url(#w21)"/>
<path d="M1217.36 181.96L1505.33 387.18L1483.22 415.12L1458.07 441z" fill="url(#w27)"/>
<path d="M1217.36 181.96L1470.95 430.94L1444.61 455.2L1415.58 476.94z" fill="url(#w33)"/>
<path d="M1217.36 181.96L1435.78 476.87L1405 497.35L1371.88 514.83z" fill="url(#w39)"/>
<path d="M1217.36 181.96L1397.2 527.05L1361.56 543.4L1323.97 556.21z" fill="url(#w45)"/>
<path d="M1217.36 181.96L1352.45 585.12L1311.2 596.67L1268.44 604.08z" fill="url(#w51)"/>
<path d="M1217.36 181.96L1283.84 578.17L1243.64 582.85L1202.64 583.44z" fill="url(#w57)"/>
<path d="M1217.36 181.96L1220.55 529.39L1185.57 527.94L1150.47 522.9z" fill="url(#w63)"/>
<path d="M1217.36 181.96L1172.66 481.95L1142.7 475.93L1113.13 466.79z" fill="url(#w69)"/>
<path d="M1217.36 181.96L1136.1 440.09L1110.54 430.6L1085.75 418.42z" fill="url(#w75)"/>
<path d="M1217.36 181.96L1107.1 403.35L1085.38 391.14L1064.75 376.59z" fill="url(#w81)"/>
<path d="M1217.36 181.96L1082.97 370.55L1064.67 356.07L1047.72 339.6z" fill="url(#w87)"/>
<path d="M1217.36 181.96L1061.88 340.33L1046.73 323.88L1033.15 305.75z" fill="url(#w93)"/>
<path d="M1217.36 181.96L1043 311.11L1030.89 292.9L1020.55 273.32z" fill="url(#w99)"/>
<path d="M1217.36 181.96L1025.38 282.01L1016.29 262.18L1009.16 241.27z" fill="url(#w105)"/>
<path d="M1217.36 181.96L1008.25 252.03L1002.26 230.64L998.42 208.46z" fill="url(#w111)"/>
<path d="M1217.36 181.96L991.73 219.82L989.07 196.93L988.73 173.58z" fill="url(#w117)"/>
<path d="M1217.36 181.96L976.48 184.17L977.48 159.92L980.97 135.58z" fill="url(#w123)"/>
<path d="M1217.36 181.96L966.06 144.52L971.1 119.42L978.76 94.65z" fill="url(#w129)"/>
<path d="M1217.36 181.96L972.42 104.85L981.42 80.59L992.98 57.07z" fill="url(#w135)"/>
<path d="M1217.36 181.96L1017.94 82.64L1028.95 63.08L1042.05 44.5z" fill="url(#w141)"/>
<path d="M1217.36 181.96L1073.35 79.33L1084.4 65.36L1096.98 52.42z" fill="url(#w147)"/>
<path d="M1217.36 181.96L1112.57 79.07L1123.46 69.05L1135.45 60.07z" fill="url(#w153)"/>
<path d="M1217.36 181.96L1141.25 79.2L1151.98 72.06L1163.52 65.97z" fill="url(#w159)"/>
<path d="M1217.36 181.96L1163.91 79.39L1174.5 74.53L1185.67 70.72z" fill="url(#w165)"/>
<path d="M1217.36 181.96L1183.07 79.63L1193.54 76.7L1204.4 74.82z" fill="url(#w171)"/>
<path d="M1217.36 181.96L1200.25 79.96L1210.6 78.76L1221.15 78.61z" fill="url(#w177)"/>
<path d="M1217.36 181.96L1216.43 80.41L1226.66 80.83L1236.91 82.31z" fill="url(#w183)"/>
<path d="M1217.36 181.96L1232.49 80.43L1242.63 82.47L1252.64 85.56z" fill="url(#w189)"/>
<path d="M1217.36 181.96L1249.31 80.5L1259.35 84.23L1269.1 89.02z" fill="url(#w195)"/>
<path d="M1217.36 181.96L1267.8 80.69L1277.74 86.28L1287.17 92.93z" fill="url(#w201)"/>
<path d="M1217.36 181.96L1289.33 80.98L1299.12 88.73L1308.2 97.55z" fill="url(#w207)"/>
<path d="M1217.36 181.96L1316.16 81.34L1325.78 91.79L1334.41 103.31z" fill="url(#w213)"/>
<path d="M1217.36 181.96L1352.73 81.7L1362.13 95.83L1370.16 111.04z" fill="url(#w219)"/>
<path d="M1217.36 181.96L1409.18 82L1418.27 101.81L1425.39 122.7z" fill="url(#w225)"/>
<path d="M1217.36 181.96L1515.95 81.91L1524.51 112.46L1529.99 144.13z" fill="url(#w231)"/>
<path d="M1217.36 181.96L1705.51 100.06L1711.27 149.59L1712 200.1z" fill="url(#w237)"/>
<path d="M1217.36 181.96L1646.48 181.96L1646.21 197.13z" fill="url(#w0)"/>
<path d="M1217.36 181.96L1636.9 192.95L1636.25 207.77z" fill="url(#w1)"/>
<path d="M1217.36 181.96L1626.63 203.41L1625.61 217.86z" fill="url(#w2)"/>
<path d="M1217.36 181.96L1616.82 213.4L1615.45 227.5z" fill="url(#w3)"/>
<path d="M1217.36 181.96L1607.43 222.96L1605.74 236.72z" fill="url(#w4)"/>
<path d="M1217.36 181.96L1598.42 232.13L1596.41 245.56z" fill="url(#w5)"/>
<path d="M1217.36 181.96L1589.77 240.95L1587.45 254.07z" fill="url(#w6)"/>
<path d="M1217.36 181.96L1581.43 249.44L1578.82 262.26z" fill="url(#w7)"/>
<path d="M1217.36 181.96L1573.38 257.64L1570.49 270.17z" fill="url(#w8)"/>
<path d="M1217.36 181.96L1565.6 265.57L1562.43 277.82z" fill="url(#w9)"/>
<path d="M1217.36 181.96L1558.05 273.25L1554.61 285.23z" fill="url(#w10)"/>
<path d="M1217.36 181.96L1550.73 280.71L1547.03 292.43z" fill="url(#w11)"/>
<path d="M1217.36 181.96L1543.6 287.96L1539.65 299.43z" fill="url(#w12)"/>
<path d="M1217.36 181.96L1536.66 295.03L1532.46 306.24z" fill="url(#w13)"/>
<path d="M1217.36 181.96L1529.88 301.93L1525.44 312.89z" fill="url(#w14)"/>
<path d="M1217.36 181.96L1523.25 308.66L1518.58 319.39z" fill="url(#w15)"/>
<path d="M1217.36 181.96L1516.76 315.26L1511.86 325.76z" fill="url(#w16)"/>
<path d="M1217.36 181.96L1510.39 321.73L1505.27 332z" fill="url(#w17)"/>
<path d="M1217.36 181.96L1504.13 328.08L1498.79 338.12z" fill="url(#w18)"/>
<path d="M1217.36 181.96L1497.98 334.33L1492.42 344.15z" fill="url(#w19)"/>
<path d="M1217.36 181.96L1491.91 340.48L1486.14 350.08z" fill="url(#w20)"/>
<path d="M1217.36 181.96L1485.93 346.54L1479.95 355.93z" fill="url(#w21)"/>
<path d="M1217.36 181.96L1480.01 352.53L1473.82 361.7z" fill="url(#w22)"/>
<path d="M1217.36 181.96L1474.16 358.45L1467.76 367.42z" fill="url(#w23)"/>
<path d="M1217.36 181.96L1468.36 364.32L1461.76 373.08z" fill="url(#w24)"/>
<path d="M1217.36 181.96L1462.6 370.14L1455.8 378.69z" fill="url(#w25)"/>
<path d="M1217.36 181.96L1456.88 375.92L1449.87 384.26z" fill="url(#w26)"/>
<path d="M1217.36 181.96L1451.18 381.66L1443.98 389.8z" fill="url(#w27)"/>
<path d="M1217.36 181.96L1445.5 387.38L1438.1 395.31z" fill="url(#w28)"/>
<path d="M1217.36 181.96L1439.84 393.08L1432.24 400.81z" fill="url(#w29)"/>
<path d="M1217.36 181.96L1434.42 399.02L1426.61 406.55z" fill="url(#w30)"/>
<path d="M1217.36 181.96L1428.99 404.97L1420.98 412.31z" fill="url(#w31)"/>
<path d="M1217.36 181.96L1423.54 410.95L1415.32 418.09z" fill="url(#w32)"/>
<path d="M1217.36 181.96L1418.06 416.95L1409.63 423.9z" fill="url(#w33)"/>
<path d="M1217.36 181.96L1412.54 422.99L1403.9 429.74z" fill="url(#w34)"/>
<path d="M1217.36 181.96L1406.98 429.08L1398.13 435.62z" fill="url(#w35)"/>
<path d="M1217.36 181.96L1401.36 435.22L1392.3 441.56z" fill="url(#w36)"/>
<path d="M1217.36 181.96L1395.68 441.42L1386.4 447.56z" fill="url(#w37)"/>
<path d="M1217.36 181.96L1389.93 447.69L1380.43 453.63z" fill="url(#w38)"/>
<path d="M1217.36 181.96L1384.1 454.05L1374.38 459.77z" fill="url(#w39)"/>
<path d="M1217.36 181.96L1378.18 460.5L1368.24 466.01z" fill="url(#w40)"/>
<path d="M1217.36 181.96L1372.16 467.06L1361.99 472.35z" fill="url(#w41)"/>
<path d="M1217.36 181.96L1366.03 473.74L1355.63 478.81z" fill="url(#w42)"/>
<path d="M1217.36 181.96L1359.78 480.54L1349.14 485.38z" fill="url(#w43)"/>
<path d="M1217.36 181.96L1353.39 487.48L1342.51 492.1z" fill="url(#w44)"/>
<path d="M1217.36 181.96L1346.86 494.59L1335.73 498.97z" fill="url(#w45)"/>
<path d="M1217.36 181.96L1340.16 501.86L1328.78 506z" fill="url(#w46)"/>
<path d="M1217.36 181.96L1333.29 509.33L1321.65 513.22z" fill="url(#w47)"/>
<path d="M1217.36 181.96L1326.22 517L1314.32 520.64z" fill="url(#w48)"/>
<path d="M1217.36 181.96L1318.95 524.9L1306.76 528.28z" fill="url(#w49)"/>
<path d="M1217.36 181.96L1311.44 533.05L1298.97 536.16z" fill="url(#w50)"/>
<path d="M1217.36 181.96L1303.68 541.48L1290.92 544.31z" fill="url(#w51)"/>
<path d="M1217.36 181.96L1295.63 550.19L1282.57 552.73z" fill="url(#w52)"/>
<path d="M1217.36 181.96L1286.1 552.82L1272.95 555.02z" fill="url(#w53)"/>
<path d="M1217.36 181.96L1276.39 554.64L1263.18 556.5z" fill="url(#w54)"/>
<path d="M1217.36 181.96L1265.54 547.92L1252.58 549.39z" fill="url(#w55)"/>
<path d="M1217.36 181.96L1254.9 539.07L1242.25 540.17z" fill="url(#w56)"/>
<path d="M1217.36 181.96L1244.77 530.23L1232.45 530.98z" fill="url(#w57)"/>
<path d="M1217.36 181.96L1235.18 521.99L1223.16 522.41z" fill="url(#w58)"/>
<path d="M1217.36 181.96L1226.06 513.96L1214.32 514.06z" fill="url(#w59)"/>
<path d="M1217.36 181.96L1217.36 506.12L1205.91 505.91z" fill="url(#w60)"/>
<path d="M1217.36 181.96L1209.08 498.32L1197.91 497.83z" fill="url(#w61)"/>
<path d="M1217.36 181.96L1201.18 490.68L1190.29 489.91z" fill="url(#w62)"/>
<path d="M1217.36 181.96L1193.66 483.15L1183.03 482.13z" fill="url(#w63)"/>
<path d="M1217.36 181.96L1186.51 475.55L1176.15 474.27z" fill="url(#w64)"/>
<path d="M1217.36 181.96L1179.71 467.95L1169.63 466.44z" fill="url(#w65)"/>
<path d="M1217.36 181.96L1173.28 460.31L1163.47 458.58z" fill="url(#w66)"/>
<path d="M1217.36 181.96L1167.16 452.84L1157.62 450.9z" fill="url(#w67)"/>
<path d="M1217.36 181.96L1161.34 445.52L1152.06 443.37z" fill="url(#w68)"/>
<path d="M1217.36 181.96L1155.79 438.41L1146.77 436.08z" fill="url(#w69)"/>
<path d="M1217.36 181.96L1150.49 431.52L1141.72 429z" fill="url(#w70)"/>
<path d="M1217.36 181.96L1145.42 424.85L1136.88 422.15z" fill="url(#w71)"/>
<path d="M1217.36 181.96L1140.6 418.21L1132.3 415.35z" fill="url(#w72)"/>
<path d="M1217.36 181.96L1135.97 411.81L1127.9 408.79z" fill="url(#w73)"/>
<path d="M1217.36 181.96L1131.54 405.55L1123.69 402.37z" fill="url(#w74)"/>
<path d="M1217.36 181.96L1127.31 399.36L1119.69 396.05z" fill="url(#w75)"/>
<path d="M1217.36 181.96L1123.23 393.39L1115.82 389.93z" fill="url(#w76)"/>
<path d="M1217.36 181.96L1119.29 387.58L1112.09 383.98z" fill="url(#w77)"/>
<path d="M1217.36 181.96L1115.55 381.78L1108.55 378.06z" fill="url(#w78)"/>
<path d="M1217.36 181.96L1111.92 376.16L1105.13 372.31z" fill="url(#w79)"/>
<path d="M1217.36 181.96L1108.4 370.7L1101.8 366.73z" fill="url(#w80)"/>
<path d="M1217.36 181.96L1104.99 365.34L1098.58 361.25z" fill="url(#w81)"/>
<path d="M1217.36 181.96L1101.72 360.04L1095.5 355.84z" fill="url(#w82)"/>
<path d="M1217.36 181.96L1098.53 354.86L1092.5 350.55z" fill="url(#w83)"/>
<path d="M1217.36 181.96L1095.42 349.8L1089.57 345.39z" fill="url(#w84)"/>
<path d="M1217.36 181.96L1092.38 344.85L1086.7 340.33z" fill="url(#w85)"/>
<path d="M1217.36 181.96L1089.45 339.92L1083.95 335.31z" fill="url(#w86)"/>
<path d="M1217.36 181.96L1086.58 335.09L1081.25 330.37z" fill="url(#w87)"/>
<path d="M1217.36 181.96L1083.77 330.33L1078.61 325.52z" fill="url(#w88)"/>
<path d="M1217.36 181.96L1081.01 325.65L1076.01 320.74z" fill="url(#w89)"/>
<path d="M1217.36 181.96L1078.28 321.04L1073.46 316.04z" fill="url(#w90)"/>
<path d="M1217.36 181.96L1075.69 316.4L1071.03 311.31z" fill="url(#w91)"/>
<path d="M1217.36 181.96L1073.14 311.82L1068.64 306.65z" fill="url(#w92)"/>
<path d="M1217.36 181.96L1070.62 307.3L1066.28 302.03z" fill="url(#w93)"/>
<path d="M1217.36 181.96L1068.12 302.82L1063.94 297.47z" fill="url(#w94)"/>
<path d="M1217.36 181.96L1065.65 298.37L1061.64 292.94z" fill="url(#w95)"/>
<path d="M1217.36 181.96L1063.3 293.89L1059.44 288.38z" fill="url(#w96)"/>
<path d="M1217.36 181.96L1061.01 289.42L1057.31 283.83z" fill="url(#w97)"/>
<path d="M1217.36 181.96L1058.74 284.97L1055.2 279.3z" fill="url(#w98)"/>
<path d="M1217.36 181.96L1056.49 280.55L1053.1 274.8z" fill="url(#w99)"/>
<path d="M1217.36 181.96L1054.24 276.14L1051.02 270.32z" fill="url(#w100)"/>
<path d="M1217.36 181.96L1052.06 271.72L1048.99 265.82z" fill="url(#w101)"/>
<path d="M1217.36 181.96L1049.98 267.25L1047.08 261.28z" fill="url(#w102)"/>
<path d="M1217.36 181.96L1047.85 262.82L1045.1 256.78z" fill="url(#w103)"/>
<path d="M1217.36 181.96L1045.59 258.44L1043 252.32z" fill="url(#w104)"/>
<path d="M1217.36 181.96L1043.45 254L1041.01 247.81z" fill="url(#w105)"/>
<path d="M1217.36 181.96L1041.32 249.54L1039.04 243.28z" fill="url(#w106)"/>
<path d="M1217.36 181.96L1039.19 245.06L1037.07 238.72z" fill="url(#w107)"/>
<path d="M1217.36 181.96L1037.05 240.55L1035.09 234.14z" fill="url(#w108)"/>
<path d="M1217.36 181.96L1034.9 236.01L1033.1 229.53z" fill="url(#w109)"/>
<path d="M1217.36 181.96L1032.9 231.39L1031.27 224.84z" fill="url(#w110)"/>
<path d="M1217.36 181.96L1030.89 226.73L1029.42 220.11z" fill="url(#w111)"/>
<path d="M1217.36 181.96L1028.86 222.03L1027.57 215.34z" fill="url(#w112)"/>
<path d="M1217.36 181.96L1026.82 217.28L1025.69 210.52z" fill="url(#w113)"/>
<path d="M1217.36 181.96L1024.86 212.45L1023.9 205.63z" fill="url(#w114)"/>
<path d="M1217.36 181.96L1022.94 207.56L1022.16 200.67z" fill="url(#w115)"/>
<path d="M1217.36 181.96L1021 202.6L1020.39 195.65z" fill="url(#w116)"/>
<path d="M1217.36 181.96L1019.03 197.57L1018.61 190.55z" fill="url(#w117)"/>
<path d="M1217.36 181.96L1017.21 192.45L1016.97 185.37z" fill="url(#w118)"/>
<path d="M1217.36 181.96L1015.4 187.25L1015.34 180.11z" fill="url(#w119)"/>
<path d="M1217.36 181.96L1013.55 181.96L1013.68 174.76z" fill="url(#w120)"/>
<path d="M1217.36 181.96L1011.85 176.58L1012.17 169.32z" fill="url(#w121)"/>
<path d="M1217.36 181.96L1010.21 171.11L1010.72 163.79z" fill="url(#w122)"/>
<path d="M1217.36 181.96L1008.53 165.53L1009.24 158.16z" fill="url(#w123)"/>
<path d="M1217.36 181.96L1007.14 159.87L1008.05 152.45z" fill="url(#w124)"/>
<path d="M1217.36 181.96L1005.73 154.1L1006.84 146.64z" fill="url(#w125)"/>
<path d="M1217.36 181.96L1004.6 148.26L1005.93 140.77z" fill="url(#w126)"/>
<path d="M1217.36 181.96L1003.56 142.34L1005.1 134.81z" fill="url(#w127)"/>
<path d="M1217.36 181.96L1002.94 136.39L1004.68 128.84z" fill="url(#w128)"/>
<path d="M1217.36 181.96L1002.53 130.39L1004.49 122.83z" fill="url(#w129)"/>
<path d="M1217.36 181.96L1002.59 124.41L1004.75 116.86z" fill="url(#w130)"/>
<path d="M1217.36 181.96L1003.25 118.54L1005.62 111.01z" fill="url(#w131)"/>
<path d="M1217.36 181.96L1004.55 112.81L1007.12 105.34z" fill="url(#w132)"/>
<path d="M1217.36 181.96L1006.41 107.26L1009.18 99.85z" fill="url(#w133)"/>
<path d="M1217.36 181.96L1008.41 101.75L1011.37 94.42z" fill="url(#w134)"/>
<path d="M1217.36 181.96L1011.06 96.51L1014.21 89.27z" fill="url(#w135)"/>
<path d="M1217.36 181.96L1014.72 91.74L1018.03 84.63z" fill="url(#w136)"/>
<path d="M1217.36 181.96L1019.59 87.63L1023.05 80.7z" fill="url(#w137)"/>
<path d="M1217.36 181.96L1026.06 84.49L1029.62 77.79z" fill="url(#w138)"/>
<path d="M1217.36 181.96L1033.91 82.36L1037.55 75.94z" fill="url(#w139)"/>
<path d="M1217.36 181.96L1042.91 81.24L1046.58 75.14z" fill="url(#w140)"/>
<path d="M1217.36 181.96L1052.18 80.74L1055.86 74.97z" fill="url(#w141)"/>
<path d="M1217.36 181.96L1061.3 80.62L1064.98 75.16z" fill="url(#w142)"/>
<path d="M1217.36 181.96L1069.98 80.67L1073.65 75.53z" fill="url(#w143)"/>
<path d="M1217.36 181.96L1078.26 80.9L1081.92 76.05z" fill="url(#w144)"/>
<path d="M1217.36 181.96L1086.09 81.24L1089.73 76.66z" fill="url(#w145)"/>
<path d="M1217.36 181.96L1093.48 81.64L1097.1 77.33z" fill="url(#w146)"/>
<path d="M1217.36 181.96L1100.43 82.09L1104.03 78.02z" fill="url(#w147)"/>
<path d="M1217.36 181.96L1106.97 82.56L1110.55 78.72z" fill="url(#w148)"/>
<path d="M1217.36 181.96L1113.12 83.04L1116.68 79.42z" fill="url(#w149)"/>
<path d="M1217.36 181.96L1118.91 83.51L1122.45 80.09z" fill="url(#w150)"/>
<path d="M1217.36 181.96L1124.37 83.97L1127.89 80.75z" fill="url(#w151)"/>
<path d="M1217.36 181.96L1129.54 84.42L1133.04 81.38z" fill="url(#w152)"/>
<path d="M1217.36 181.96L1134.43 84.86L1137.91 81.99z" fill="url(#w153)"/>
<path d="M1217.36 181.96L1139.07 85.28L1142.53 82.57z" fill="url(#w154)"/>
<path d="M1217.36 181.96L1143.48 85.68L1146.93 83.13z" fill="url(#w155)"/>
<path d="M1217.36 181.96L1147.69 86.07L1151.12 83.67z" fill="url(#w156)"/>
<path d="M1217.36 181.96L1151.71 86.44L1155.13 84.18z" fill="url(#w157)"/>
<path d="M1217.36 181.96L1155.57 86.8L1158.97 84.68z" fill="url(#w158)"/>
<path d="M1217.36 181.96L1159.26 87.15L1162.65 85.16z" fill="url(#w159)"/>
<path d="M1217.36 181.96L1162.82 87.49L1166.19 85.62z" fill="url(#w160)"/>
<path d="M1217.36 181.96L1166.25 87.82L1169.6 86.07z" fill="url(#w161)"/>
<path d="M1217.36 181.96L1169.55 88.13L1172.9 86.5z" fill="url(#w162)"/>
<path d="M1217.36 181.96L1172.76 88.44L1176.09 86.93z" fill="url(#w163)"/>
<path d="M1217.36 181.96L1175.86 88.75L1179.18 87.34z" fill="url(#w164)"/>
<path d="M1217.36 181.96L1178.87 89.04L1182.18 87.74z" fill="url(#w165)"/>
<path d="M1217.36 181.96L1181.8 89.33L1185.1 88.13z" fill="url(#w166)"/>
<path d="M1217.36 181.96L1184.66 89.61L1187.94 88.52z" fill="url(#w167)"/>
<path d="M1217.36 181.96L1187.45 89.89L1190.72 88.89z" fill="url(#w168)"/>
<path d="M1217.36 181.96L1190.17 90.17L1193.43 89.26z" fill="url(#w169)"/>
<path d="M1217.36 181.96L1192.84 90.44L1196.09 89.63z" fill="url(#w170)"/>
<path d="M1217.36 181.96L1195.45 90.71L1198.69 89.99z" fill="url(#w171)"/>
<path d="M1217.36 181.96L1198.02 90.98L1201.25 90.35z" fill="url(#w172)"/>
<path d="M1217.36 181.96L1200.55 91.24L1203.77 90.71z" fill="url(#w173)"/>
<path d="M1217.36 181.96L1203.04 91.51L1206.24 91.06z" fill="url(#w174)"/>
<path d="M1217.36 181.96L1205.49 91.77L1208.68 91.41z" fill="url(#w175)"/>
<path d="M1217.36 181.96L1207.91 92.04L1211.09 91.76z" fill="url(#w176)"/>
<path d="M1217.36 181.96L1210.31 92.3L1213.48 92.11z" fill="url(#w177)"/>
<path d="M1217.36 181.96L1212.68 92.57L1215.84 92.46z" fill="url(#w178)"/>
<path d="M1217.36 181.96L1215.03 92.84L1218.18 92.81z" fill="url(#w179)"/>
<path d="M1217.36 181.96L1217.36 93.11L1220.5 93.16z" fill="url(#w180)"/>
<path d="M1217.36 181.96L1219.68 93.38L1222.81 93.52z" fill="url(#w181)"/>
<path d="M1217.36 181.96L1221.99 93.65L1225.11 93.87z" fill="url(#w182)"/>
<path d="M1217.36 181.96L1224.29 93.93L1227.4 94.23z" fill="url(#w183)"/>
<path d="M1217.36 181.96L1226.59 94.19L1229.68 94.57z" fill="url(#w184)"/>
<path d="M1217.36 181.96L1228.89 94.38L1231.98 94.84z" fill="url(#w185)"/>
<path d="M1217.36 181.96L1231.2 94.57L1234.28 95.11z" fill="url(#w186)"/>
<path d="M1217.36 181.96L1233.52 94.76L1236.6 95.39z" fill="url(#w187)"/>
<path d="M1217.36 181.96L1235.86 94.96L1238.92 95.67z" fill="url(#w188)"/>
<path d="M1217.36 181.96L1238.2 95.17L1241.25 95.96z" fill="url(#w189)"/>
<path d="M1217.36 181.96L1240.56 95.38L1243.61 96.25z" fill="url(#w190)"/>
<path d="M1217.36 181.96L1242.95 95.59L1245.98 96.55z" fill="url(#w191)"/>
<path d="M1217.36 181.96L1245.36 95.81L1248.38 96.85z" fill="url(#w192)"/>
<path d="M1217.36 181.96L1247.79 96.04L1250.81 97.16z" fill="url(#w193)"/>
<path d="M1217.36 181.96L1250.26 96.27L1253.27 97.48z" fill="url(#w194)"/>
<path d="M1217.36 181.96L1252.76 96.5L1255.76 97.81z" fill="url(#w195)"/>
<path d="M1217.36 181.96L1255.3 96.75L1258.29 98.14z" fill="url(#w196)"/>
<path d="M1217.36 181.96L1257.89 97L1260.87 98.48z" fill="url(#w197)"/>
<path d="M1217.36 181.96L1260.52 97.26L1263.49 98.83z" fill="url(#w198)"/>
<path d="M1217.36 181.96L1263.21 97.52L1266.17 99.2z" fill="url(#w199)"/>
<path d="M1217.36 181.96L1265.96 97.8L1268.9 99.57z" fill="url(#w200)"/>
<path d="M1217.36 181.96L1268.77 98.08L1271.7 99.95z" fill="url(#w201)"/>
<path d="M1217.36 181.96L1271.65 98.37L1274.57 100.34z" fill="url(#w202)"/>
<path d="M1217.36 181.96L1274.61 98.67L1277.52 100.74z" fill="url(#w203)"/>
<path d="M1217.36 181.96L1277.65 98.98L1280.55 101.16z" fill="url(#w204)"/>
<path d="M1217.36 181.96L1280.79 99.3L1283.68 101.59z" fill="url(#w205)"/>
<path d="M1217.36 181.96L1284.04 99.63L1286.9 102.04z" fill="url(#w206)"/>
<path d="M1217.36 181.96L1287.39 99.97L1290.24 102.5z" fill="url(#w207)"/>
<path d="M1217.36 181.96L1290.87 100.33L1293.71 102.97z" fill="url(#w208)"/>
<path d="M1217.36 181.96L1294.48 100.69L1297.31 103.47z" fill="url(#w209)"/>
<path d="M1217.36 181.96L1298.25 101.08L1301.06 103.99z" fill="url(#w210)"/>
<path d="M1217.36 181.96L1302.18 101.48L1304.97 104.52z" fill="url(#w211)"/>
<path d="M1217.36 181.96L1306.29 101.89L1309.07 105.08z" fill="url(#w212)"/>
<path d="M1217.36 181.96L1310.61 102.32L1313.36 105.67z" fill="url(#w213)"/>
<path d="M1217.36 181.96L1315.15 102.78L1317.88 106.28z" fill="url(#w214)"/>
<path d="M1217.36 181.96L1319.94 103.25L1322.66 106.93z" fill="url(#w215)"/>
<path d="M1217.36 181.96L1325.01 103.75L1327.7 107.61z" fill="url(#w216)"/>
<path d="M1217.36 181.96L1330.39 104.28L1333.07 108.32z" fill="url(#w217)"/>
<path d="M1217.36 181.96L1336.13 104.84L1338.78 109.08z" fill="url(#w218)"/>
<path d="M1217.36 181.96L1342.26 105.43L1344.88 109.89z" fill="url(#w219)"/>
<path d="M1217.36 181.96L1348.84 106.06L1351.44 110.75z" fill="url(#w220)"/>
<path d="M1217.36 181.96L1355.93 106.73L1358.5 111.67z" fill="url(#w221)"/>
<path d="M1217.36 181.96L1363.61 107.45L1366.15 112.66z" fill="url(#w222)"/>
<path d="M1217.36 181.96L1371.96 108.22L1374.47 113.73z" fill="url(#w223)"/>
<path d="M1217.36 181.96L1381.09 109.07L1383.56 114.9z" fill="url(#w224)"/>
<path d="M1217.36 181.96L1391.14 109.98L1393.57 116.17z" fill="url(#w225)"/>
<path d="M1217.36 181.96L1402.26 110.99L1404.65 117.56z" fill="url(#w226)"/>
<path d="M1217.36 181.96L1414.67 112.09L1417.02 119.11z" fill="url(#w227)"/>
<path d="M1217.36 181.96L1428.63 113.32L1430.92 120.83z" fill="url(#w228)"/>
<path d="M1217.36 181.96L1444.46 114.69L1446.69 122.76z" fill="url(#w229)"/>
<path d="M1217.36 181.96L1462.59 116.25L1464.76 124.96z" fill="url(#w230)"/>
<path d="M1217.36 181.96L1483.63 118.04L1485.72 127.49z" fill="url(#w231)"/>
<path d="M1217.36 181.96L1508.36 120.11L1510.37 130.43z" fill="url(#w232)"/>
<path d="M1217.36 181.96L1537.81 122.57L1539.71 133.93z" fill="url(#w233)"/>
<path d="M1217.36 181.96L1573.62 125.54L1575.39 138.16z" fill="url(#w234)"/>
<path d="M1217.36 181.96L1618.18 129.19L1619.79 143.39z" fill="url(#w235)"/>
<path d="M1217.36 181.96L1645.41 136.97L1646.73 152.13z" fill="url(#w236)"/>
<path d="M1217.36 181.96L1646.44 148.19L1647.37 163.38z" fill="url(#w237)"/>
<path d="M1217.36 181.96L1646.67 159.46L1647.2 174.65z" fill="url(#w238)"/>
<path d="M1217.36 181.96L1646.58 170.72L1646.71 185.9z" fill="url(#w239)"/>
<path d="M900 0H1700V700H900zM1478.08 138.71L1142.28 107.31L1194.28 428.04z" fill="#000" fill-opacity="0.4" fill-rule="evenodd"/>
<path d="M900 0H1700V700H900zM1267.11 535.27L1265.23 533.79L1263.11 532.09L1260.79 530.15L1258.23 527.95L1255.43 525.55L1252.41 522.89L1249.06 519.97L1245.3 516.73L1241.11 513.15L1236.54 509.25L1231.67 504.97L1226.43 500.33L1220.72 495.19L1214.53 489.43L1207.91 483.05L1200.74 476.12L1192.97 468.11L1184.19 458.36L1174.18 446.47L1163.15 432.59L1151.29 417.16L1138.82 399.94L1125.81 380.87L1112.47 360.17L1099.03 338.36L1085.72 315.93L1072.9 293.11L1061.11 270.38L1050.68 248.31L1041.5 227.25L1033.69 207.47L1027.22 189.42L1022.1 173.32L1018.27 159.15L1015.59 146.74L1014.01 135.97L1013.42 126.73L1013.73 118.7L1014.89 111.7L1016.89 105.69L1019.7 100.61L1023.2 96.46L1027.31 93.24L1031.92 90.86L1036.87 89.18L1042.11 88.08L1047.59 87.4L1053.28 86.99L1059.12 86.77L1065.01 86.68L1070.87 86.69L1076.78 86.78L1082.78 86.97L1088.89 87.23L1095.17 87.58L1101.64 88L1108.31 88.5L1115.2 89.07L1122.33 89.7L1129.73 90.4L1137.42 91.16L1145.41 91.97L1153.73 92.84L1162.39 93.77L1171.41 94.75L1180.81 95.79L1190.59 96.88L1200.78 98.02L1211.38 99.22L1222.41 100.48L1233.87 101.78L1245.77 103.15L1258.1 104.57L1270.86 106.04L1284.03 107.55L1297.6 109.11L1311.56 110.71L1325.85 112.35L1340.45 114.02L1355.31 115.73L1370.41 117.47L1385.55 119.22L1400.48 120.93L1415.1 122.61L1429.58 124.28L1444.02 125.94L1458.21 127.57L1471.84 129.13L1484.82 130.61L1497.23 132.03L1509.07 133.39L1520.29 134.68L1530.84 135.89L1540.71 137.03L1549.9 138.09L1558.46 139.07L1566.44 139.98L1573.87 140.83L1580.78 141.63L1587.3 142.37L1593.5 143.09L1599.35 143.76L1604.82 144.39L1609.92 144.98L1614.65 145.52L1619.04 146.03L1623.06 146.49L1626.66 146.9L1629.82 147.26L1632.65 147.59L1635.26 147.89L1637.63 148.16L1639.75 148.41L1641.65 148.63L1643.29 148.82L1644.66 148.97L1645.81 149.11L1646.85 149.23L1647.87 149.34L1648.8 149.45L1649.65 149.55L1650.42 149.64L1651.18 149.73L1651.96 149.82L1652.72 149.9L1653.46 149.99L1654.16 150.07L1654.73 150.14L1655.13 150.18L1655.42 150.21L1655.67 150.24L1655.89 150.27L1656.06 150.29L1656.2 150.31L1656.25 150.31L1660.5 151.2L1280.51 540.42L1279.66 541.15L1278.79 541.62L1277.89 541.83L1276.97 541.79L1276.03 541.48L1275.06 540.92z" fill="#262626" fill-rule="evenodd"/>
</g>
<rect x="1013" y="76" width="620" height="1" fill="#b6b6b6"/>
<rect x="1632" y="76" width="1" height="478" fill="#b6b6b6"/>
<rect x="1013" y="76" width="1" height="477" fill="#b6b6b6"/>
<rect x="1013" y="553" width="620" height="1" fill="#b6b6b6"/>
<rect x="1013" y="554" width="1" height="5" fill="#dadada"/>
<text x="1013.5" y="574" font-size="14" fill="#d8d8d8" text-anchor="middle">0</text>
<rect x="1008" y="553" width="5" height="1" fill="#dadada"/>
<text x="1007.5" y="560" font-size="14" fill="#d8d8d8" text-anchor="end">0</text>
<rect x="1064" y="554" width="1" height="5" fill="#dadada"/>
<text x="1064.5" y="574" font-size="14" fill="#d8d8d8" text-anchor="middle">0,05</text>
<rect x="1008" y="513" width="5" height="1" fill="#dadada"/>
<text x="1007.5" y="518" font-size="14" fill="#d8d8d8" text-anchor="end">0,05</text>
<rect x="1116" y="554" width="1" height="5" fill="#dadada"/>
<text x="1116.5" y="574" font-size="14" fill="#d8d8d8" text-anchor="middle">0,1</text>
<rect x="1008" y="473" width="5" height="1" fill="#dadada"/>
<text x="1007.5" y="478" font-size="14" fill="#d8d8d8" text-anchor="end">0,1</text>
<rect x="1168" y="554" width="1" height="5" fill="#dadada"/>
<text x="1168.5" y="574" font-size="14" fill="#d8d8d8" text-anchor="middle">0,15</text>
<rect x="1008" y="434" width="5" height="1" fill="#dadada"/>
<text x="1007.5" y="439" font-size="14" fill="#d8d8d8" text-anchor="end">0,15</text>
<rect x="1219" y="554" width="1" height="5" fill="#dadada"/>
<text x="1219.5" y="574" font-size="14" fill="#d8d8d8" text-anchor="middle">0,2</text>
<rect x="1008" y="394" width="5" height="1" fill="#dadada"/>
<text x="1007.5" y="399" font-size="14" fill="#d8d8d8" text-anchor="end">0,2</text>
<rect x="1271" y="554" width="1" height="5" fill="#dadada"/>
<text x="1271.5" y="574" font-size="14" fill="#d8d8d8" text-anchor="middle">0,25</text>
<rect x="1008" y="355" width="5" height="1" fill="#dadada"/>
<text x="1007.5" y="360" font-size="14" fill="#d8d8d8" text-anchor="end">0,25</text>
<rect x="1322" y="554" width="1" height="5" fill="#dadada"/>
<text x="1322.5" y="574" font-size="14" fill="#d8d8d8" text-anchor="middle">0,3</text>
<rect x="1008" y="315" width="5" height="1" fill="#dadada"/>
<text x="1007.5" y="320" font-size="14" fill="#d8d8d8" text-anchor="end">0,3</text>
<rect x="1374" y="554" width="1" height="5" fill="#dadada"/>
<text x="1374.5" y="574" font-size="14" fill="#d8d8d8" text-anchor="middle">0,35</text>
<rect x="1008" y="275" width="5" height="1" fill="#dadada"/>
<text x="1007.5" y="280" font-size="14" fill="#d8d8d8" text-anchor="end">0,35</text>
<rect x="1425" y="554" width="1" height="5" fill="#dadada"/>
<text x="1425.5" y="574" font-size="14" fill="#d8d8d8" text-anchor="middle">0,4</text>
<rect x="1008" y="236" width="5" height="1" fill="#dadada"/>
<text x="1007.5" y="241" font-size="14" fill="#d8d8d8" text-anchor="end">0,4</text>
<rect x="1477" y="554" width="1" height="5" fill="#dadada"/>
<text x="1477.5" y="574" font-size="14" fill="#d8d8d8" text-anchor="middle">0,45</text>
<rect x="1008" y="196" width="5" height="1" fill="#dadada"/>
<text x="1007.5" y="201" font-size="14" fill="#d8d8d8" text-anchor="end">0,45</text>
<rect x="1528" y="554" width="1" height="5" fill="#dadada"/>
<text x="1528.5" y="574" font-size="14" fill="#d8d8d8" text-anchor="middle">0,5</text>
<rect x="1008" y="156" width="5" height="1" fill="#dadada"/>
<text x="1007.5" y="161" font-size="14" fill="#d8d8d8" text-anchor="end">0,5</text>
<rect x="1580" y="554" width="1" height="5" fill="#dadada"/>
<text x="1580.5" y="574" font-size="14" fill="#d8d8d8" text-anchor="middle">0,55</text>
<rect x="1008" y="117" width="5" height="1" fill="#dadada"/>
<text x="1007.5" y="122" font-size="14" fill="#d8d8d8" text-anchor="end">0,55</text>
<rect x="1471.18" y="130.61" width="13.2" height="13.2" fill="none" stroke="#ffffff" stroke-width="1.3" stroke-opacity="0.92"/>
<rect x="1135.38" y="99.21" width="13.2" height="13.2" fill="none" stroke="#ffffff" stroke-width="1.3" stroke-opacity="0.92"/>
<rect x="1187.38" y="419.94" width="13.2" height="13.2" fill="none" stroke="#ffffff" stroke-width="1.3" stroke-opacity="0.92"/>
<rect x="1149.91" y="185.06" width="13.2" height="13.2" fill="none" stroke="#ffffff" stroke-width="1.3" stroke-opacity="0.92"/>
<rect x="1320.95" y="283.7" width="13.2" height="13.2" fill="none" stroke="#ffffff" stroke-width="1.3" stroke-opacity="0.92"/>
<rect x="1216.74" y="106.81" width="13.2" height="13.2" fill="none" stroke="#ffffff" stroke-width="1.3" stroke-opacity="0.92"/>
<circle cx="1526.97" cy="137.08" r="4.1" fill="#b40000" stroke="#000" stroke-width="0.9"/>
<circle cx="1116.81" cy="94.04" r="4.1" fill="#00aa00" stroke="#000" stroke-width="0.9"/>
<circle cx="1212.24" cy="446.69" r="4.1" fill="#0000a8" stroke="#000" stroke-width="0.9"/>
<circle cx="1144.62" cy="197.47" r="4.1" fill="#00b4b4" stroke="#000" stroke-width="0.9"/>
<circle cx="1341.37" cy="320.7" r="4.1" fill="#b400b4" stroke="#000" stroke-width="0.9"/>
<circle cx="1211.97" cy="103.66" r="4.1" fill="#b4b400" stroke="#000" stroke-width="0.9"/>
<rect x="1211.16" y="174.96" width="11.6" height="11.6" fill="none" stroke="#000" stroke-width="1.7"/>
<circle cx="1212.45" cy="187.95" r="4.2" fill="#fff" stroke="#000" stroke-width="1"/>
<rect x="1386" y="522" width="243" height="26.5" fill="#333333"/>
<text x="1387" y="542.3" font-size="20" fill="#f2f2f2" textLength="151" lengthAdjust="spacingAndGlyphs">Gamut Coverage:</text>
<text x="1547" y="542.3" font-size="20" fill="#f2f2f2" textLength="54" lengthAdjust="spacingAndGlyphs">99,7%</text>
<text x="43.5" y="650.5" font-size="27.4" fill="#f2f2f2" textLength="211" lengthAdjust="spacingAndGlyphs">Current Reading</text>
<text x="43.5" y="718.8" font-size="23" fill="#f2f2f2" textLength="98.5" lengthAdjust="spacingAndGlyphs">x: 0,2999</text>
<text x="195" y="718.8" font-size="23" fill="#f2f2f2" textLength="84.5" lengthAdjust="spacingAndGlyphs">y: 0,317</text>
<text x="43.5" y="758" font-size="23" fill="#f2f2f2" textLength="93" lengthAdjust="spacingAndGlyphs">fL: 145,9</text>
<text x="43.5" y="797" font-size="23" fill="#f2f2f2" textLength="153.5" lengthAdjust="spacingAndGlyphs">cd/m²: 499,88</text>
<text x="480" y="620" font-size="13.6" fill="#d8d8d8" text-anchor="middle" textLength="80" lengthAdjust="spacingAndGlyphs">RGB Balance</text>
<rect x="370" y="624" width="247" height="176" fill="#262626"/>
<rect x="370" y="626" width="246" height="1" fill="#8a8a8a"/>
<rect x="365" y="626" width="5" height="1" fill="#dadada"/>
<text x="365" y="630.9" font-size="14" fill="#d8d8d8" text-anchor="end">20</text>
<rect x="370" y="669" width="246" height="1" fill="#8a8a8a"/>
<rect x="365" y="669" width="5" height="1" fill="#dadada"/>
<text x="365" y="673.9" font-size="14" fill="#d8d8d8" text-anchor="end">10</text>
<rect x="370" y="712" width="246" height="1" fill="#8a8a8a"/>
<rect x="365" y="712" width="5" height="1" fill="#dadada"/>
<text x="365" y="716.9" font-size="14" fill="#d8d8d8" text-anchor="end">0</text>
<rect x="370" y="756" width="246" height="1" fill="#8a8a8a"/>
<rect x="365" y="756" width="5" height="1" fill="#dadada"/>
<text x="365" y="760.9" font-size="14" fill="#d8d8d8" text-anchor="end">-10</text>
<rect x="370" y="799" width="246" height="1" fill="#8a8a8a"/>
<rect x="365" y="799" width="5" height="1" fill="#dadada"/>
<text x="365" y="803.9" font-size="14" fill="#d8d8d8" text-anchor="end">-20</text>
<rect x="370" y="624" width="247" height="1" fill="#8e8e8e"/>
<rect x="370" y="624" width="1" height="175" fill="#8e8e8e"/>
<rect x="616" y="624" width="1" height="175" fill="#8e8e8e"/>
<rect x="370" y="799" width="247" height="1" fill="#8e8e8e"/>
<rect x="370" y="800" width="1" height="5" fill="#dadada"/>
<rect x="616" y="800" width="1" height="5" fill="#dadada"/>
<text x="493.5" y="814.6" font-size="14.2" fill="#d8d8d8" text-anchor="middle">100W</text>
<rect x="395.5" y="712.5" width="65.5" height="38.5" fill="url(#g13)" stroke="#000" stroke-width="1"/>
<rect x="461" y="707.5" width="65.5" height="5" fill="url(#g14)" stroke="#000" stroke-width="1"/>
<rect x="526.5" y="650.5" width="66.5" height="62" fill="url(#g15)" stroke="#000" stroke-width="1"/>
<text x="809.5" y="612" font-size="13.6" fill="#d8d8d8" text-anchor="middle" textLength="73" lengthAdjust="spacingAndGlyphs">CIE 1931 xy</text>
<g clip-path="url(#cps)">
<path d="M809.5 711.5L1053.49 707.03L1049.44 755.97L1035.44 803.7z" fill="url(#s3)"/>
<path d="M809.5 711.5L1070.12 790.93L1048.94 841.51L1017.6 887.36z" fill="url(#s9)"/>
<path d="M809.5 711.5L969.69 823.46L944.03 853.26L912.49 877.6z" fill="url(#s15)"/>
<path d="M809.5 711.5L904.7 837.61L877.52 854.12L847.19 864.95z" fill="url(#s21)"/>
<path d="M809.5 711.5L856.59 847.88L828.33 854.54L798.93 855.39z" fill="url(#s27)"/>
<path d="M809.5 711.5L812.17 856.91L783 854.5L754.55 846.16z" fill="url(#s33)"/>
<path d="M809.5 711.5L762.23 866.61L732.13 854L704.84 835.35z" fill="url(#s39)"/>
<path d="M809.5 711.5L691.67 880.09L660.3 853.09L634.69 819.89z" fill="url(#s45)"/>
<path d="M809.5 711.5L598.3 870.94L570.66 825.42L552.52 774.62z" fill="url(#s51)"/>
<path d="M809.5 711.5L581.38 790.27L570.23 743L568.81 693.83z" fill="url(#s57)"/>
<path d="M809.5 711.5L566.24 715.96L570.27 667.16L584.23 619.57z" fill="url(#s63)"/>
<path d="M809.5 711.5L549.65 632.3L570.77 581.88L602.02 536.16z" fill="url(#s69)"/>
<path d="M809.5 711.5L652.53 601.79L677.68 572.59L708.58 548.74z" fill="url(#s75)"/>
<path d="M809.5 711.5L716.2 587.91L742.84 571.74L772.56 561.12z" fill="url(#s81)"/>
<path d="M809.5 711.5L763.35 577.84L791.04 571.31L819.86 570.48z" fill="url(#s87)"/>
<path d="M809.5 711.5L806.89 568.99L835.48 571.35L863.36 579.53z" fill="url(#s93)"/>
<path d="M809.5 711.5L855.83 559.5L885.32 571.85L912.07 590.13z" fill="url(#s99)"/>
<path d="M809.5 711.5L924.96 546.3L955.7 572.76L980.79 605.29z" fill="url(#s105)"/>
<path d="M809.5 711.5L1021.33 551.59L1049.06 597.24L1067.25 648.19z" fill="url(#s111)"/>
<path d="M809.5 711.5L1038.3 632.5L1049.48 679.91L1050.9 729.23z" fill="url(#s117)"/>
<path d="M809.5 711.5L1009.59 711.5L1009.09 725.63z" fill="url(#s0)"/>
<path d="M809.5 711.5L1009.85 722L1008.61 736.12z" fill="url(#s1)"/>
<path d="M809.5 711.5L1010.11 732.58L1008.12 746.7z" fill="url(#s2)"/>
<path d="M809.5 711.5L1010.35 743.31L1007.61 757.42z" fill="url(#s3)"/>
<path d="M809.5 711.5L1010.6 754.24L1007.08 768.34z" fill="url(#s4)"/>
<path d="M809.5 711.5L1010.84 765.45L1006.52 779.53z" fill="url(#s5)"/>
<path d="M809.5 711.5L1011.07 777L1005.94 791.07z" fill="url(#s6)"/>
<path d="M809.5 711.5L1011.31 788.97L1005.34 803.03z" fill="url(#s7)"/>
<path d="M809.5 711.5L1011.55 801.46L1004.7 815.51z" fill="url(#s8)"/>
<path d="M809.5 711.5L1011.8 814.58L1004.02 828.61z" fill="url(#s9)"/>
<path d="M809.5 711.5L1003.96 823.77L995.55 837.23z" fill="url(#s10)"/>
<path d="M809.5 711.5L983.48 824.49L975.07 836.49z" fill="url(#s11)"/>
<path d="M809.5 711.5L965.88 825.12L957.46 835.88z" fill="url(#s12)"/>
<path d="M809.5 711.5L950.5 825.68L942.09 835.36z" fill="url(#s13)"/>
<path d="M809.5 711.5L936.88 826.19L928.46 834.9z" fill="url(#s14)"/>
<path d="M809.5 711.5L924.66 826.66L916.24 834.51z" fill="url(#s15)"/>
<path d="M809.5 711.5L913.58 827.09L905.16 834.15z" fill="url(#s16)"/>
<path d="M809.5 711.5L903.43 827.49L895 833.83z" fill="url(#s17)"/>
<path d="M809.5 711.5L894.04 827.86L885.61 833.54z" fill="url(#s18)"/>
<path d="M809.5 711.5L885.29 828.2L876.86 833.26z" fill="url(#s19)"/>
<path d="M809.5 711.5L877.06 828.52L868.63 833z" fill="url(#s20)"/>
<path d="M809.5 711.5L869.28 828.82L860.84 832.75z" fill="url(#s21)"/>
<path d="M809.5 711.5L861.86 829.1L853.42 832.51z" fill="url(#s22)"/>
<path d="M809.5 711.5L854.74 829.36L846.31 832.26z" fill="url(#s23)"/>
<path d="M809.5 711.5L847.88 829.61L839.44 832.02z" fill="url(#s24)"/>
<path d="M809.5 711.5L841.21 829.84L832.77 831.78z" fill="url(#s25)"/>
<path d="M809.5 711.5L834.7 830.05L826.26 831.53z" fill="url(#s26)"/>
<path d="M809.5 711.5L828.31 830.25L819.87 831.28z" fill="url(#s27)"/>
<path d="M809.5 711.5L822 830.44L813.57 831.02z" fill="url(#s28)"/>
<path d="M809.5 711.5L815.74 830.61L807.31 830.76z" fill="url(#s29)"/>
<path d="M809.5 711.5L809.5 830.78L801.08 830.48z" fill="url(#s30)"/>
<path d="M809.5 711.5L803.24 830.93L794.82 830.19z" fill="url(#s31)"/>
<path d="M809.5 711.5L796.93 831.07L788.52 829.89z" fill="url(#s32)"/>
<path d="M809.5 711.5L790.54 831.21L782.13 829.57z" fill="url(#s33)"/>
<path d="M809.5 711.5L784.03 831.33L775.63 829.24z" fill="url(#s34)"/>
<path d="M809.5 711.5L777.36 831.45L768.97 828.88z" fill="url(#s35)"/>
<path d="M809.5 711.5L770.49 831.57L762.1 828.51z" fill="url(#s36)"/>
<path d="M809.5 711.5L763.37 831.68L754.99 828.12z" fill="url(#s37)"/>
<path d="M809.5 711.5L755.94 831.79L747.58 827.71z" fill="url(#s38)"/>
<path d="M809.5 711.5L748.15 831.9L739.8 827.27z" fill="url(#s39)"/>
<path d="M809.5 711.5L739.92 832.01L731.59 826.79z" fill="url(#s40)"/>
<path d="M809.5 711.5L731.17 832.12L722.84 826.29z" fill="url(#s41)"/>
<path d="M809.5 711.5L721.77 832.25L713.46 825.75z" fill="url(#s42)"/>
<path d="M809.5 711.5L711.61 832.38L703.32 825.17z" fill="url(#s43)"/>
<path d="M809.5 711.5L700.52 832.53L692.25 824.53z" fill="url(#s44)"/>
<path d="M809.5 711.5L688.3 832.7L680.04 823.84z" fill="url(#s45)"/>
<path d="M809.5 711.5L674.67 832.9L666.43 823.08z" fill="url(#s46)"/>
<path d="M809.5 711.5L659.28 833.15L651.06 822.23z" fill="url(#s47)"/>
<path d="M809.5 711.5L641.67 833.44L633.48 821.28z" fill="url(#s48)"/>
<path d="M809.5 711.5L621.18 833.8L613.01 820.19z" fill="url(#s49)"/>
<path d="M809.5 711.5L613.45 824.69L605.95 810.56z" fill="url(#s50)"/>
<path d="M809.5 711.5L613.02 811.61L606.44 797.49z" fill="url(#s51)"/>
<path d="M809.5 711.5L612.61 799.16L606.91 785.04z" fill="url(#s52)"/>
<path d="M809.5 711.5L612.22 787.23L607.36 773.11z" fill="url(#s53)"/>
<path d="M809.5 711.5L611.85 775.72L607.81 761.6z" fill="url(#s54)"/>
<path d="M809.5 711.5L611.51 764.55L608.25 750.44z" fill="url(#s55)"/>
<path d="M809.5 711.5L611.18 753.65L608.69 739.54z" fill="url(#s56)"/>
<path d="M809.5 711.5L610.86 742.96L609.14 728.85z" fill="url(#s57)"/>
<path d="M809.5 711.5L610.57 732.41L609.59 718.31z" fill="url(#s58)"/>
<path d="M809.5 711.5L610.28 721.94L610.04 707.84z" fill="url(#s59)"/>
<path d="M809.5 711.5L610.01 711.5L610.51 697.41z" fill="url(#s60)"/>
<path d="M809.5 711.5L609.74 701.03L610.98 686.95z" fill="url(#s61)"/>
<path d="M809.5 711.5L609.49 690.48L611.47 676.4z" fill="url(#s62)"/>
<path d="M809.5 711.5L609.24 679.78L611.98 665.72z" fill="url(#s63)"/>
<path d="M809.5 711.5L609 668.88L612.51 654.83z" fill="url(#s64)"/>
<path d="M809.5 711.5L608.76 657.71L613.06 643.67z" fill="url(#s65)"/>
<path d="M809.5 711.5L608.53 646.2L613.64 632.17z" fill="url(#s66)"/>
<path d="M809.5 711.5L608.29 634.26L614.25 620.24z" fill="url(#s67)"/>
<path d="M809.5 711.5L608.05 621.81L614.88 607.8z" fill="url(#s68)"/>
<path d="M809.5 711.5L607.8 608.73L615.56 594.74z" fill="url(#s69)"/>
<path d="M809.5 711.5L618.97 601.5L627.22 588.32z" fill="url(#s70)"/>
<path d="M809.5 711.5L639.03 600.8L647.28 589.04z" fill="url(#s71)"/>
<path d="M809.5 711.5L656.28 600.18L664.52 589.63z" fill="url(#s72)"/>
<path d="M809.5 711.5L671.34 599.62L679.59 590.14z" fill="url(#s73)"/>
<path d="M809.5 711.5L684.68 599.12L692.93 590.58z" fill="url(#s74)"/>
<path d="M809.5 711.5L696.65 598.65L704.91 590.97z" fill="url(#s75)"/>
<path d="M809.5 711.5L707.51 598.23L715.77 591.31z" fill="url(#s76)"/>
<path d="M809.5 711.5L717.46 597.84L725.72 591.62z" fill="url(#s77)"/>
<path d="M809.5 711.5L726.65 597.47L734.91 591.91z" fill="url(#s78)"/>
<path d="M809.5 711.5L735.23 597.13L743.49 592.17z" fill="url(#s79)"/>
<path d="M809.5 711.5L743.29 596.82L751.55 592.43z" fill="url(#s80)"/>
<path d="M809.5 711.5L750.92 596.52L759.18 592.67z" fill="url(#s81)"/>
<path d="M809.5 711.5L758.19 596.25L766.45 592.91z" fill="url(#s82)"/>
<path d="M809.5 711.5L765.16 595.99L773.43 593.15z" fill="url(#s83)"/>
<path d="M809.5 711.5L771.89 595.75L780.16 593.38z" fill="url(#s84)"/>
<path d="M809.5 711.5L778.42 595.52L786.69 593.62z" fill="url(#s85)"/>
<path d="M809.5 711.5L784.8 595.31L793.07 593.86z" fill="url(#s86)"/>
<path d="M809.5 711.5L791.07 595.12L799.33 594.11z" fill="url(#s87)"/>
<path d="M809.5 711.5L797.25 594.93L805.51 594.36z" fill="url(#s88)"/>
<path d="M809.5 711.5L803.38 594.76L811.64 594.62z" fill="url(#s89)"/>
<path d="M809.5 711.5L809.5 594.6L817.76 594.89z" fill="url(#s90)"/>
<path d="M809.5 711.5L815.63 594.45L823.89 595.18z" fill="url(#s91)"/>
<path d="M809.5 711.5L821.82 594.31L830.06 595.47z" fill="url(#s92)"/>
<path d="M809.5 711.5L828.08 594.18L836.32 595.79z" fill="url(#s93)"/>
<path d="M809.5 711.5L834.46 594.06L842.7 596.11z" fill="url(#s94)"/>
<path d="M809.5 711.5L841 593.94L849.22 596.46z" fill="url(#s95)"/>
<path d="M809.5 711.5L847.73 593.83L855.95 596.82z" fill="url(#s96)"/>
<path d="M809.5 711.5L854.71 593.72L862.92 597.21z" fill="url(#s97)"/>
<path d="M809.5 711.5L861.99 593.62L870.18 597.62z" fill="url(#s98)"/>
<path d="M809.5 711.5L869.62 593.51L877.8 598.05z" fill="url(#s99)"/>
<path d="M809.5 711.5L877.68 593.4L885.85 598.51z" fill="url(#s100)"/>
<path d="M809.5 711.5L886.26 593.29L894.42 599.01z" fill="url(#s101)"/>
<path d="M809.5 711.5L895.47 593.18L903.61 599.54z" fill="url(#s102)"/>
<path d="M809.5 711.5L905.42 593.05L913.55 600.12z" fill="url(#s103)"/>
<path d="M809.5 711.5L916.29 592.9L924.4 600.74z" fill="url(#s104)"/>
<path d="M809.5 711.5L928.26 592.74L936.35 601.42z" fill="url(#s105)"/>
<path d="M809.5 711.5L941.62 592.54L949.69 602.17z" fill="url(#s106)"/>
<path d="M809.5 711.5L956.69 592.31L964.74 603z" fill="url(#s107)"/>
<path d="M809.5 711.5L973.94 592.03L981.97 603.94z" fill="url(#s108)"/>
<path d="M809.5 711.5L994.01 591.68L1002.01 605.01z" fill="url(#s109)"/>
<path d="M809.5 711.5L1006.13 597.98L1013.66 612.15z" fill="url(#s110)"/>
<path d="M809.5 711.5L1006.57 611.09L1013.17 625.26z" fill="url(#s111)"/>
<path d="M809.5 711.5L1006.98 623.58L1012.7 637.74z" fill="url(#s112)"/>
<path d="M809.5 711.5L1007.37 635.54L1012.24 649.71z" fill="url(#s113)"/>
<path d="M809.5 711.5L1007.74 647.09L1011.79 661.25z" fill="url(#s114)"/>
<path d="M809.5 711.5L1008.08 658.29L1011.35 672.45z" fill="url(#s115)"/>
<path d="M809.5 711.5L1008.41 669.22L1010.9 683.37z" fill="url(#s116)"/>
<path d="M809.5 711.5L1008.73 679.95L1010.46 694.1z" fill="url(#s117)"/>
<path d="M809.5 711.5L1009.03 690.53L1010.01 704.67z" fill="url(#s118)"/>
<path d="M809.5 711.5L1009.31 701.03L1009.55 715.17z" fill="url(#s119)"/>
</g>
<rect x="644.5" y="616" width="330" height="192.5" fill="none" stroke="#8a8a8a" stroke-width="1"/>
<rect x="802.8" y="705" width="13.6" height="13.6" fill="#fff" stroke="#000" stroke-width="1.6"/>
<circle cx="712.3" cy="761.6" r="4.4" fill="#c0c0c0" stroke="#000" stroke-width="1"/>
<ellipse cx="724" cy="757.5" rx="4.7" ry="4.2" fill="#fff" stroke="#000" stroke-width="1"/>
<rect x="992" y="603" width="14" height="38" fill="#000"/>
<g clip-path="url(#cpt)">
<rect x="1006" y="603" width="598.5" height="38" fill="url(#g17)"/>
<text transform="translate(1080.3,629) scale(0.82,1)" font-size="19.5" fill="#f4f4f4" textLength="49.51" lengthAdjust="spacingAndGlyphs">White</text>
<text transform="translate(1156.7,629) scale(0.82,1)" font-size="19.5" fill="#f4f4f4" textLength="31.1" lengthAdjust="spacingAndGlyphs">Red</text>
<text transform="translate(1224.5,629) scale(0.82,1)" font-size="19.5" fill="#f4f4f4" textLength="49.76" lengthAdjust="spacingAndGlyphs">Green</text>
<text transform="translate(1301,629) scale(0.82,1)" font-size="19.5" fill="#f4f4f4" textLength="35.37" lengthAdjust="spacingAndGlyphs">Blue</text>
<text transform="translate(1368.2,629) scale(0.82,1)" font-size="19.5" fill="#f4f4f4" textLength="39.88" lengthAdjust="spacingAndGlyphs">Cyan</text>
<text transform="translate(1444.9,629) scale(0.82,1)" font-size="19.5" fill="#f4f4f4" textLength="73.17" lengthAdjust="spacingAndGlyphs">Magenta</text>
<text transform="translate(1514,629) scale(0.82,1)" font-size="19.5" fill="#f4f4f4" textLength="52.8" lengthAdjust="spacingAndGlyphs">Yellow</text>
<text transform="translate(1590.8,629) scale(0.82,1)" font-size="19.5" fill="#f4f4f4">100W</text>
<rect x="992" y="641" width="14" height="34.8" fill="url(#g16)"/>
<rect x="1006" y="641" width="598.5" height="34.8" fill="#404040"/>
<text transform="translate(1010.5,666) scale(0.72,1)" font-size="21.7" fill="#f0f0f0" textLength="78.3" lengthAdjust="spacingAndGlyphs">x: CIE31</text>
<text transform="translate(1080.3,666) scale(0.725,1)" font-size="21.7" fill="#f4f4f4">0,2980</text>
<text transform="translate(1156.7,666) scale(0.725,1)" font-size="21.7" fill="#f4f4f4">0,6768</text>
<text transform="translate(1224.5,666) scale(0.725,1)" font-size="21.7" fill="#f4f4f4">0,2680</text>
<text transform="translate(1301,666) scale(0.725,1)" font-size="21.7" fill="#f4f4f4">0,1572</text>
<text transform="translate(1368.2,666) scale(0.725,1)" font-size="21.7" fill="#f4f4f4">0,2039</text>
<text transform="translate(1444.9,666) scale(0.725,1)" font-size="21.7" fill="#f4f4f4">0,3095</text>
<text transform="translate(1514,666) scale(0.725,1)" font-size="21.7" fill="#f4f4f4">0,4211</text>
<text transform="translate(1590.8,666) scale(0.725,1)" font-size="21.7" fill="#f4f4f4">0,2999</text>
<rect x="992" y="675.5" width="14" height="34.8" fill="url(#g16)"/>
<rect x="1006" y="675.5" width="598.5" height="34.8" fill="#808080"/>
<text transform="translate(1010.5,700.5) scale(0.72,1)" font-size="21.7" fill="#f0f0f0" textLength="78.3" lengthAdjust="spacingAndGlyphs">y: CIE31</text>
<text transform="translate(1080.3,700.5) scale(0.725,1)" font-size="21.7" fill="#f4f4f4">0,3160</text>
<text transform="translate(1156.7,700.5) scale(0.725,1)" font-size="21.7" fill="#f4f4f4">0,3157</text>
<text transform="translate(1224.5,700.5) scale(0.725,1)" font-size="21.7" fill="#f4f4f4">0,6853</text>
<text transform="translate(1301,700.5) scale(0.725,1)" font-size="21.7" fill="#f4f4f4">0,0479</text>
<text transform="translate(1368.2,700.5) scale(0.725,1)" font-size="21.7" fill="#f4f4f4">0,3180</text>
<text transform="translate(1444.9,700.5) scale(0.725,1)" font-size="21.7" fill="#f4f4f4">0,1259</text>
<text transform="translate(1514,700.5) scale(0.725,1)" font-size="21.7" fill="#f4f4f4">0,5490</text>
<text transform="translate(1590.8,700.5) scale(0.725,1)" font-size="21.7" fill="#f4f4f4">0,3170</text>
<rect x="992" y="710" width="14" height="34.8" fill="url(#g16)"/>
<rect x="1006" y="710" width="598.5" height="34.8" fill="#404040"/>
<text transform="translate(1010.5,735) scale(0.72,1)" font-size="21.7" fill="#f0f0f0">Y</text>
<text transform="translate(1080.3,735) scale(0.725,1)" font-size="21.7" fill="#f4f4f4">256,6130</text>
<text transform="translate(1156.7,735) scale(0.725,1)" font-size="21.7" fill="#f4f4f4">47,4958</text>
<text transform="translate(1224.5,735) scale(0.725,1)" font-size="21.7" fill="#f4f4f4">177,2873</text>
<text transform="translate(1301,735) scale(0.725,1)" font-size="21.7" fill="#f4f4f4">17,5199</text>
<text transform="translate(1368.2,735) scale(0.725,1)" font-size="21.7" fill="#f4f4f4">198,8118</text>
<text transform="translate(1444.9,735) scale(0.725,1)" font-size="21.7" fill="#f4f4f4">65,8134</text>
<text transform="translate(1514,735) scale(0.725,1)" font-size="21.7" fill="#f4f4f4">227,4797</text>
<text transform="translate(1590.8,735) scale(0.725,1)" font-size="21.7" fill="#f4f4f4">499,8800</text>
<rect x="992" y="745" width="14" height="34.8" fill="url(#g16)"/>
<rect x="1006" y="745" width="598.5" height="34.8" fill="#808080"/>
<text transform="translate(1010.5,770) scale(0.72,1)" font-size="21.7" fill="#f0f0f0">Target Y</text>
<text transform="translate(1080.3,770) scale(0.725,1)" font-size="21.7" fill="#f4f4f4">256,6130</text>
<text transform="translate(1156.7,770) scale(0.725,1)" font-size="21.7" fill="#f4f4f4">54,5703</text>
<text transform="translate(1224.5,770) scale(0.725,1)" font-size="21.7" fill="#f4f4f4">183,5189</text>
<text transform="translate(1301,770) scale(0.725,1)" font-size="21.7" fill="#f4f4f4">18,5238</text>
<text transform="translate(1368.2,770) scale(0.725,1)" font-size="21.7" fill="#f4f4f4">202,0427</text>
<text transform="translate(1444.9,770) scale(0.725,1)" font-size="21.7" fill="#f4f4f4">73,0940</text>
<text transform="translate(1514,770) scale(0.725,1)" font-size="21.7" fill="#f4f4f4">238,0892</text>
<text transform="translate(1590.8,770) scale(0.725,1)" font-size="21.7" fill="#f4f4f4">499,8800</text>
<rect x="992" y="780" width="14" height="34.8" fill="url(#g16)"/>
<rect x="1006" y="780" width="598.5" height="34.8" fill="#404040"/>
<text transform="translate(1010.5,805) scale(0.72,1)" font-size="21.7" fill="#f0f0f0">ΔE 2000</text>
<text transform="translate(1080.3,805) scale(0.725,1)" font-size="21.7" fill="#f4f4f4">5,6176</text>
<text transform="translate(1156.7,805) scale(0.725,1)" font-size="21.7" fill="#f4f4f4">2,8987</text>
<text transform="translate(1224.5,805) scale(0.725,1)" font-size="21.7" fill="#f4f4f4">4,8819</text>
<text transform="translate(1301,805) scale(0.725,1)" font-size="21.7" fill="#f4f4f4">4,9903</text>
<text transform="translate(1368.2,805) scale(0.725,1)" font-size="21.7" fill="#f4f4f4">3,2551</text>
<text transform="translate(1444.9,805) scale(0.725,1)" font-size="21.7" fill="#f4f4f4">4,1986</text>
<text transform="translate(1514,805) scale(0.725,1)" font-size="21.7" fill="#f4f4f4">5,0659</text>
<text transform="translate(1590.8,805) scale(0.725,1)" font-size="21.7" fill="#f4f4f4">6,1300</text>
</g>
<rect x="1605.5" y="641" width="15.5" height="152.5" fill="#6c6c6c" rx="4"/>
<rect x="1606" y="641.5" width="14.5" height="19.5" fill="#8e8e8e" rx="4"/>
<path d="M1608.5 655L1613.3 647L1618 655z" fill="#333"/>
<rect x="1607" y="665" width="12.5" height="83" fill="#484848" rx="6"/>
<rect x="1606" y="774" width="14.5" height="19" fill="#8e8e8e" rx="4"/>
<path d="M1608.5 779.5L1618 779.5L1613.3 788z" fill="#333"/>
<rect x="1006.5" y="795" width="598" height="20" fill="#5a5a5a" rx="4"/>
<rect x="1007" y="795.5" width="14.5" height="19" fill="#808080" rx="4"/>
<path d="M1018 799.5L1018 810.5L1010 805z" fill="#333"/>
<rect x="1024" y="797" width="514" height="16" fill="#444444" rx="8"/>
<rect x="1589.5" y="795.5" width="14.5" height="19" fill="#808080" rx="4"/>
<path d="M1593 799.5L1593 810.5L1601 805z" fill="#333"/>
<rect x="1055.5" y="0" width="133.5" height="32.8" fill="url(#g18)"/>
<rect x="1055.5" y="0" width="7.5" height="32.8" fill="#20d820"/>
<rect x="1189" y="0" width="1" height="32.8" fill="#383838"/>
<rect x="1190" y="0" width="44" height="32.8" fill="url(#g18)"/>
<text x="1067" y="10.2" font-size="13.4" fill="#f2f2f2" textLength="81.5" lengthAdjust="spacingAndGlyphs">X-Rite i1Pro 3</text>
<text x="1067.3" y="28.7" font-size="13.4" fill="#f2f2f2" textLength="69.5" lengthAdjust="spacingAndGlyphs">Direct View</text>
<circle cx="1165.3" cy="14.3" r="11.8" fill="url(#g19)"/>
<path d="M1159.1 13L1171.5 13L1165.3 19.5z" fill="#fff"/>
<circle cx="1215.4" cy="15" r="15.3" fill="#0000e6" stroke="#fff" stroke-width="1.2"/>
<text x="1215.4" y="19.2" font-size="11" fill="#fff" text-anchor="middle" font-weight="bold" textLength="19" lengthAdjust="spacingAndGlyphs">674</text>
<rect x="1242" y="0" width="162" height="32.8" fill="url(#g18)"/>
<rect x="1242" y="0" width="7.5" height="32.8" fill="#20d820"/>
<text x="1253" y="10.2" font-size="13.4" fill="#f2f2f2" textLength="80" lengthAdjust="spacingAndGlyphs">Mobile Forge</text>
<circle cx="1383.4" cy="14.3" r="11.8" fill="url(#g19)"/>
<path d="M1377.2 13L1389.6 13L1383.4 19.5z" fill="#fff"/>
<rect x="1412.5" y="0" width="178.2" height="32.8" fill="url(#g18)"/>
<rect x="1413" y="0" width="6.5" height="32.8" fill="#e6e600"/>
<text x="1423.5" y="10.2" font-size="13.4" fill="#f2f2f2" textLength="131" lengthAdjust="spacingAndGlyphs">Direct Display Control</text>
<circle cx="1571" cy="14.3" r="11.8" fill="url(#g19)"/>
<path d="M1564.8 13L1577.2 13L1571 19.5z" fill="#fff"/>
<rect x="1595.6" y="-8" width="41.2" height="38.3" fill="url(#g20)" rx="4.5" stroke="#d4d4d4" stroke-width="1.2"/>
<circle cx="1616.1" cy="13.3" r="12.2" fill="url(#g21)"/>
<path d="M1622.12 11.44L1624.34 12.31L1624.34 14.29L1622.12 15.16L1621.67 16.24L1622.63 18.42L1621.22 19.83L1619.04 18.87L1617.96 19.32L1617.09 21.54L1615.11 21.54L1614.24 19.32L1613.16 18.87L1610.98 19.83L1609.57 18.42L1610.53 16.24L1610.08 15.16L1607.86 14.29L1607.86 12.31L1610.08 11.44L1610.53 10.36L1609.57 8.18L1610.98 6.77L1613.16 7.73L1614.24 7.28L1615.11 5.06L1617.09 5.06L1617.96 7.28L1619.04 7.73L1621.22 6.77L1622.63 8.18L1621.67 10.36zM1612 13.3a4.1 4.1 0 1 0 8.2 0a4.1 4.1 0 1 0 -8.2 0z" fill="#dedede" fill-rule="evenodd"/>
<rect x="1638.5" y="-8" width="42" height="38.3" fill="url(#g20)" rx="4.5" stroke="#d4d4d4" stroke-width="1.2"/>
<circle cx="1655.8" cy="13.3" r="12.2" fill="url(#g21)"/>
<path d="M1651 12.6L1660 4.6L1660 20.6z" fill="#fff"/>
<rect x="0" y="900.5" width="1657" height="4.5" fill="#2a2a2a"/>
<rect x="681" y="902.4" width="61" height="3" fill="#828282"/>
<rect x="2.6" y="824.6" width="155.5" height="76" fill="url(#g22)" rx="4.5"/>
<rect x="9" y="831.2" width="142.2" height="44.6" fill="#c0c0c0" rx="4.5" stroke="url(#g23)" stroke-width="1.6"/>
<text x="80.3" y="894.8" font-size="12.4" fill="#2a2a2a" text-anchor="middle" font-weight="bold" textLength="36.62" lengthAdjust="spacingAndGlyphs">White</text>
<rect x="160.53" y="824.6" width="155.5" height="76" fill="url(#g22)" rx="4.5"/>
<rect x="166.93" y="831.2" width="142.2" height="44.6" fill="#c80000" rx="4.5" stroke="url(#g23)" stroke-width="1.6"/>
<text x="238.23" y="894.8" font-size="12.4" fill="#2a2a2a" text-anchor="middle" font-weight="bold" textLength="24.13" lengthAdjust="spacingAndGlyphs">Red</text>
<rect x="318.46" y="824.6" width="155.5" height="76" fill="url(#g22)" rx="4.5"/>
<rect x="324.86" y="831.2" width="142.2" height="44.6" fill="#00c800" rx="4.5" stroke="url(#g23)" stroke-width="1.6"/>
<text x="396.16" y="894.8" font-size="12.4" fill="#2a2a2a" text-anchor="middle" font-weight="bold" textLength="36.91" lengthAdjust="spacingAndGlyphs">Green</text>
<rect x="476.39" y="824.6" width="155.5" height="76" fill="url(#g22)" rx="4.5"/>
<rect x="482.79" y="831.2" width="142.2" height="44.6" fill="#0000c8" rx="4.5" stroke="url(#g23)" stroke-width="1.6"/>
<text x="554.09" y="894.8" font-size="12.4" fill="#2a2a2a" text-anchor="middle" font-weight="bold" textLength="27.68" lengthAdjust="spacingAndGlyphs">Blue</text>
<rect x="634.32" y="824.6" width="155.5" height="76" fill="url(#g22)" rx="4.5"/>
<rect x="640.72" y="831.2" width="142.2" height="44.6" fill="#00c8c8" rx="4.5" stroke="url(#g23)" stroke-width="1.6"/>
<text x="712.02" y="894.8" font-size="12.4" fill="#2a2a2a" text-anchor="middle" font-weight="bold" textLength="31.23" lengthAdjust="spacingAndGlyphs">Cyan</text>
<rect x="792.25" y="824.6" width="155.5" height="76" fill="url(#g22)" rx="4.5"/>
<rect x="798.65" y="831.2" width="142.2" height="44.6" fill="#c800c8" rx="4.5" stroke="url(#g23)" stroke-width="1.6"/>
<text x="869.95" y="894.8" font-size="12.4" fill="#2a2a2a" text-anchor="middle" font-weight="bold" textLength="51.8" lengthAdjust="spacingAndGlyphs">Magenta</text>
<rect x="950.18" y="824.6" width="155.5" height="76" fill="url(#g22)" rx="4.5"/>
<rect x="956.58" y="831.2" width="142.2" height="44.6" fill="#c8c800" rx="4.5" stroke="url(#g23)" stroke-width="1.6"/>
<text x="1027.88" y="894.8" font-size="12.4" fill="#2a2a2a" text-anchor="middle" font-weight="bold" textLength="39.75" lengthAdjust="spacingAndGlyphs">Yellow</text>
<rect x="1108.11" y="824.8" width="155.2" height="75.6" fill="url(#g24)" rx="4.5"/>
<rect x="1114.71" y="830.6" width="142.6" height="45.4" fill="#ffffff" rx="5"/>
<text x="1185.91" y="894.6" font-size="12.4" fill="#ffffff" text-anchor="middle" font-weight="bold" textLength="33.36" lengthAdjust="spacingAndGlyphs">100W</text>
<rect x="1267.5" y="825" width="59.3" height="22" fill="url(#g25)" rx="4"/>
<circle cx="1297.3" cy="835.6" r="9.3" fill="url(#g26)"/>
<path d="M1292 838.3L1297.3 832L1302.6 838.3z" fill="#2a2a2a"/>
<rect x="1267.5" y="848" width="59.3" height="52.3" fill="url(#g27)" rx="4"/>
<rect x="1279.3" y="856.7" width="36" height="35.5" fill="url(#g28)" rx="5" stroke="#2a2a2a" stroke-width="3"/>
<rect x="1288.7" y="866.2" width="17.5" height="17" fill="url(#g29)"/>
<rect x="1328" y="824" width="58.2" height="38" fill="url(#g25)" rx="1.2"/>
<circle cx="1357.2" cy="843.2" r="12.2" fill="url(#g26)"/>
<rect x="1387.2" y="824" width="55" height="38" fill="url(#g25)" rx="1.2"/>
<circle cx="1414.9" cy="843.2" r="12.2" fill="url(#g26)"/>
<rect x="1443.2" y="824" width="55" height="38" fill="url(#g25)" rx="1.2"/>
<circle cx="1470.5" cy="843.2" r="12.2" fill="url(#g26)"/>
<rect x="1500" y="824" width="55" height="38" fill="url(#g25)" rx="1.2"/>
<circle cx="1526.4" cy="843.2" r="12.2" fill="url(#g26)"/>
<rect x="1556" y="824" width="55.3" height="38" fill="url(#g25)" rx="1.2"/>
<circle cx="1583.2" cy="843.2" r="12.2" fill="url(#g26)"/>
<rect x="1352.2" y="838.2" width="10" height="10" fill="#2e2e2e"/>
<path d="M1410.5 836.5L1421 843.3L1410.5 850z" fill="#2e2e2e"/>
<path d="M1467 837h-3v12.5h3M1474 837h3v12.5h-3" fill="none" stroke="#2e2e2e" stroke-width="1.8"/>
<rect x="1468.3" y="842.3" width="1.6" height="1.6" fill="#2e2e2e"/>
<rect x="1471.3" y="842.3" width="1.6" height="1.6" fill="#2e2e2e"/>
<path d="M1526.4 843.2c-2-3.2-6.6-3.2-6.6 0s4.600 3.200 6.600 0s6.600-3.200 6.600 0s-4.600 3.200-6.600 0z" fill="none" stroke="#2e2e2e" stroke-width="1.8"/>
<path d="M1577.600 842a5.800 5.800 0 0 1 9.800-3.200M1588.800 844.400a5.800 5.800 0 0 1-9.800 3.200" fill="none" stroke="#2e2e2e" stroke-width="2.2"/>
<path d="M1589.500 835.500v5h-5zM1577 851v-5h5z" fill="#2e2e2e"/>
<rect x="1328" y="863.2" width="170.2" height="37.2" fill="url(#g25)" rx="1.5"/>
<rect x="1500" y="863.2" width="160" height="37.2" fill="url(#g25)" rx="1.5"/>
<circle cx="1367.500" cy="882" r="12.200" fill="url(#g26)"/>
<circle cx="1633.300" cy="882" r="12.200" fill="url(#g26)"/>
<path d="M1366.500 876.500l-4.500 5.500l4.500 5.500M1372.500 876.500l-4.500 5.500l4.500 5.500" fill="none" stroke="#2e2e2e" stroke-width="2.1"/>
<path d="M1628.300 876.500l4.500 5.500l-4.500 5.500M1634.300 876.500l4.500 5.500l-4.500 5.500" fill="none" stroke="#2e2e2e" stroke-width="2.1"/>
<text x="1400.6" y="891.2" font-size="25" fill="#303030" textLength="62.6" lengthAdjust="spacingAndGlyphs" stroke="#303030" stroke-width="0.7">Back</text>
<text x="1534" y="891.2" font-size="25" fill="#303030" textLength="64.6" lengthAdjust="spacingAndGlyphs" stroke="#303030" stroke-width="0.7">Next</text>
<path d="M1637.2 841.6L1635.2 857.2L1638.8 858.4L1642.4 857.2L1640.4 841.6zM1638 840.21L1623.84 846.08L1624.6 849.8L1627.44 852.32L1639.6 842.99zM1639.6 840.21L1627.44 830.88L1624.6 833.4L1623.84 837.12L1638 842.99zM1640.4 841.6L1642.4 826L1638.8 824.8L1635.2 826L1637.2 841.6zM1639.6 842.99L1653.76 837.12L1653 833.4L1650.16 830.88L1638 840.21zM1638 842.99L1650.16 852.32L1653 849.8L1653.76 846.08L1639.6 840.21z" transform="translate(1.6,1.8)" fill="#000" fill-opacity="0.4" stroke="#000" stroke-opacity="0.25" stroke-width="1.5" stroke-linejoin="round"/>
<path d="M1637.2 841.6L1635.2 857.2L1638.8 858.4L1642.4 857.2L1640.4 841.6zM1638 840.21L1623.84 846.08L1624.6 849.8L1627.44 852.32L1639.6 842.99zM1639.6 840.21L1627.44 830.88L1624.6 833.4L1623.84 837.12L1638 842.99zM1640.4 841.6L1642.4 826L1638.8 824.8L1635.2 826L1637.2 841.6zM1639.6 842.99L1653.76 837.12L1653 833.4L1650.16 830.88L1638 840.21zM1638 842.99L1650.16 852.32L1653 849.8L1653.76 846.08L1639.6 840.21z" fill="#e40808" stroke="#e40808" stroke-width="0.8" stroke-linejoin="round"/>
</svg>
</body></html>
